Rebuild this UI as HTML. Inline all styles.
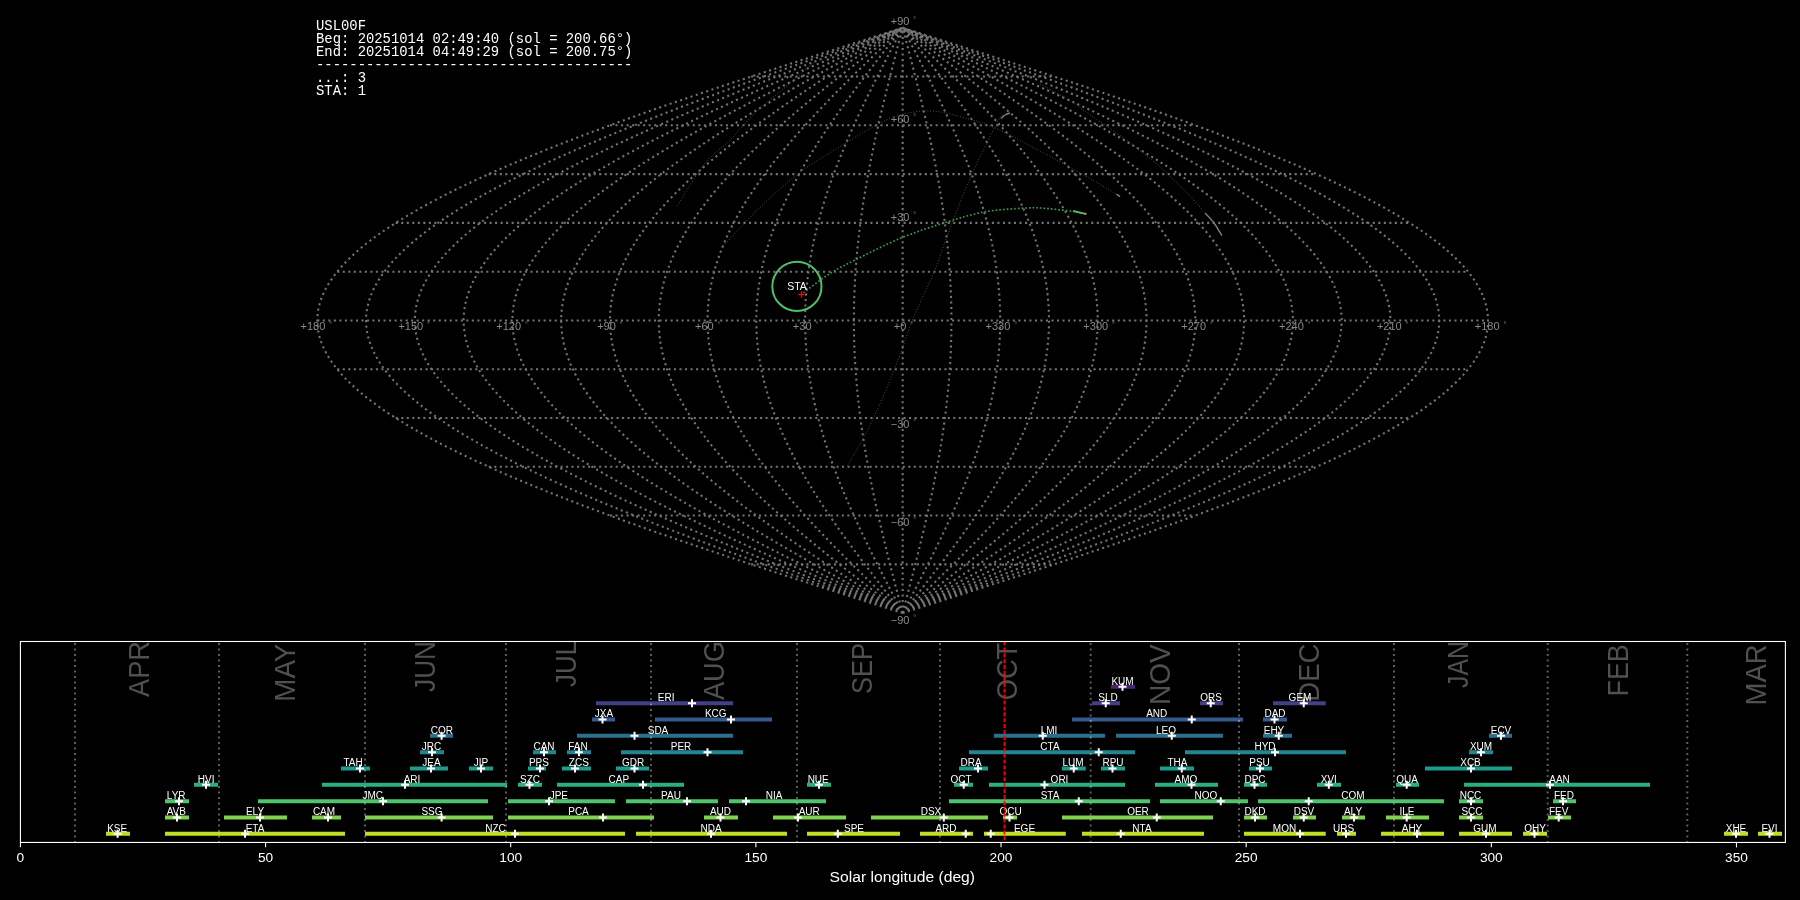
<!DOCTYPE html><html><head><meta charset="utf-8"><style>html,body{margin:0;padding:0;background:#000;width:1800px;height:900px;overflow:hidden}svg{display:block}text{font-family:"Liberation Sans",sans-serif}.mono{font-family:"Liberation Mono",monospace}</style></head><body>
<svg width="1800" height="900" viewBox="0 0 1800 900" style="will-change:transform">
<rect width="1800" height="900" fill="#000"/>
<text class="mono" x="316" y="29.80" fill="#fff" font-size="13.89" style="white-space:pre">USL00F</text>
<text class="mono" x="316" y="42.70" fill="#fff" font-size="13.89" style="white-space:pre">Beg: 20251014 02:49:40 (sol = 200.66°)</text>
<text class="mono" x="316" y="56.40" fill="#fff" font-size="13.89" style="white-space:pre">End: 20251014 04:49:29 (sol = 200.75°)</text>
<text class="mono" x="316" y="69.00" fill="#fff" font-size="13.89" style="white-space:pre">--------------------------------------</text>
<text class="mono" x="316" y="81.80" fill="#fff" font-size="13.89" style="white-space:pre">...: 3</text>
<text class="mono" x="316" y="94.70" fill="#fff" font-size="13.89" style="white-space:pre">STA: 1</text>
<path stroke="#747474" stroke-width="2.083" stroke-dasharray="2.083 3.437" fill="none" d="M902.65 613.13 L907.76 611.50 L912.87 609.88 L917.97 608.25 L923.08 606.63 L928.18 605.00 L933.29 603.37 L938.39 601.75 L943.48 600.12 L948.58 598.50 L953.67 596.87 L958.75 595.24 L963.84 593.62 L968.91 591.99 L973.99 590.37 L979.05 588.74 L984.12 587.11 L989.17 585.49 L994.22 583.86 L999.26 582.24 L1004.30 580.61 L1009.32 578.98 L1014.34 577.36 L1019.35 575.73 L1024.35 574.11 L1029.35 572.48 L1034.33 570.85 L1039.30 569.23 L1044.26 567.60 L1049.21 565.98 L1054.15 564.35 L1059.08 562.72 L1064.00 561.10 L1068.90 559.47 L1073.79 557.85 L1078.67 556.22 L1083.54 554.59 L1088.39 552.97 L1093.22 551.34 L1098.05 549.72 L1102.85 548.09 L1107.65 546.46 L1112.42 544.84 L1117.19 543.21 L1121.93 541.59 L1126.66 539.96 L1131.37 538.33 L1136.06 536.71 L1140.74 535.08 L1145.39 533.46 L1150.03 531.83 L1154.65 530.20 L1159.25 528.58 L1163.84 526.95 L1168.40 525.33 L1172.94 523.70 L1177.46 522.07 L1181.96 520.45 L1186.44 518.82 L1190.90 517.20 L1195.33 515.57 L1199.74 513.94 L1204.13 512.32 L1208.50 510.69 L1212.84 509.07 L1217.16 507.44 L1221.46 505.81 L1225.73 504.19 L1229.98 502.56 L1234.20 500.94 L1238.40 499.31 L1242.57 497.68 L1246.72 496.06 L1250.84 494.43 L1254.93 492.81 L1258.99 491.18 L1263.03 489.55 L1267.05 487.93 L1271.03 486.30 L1274.98 484.68 L1278.91 483.05 L1282.81 481.42 L1286.68 479.80 L1290.52 478.17 L1294.33 476.55 L1298.11 474.92 L1301.86 473.29 L1305.59 471.67 L1309.28 470.04 L1312.93 468.42 L1316.56 466.79 L1320.16 465.16 L1323.72 463.54 L1327.26 461.91 L1330.76 460.29 L1334.22 458.66 L1337.66 457.03 L1341.06 455.41 L1344.43 453.78 L1347.76 452.16 L1351.06 450.53 L1354.33 448.90 L1357.56 447.28 L1360.76 445.65 L1363.92 444.03 L1367.05 442.40 L1370.14 440.77 L1373.20 439.15 L1376.22 437.52 L1379.20 435.90 L1382.15 434.27 L1385.06 432.64 L1387.94 431.02 L1390.77 429.39 L1393.57 427.77 L1396.34 426.14 L1399.06 424.51 L1401.75 422.89 L1404.40 421.26 L1407.01 419.64 L1409.59 418.01 L1412.12 416.38 L1414.62 414.76 L1417.07 413.13 L1419.49 411.51 L1421.87 409.88 L1424.21 408.25 L1426.51 406.63 L1428.77 405.00 L1430.99 403.38 L1433.17 401.75 L1435.30 400.12 L1437.40 398.50 L1439.46 396.87 L1441.48 395.25 L1443.45 393.62 L1445.39 391.99 L1447.28 390.37 L1449.13 388.74 L1450.94 387.12 L1452.71 385.49 L1454.43 383.86 L1456.12 382.24 L1457.76 380.61 L1459.36 378.99 L1460.92 377.36 L1462.43 375.73 L1463.90 374.11 L1465.33 372.48 L1466.72 370.86 L1468.06 369.23 L1469.36 367.60 L1470.62 365.98 L1471.84 364.35 L1473.01 362.73 L1474.13 361.10 L1475.22 359.47 L1476.26 357.85 L1477.26 356.22 L1478.21 354.60 L1479.12 352.97 L1479.98 351.34 L1480.80 349.72 L1481.58 348.09 L1482.31 346.47 L1483.00 344.84 L1483.65 343.21 L1484.25 341.59 L1484.80 339.96 L1485.32 338.34 L1485.78 336.71 L1486.21 335.08 L1486.58 333.46 L1486.92 331.83 L1487.21 330.21 L1487.45 328.58 L1487.65 326.95 L1487.81 325.33 L1487.92 323.70 L1487.99 322.08 L1488.01 320.45 L1487.99 318.82 L1487.92 317.20 L1487.81 315.57 L1487.65 313.95 L1487.45 312.32 L1487.21 310.69 L1486.92 309.07 L1486.58 307.44 L1486.21 305.82 L1485.78 304.19 L1485.32 302.56 L1484.80 300.94 L1484.25 299.31 L1483.65 297.69 L1483.00 296.06 L1482.31 294.43 L1481.58 292.81 L1480.80 291.18 L1479.98 289.56 L1479.12 287.93 L1478.21 286.30 L1477.26 284.68 L1476.26 283.05 L1475.22 281.43 L1474.13 279.80 L1473.01 278.17 L1471.84 276.55 L1470.62 274.92 L1469.36 273.30 L1468.06 271.67 L1466.72 270.04 L1465.33 268.42 L1463.90 266.79 L1462.43 265.17 L1460.92 263.54 L1459.36 261.91 L1457.76 260.29 L1456.12 258.66 L1454.43 257.04 L1452.71 255.41 L1450.94 253.78 L1449.13 252.16 L1447.28 250.53 L1445.39 248.91 L1443.45 247.28 L1441.48 245.65 L1439.46 244.03 L1437.40 242.40 L1435.30 240.78 L1433.17 239.15 L1430.99 237.52 L1428.77 235.90 L1426.51 234.27 L1424.21 232.65 L1421.87 231.02 L1419.49 229.39 L1417.07 227.77 L1414.62 226.14 L1412.12 224.52 L1409.59 222.89 L1407.01 221.26 L1404.40 219.64 L1401.75 218.01 L1399.06 216.39 L1396.34 214.76 L1393.57 213.13 L1390.77 211.51 L1387.94 209.88 L1385.06 208.26 L1382.15 206.63 L1379.20 205.00 L1376.22 203.38 L1373.20 201.75 L1370.14 200.13 L1367.05 198.50 L1363.92 196.87 L1360.76 195.25 L1357.56 193.62 L1354.33 192.00 L1351.06 190.37 L1347.76 188.74 L1344.43 187.12 L1341.06 185.49 L1337.66 183.87 L1334.22 182.24 L1330.76 180.61 L1327.26 178.99 L1323.72 177.36 L1320.16 175.74 L1316.56 174.11 L1312.93 172.48 L1309.28 170.86 L1305.59 169.23 L1301.86 167.61 L1298.11 165.98 L1294.33 164.35 L1290.52 162.73 L1286.68 161.10 L1282.81 159.48 L1278.91 157.85 L1274.98 156.22 L1271.03 154.60 L1267.05 152.97 L1263.03 151.35 L1258.99 149.72 L1254.93 148.09 L1250.84 146.47 L1246.72 144.84 L1242.57 143.22 L1238.40 141.59 L1234.20 139.96 L1229.98 138.34 L1225.73 136.71 L1221.46 135.09 L1217.16 133.46 L1212.84 131.83 L1208.50 130.21 L1204.13 128.58 L1199.74 126.96 L1195.33 125.33 L1190.90 123.70 L1186.44 122.08 L1181.96 120.45 L1177.46 118.83 L1172.94 117.20 L1168.40 115.57 L1163.84 113.95 L1159.25 112.32 L1154.65 110.70 L1150.03 109.07 L1145.39 107.44 L1140.74 105.82 L1136.06 104.19 L1131.37 102.57 L1126.66 100.94 L1121.93 99.31 L1117.19 97.69 L1112.42 96.06 L1107.65 94.44 L1102.85 92.81 L1098.05 91.18 L1093.22 89.56 L1088.39 87.93 L1083.54 86.31 L1078.67 84.68 L1073.79 83.05 L1068.90 81.43 L1064.00 79.80 L1059.08 78.18 L1054.15 76.55 L1049.21 74.92 L1044.26 73.30 L1039.30 71.67 L1034.33 70.05 L1029.35 68.42 L1024.35 66.79 L1019.35 65.17 L1014.34 63.54 L1009.32 61.92 L1004.30 60.29 L999.26 58.66 L994.22 57.04 L989.17 55.41 L984.12 53.79 L979.05 52.16 L973.99 50.53 L968.91 48.91 L963.84 47.28 L958.75 45.66 L953.67 44.03 L948.58 42.40 L943.48 40.78 L938.39 39.15 L933.29 37.53 L928.18 35.90 L923.08 34.27 L917.97 32.65 L912.87 31.02 L907.76 29.40 L902.65 27.77 M902.65 613.13 L907.33 611.50 L912.01 609.88 L916.70 608.25 L921.38 606.63 L926.06 605.00 L930.73 603.37 L935.41 601.75 L940.08 600.12 L944.75 598.50 L949.42 596.87 L954.08 595.24 L958.74 593.62 L963.39 591.99 L968.04 590.37 L972.69 588.74 L977.33 587.11 L981.96 585.49 L986.59 583.86 L991.21 582.24 L995.83 580.61 L1000.43 578.98 L1005.03 577.36 L1009.63 575.73 L1014.21 574.11 L1018.79 572.48 L1023.35 570.85 L1027.91 569.23 L1032.46 567.60 L1037.00 565.98 L1041.53 564.35 L1046.04 562.72 L1050.55 561.10 L1055.05 559.47 L1059.53 557.85 L1064.00 556.22 L1068.46 554.59 L1072.91 552.97 L1077.34 551.34 L1081.76 549.72 L1086.17 548.09 L1090.56 546.46 L1094.94 544.84 L1099.31 543.21 L1103.66 541.59 L1107.99 539.96 L1112.31 538.33 L1116.61 536.71 L1120.90 535.08 L1125.17 533.46 L1129.42 531.83 L1133.65 530.20 L1137.87 528.58 L1142.07 526.95 L1146.25 525.33 L1150.42 523.70 L1154.56 522.07 L1158.68 520.45 L1162.79 518.82 L1166.87 517.20 L1170.94 515.57 L1174.98 513.94 L1179.01 512.32 L1183.01 510.69 L1186.99 509.07 L1190.95 507.44 L1194.89 505.81 L1198.81 504.19 L1202.70 502.56 L1206.57 500.94 L1210.42 499.31 L1214.24 497.68 L1218.04 496.06 L1221.82 494.43 L1225.57 492.81 L1229.30 491.18 L1233.00 489.55 L1236.68 487.93 L1240.33 486.30 L1243.96 484.68 L1247.56 483.05 L1251.13 481.42 L1254.68 479.80 L1258.20 478.17 L1261.69 476.55 L1265.16 474.92 L1268.60 473.29 L1272.01 471.67 L1275.39 470.04 L1278.74 468.42 L1282.07 466.79 L1285.37 465.16 L1288.63 463.54 L1291.87 461.91 L1295.08 460.29 L1298.26 458.66 L1301.41 457.03 L1304.52 455.41 L1307.61 453.78 L1310.67 452.16 L1313.69 450.53 L1316.69 448.90 L1319.65 447.28 L1322.58 445.65 L1325.48 444.03 L1328.35 442.40 L1331.18 440.77 L1333.98 439.15 L1336.75 437.52 L1339.49 435.90 L1342.19 434.27 L1344.86 432.64 L1347.49 431.02 L1350.10 429.39 L1352.66 427.77 L1355.20 426.14 L1357.70 424.51 L1360.16 422.89 L1362.59 421.26 L1364.98 419.64 L1367.34 418.01 L1369.67 416.38 L1371.95 414.76 L1374.21 413.13 L1376.42 411.51 L1378.60 409.88 L1380.75 408.25 L1382.85 406.63 L1384.92 405.00 L1386.96 403.38 L1388.96 401.75 L1390.92 400.12 L1392.84 398.50 L1394.73 396.87 L1396.57 395.25 L1398.39 393.62 L1400.16 391.99 L1401.89 390.37 L1403.59 388.74 L1405.25 387.12 L1406.87 385.49 L1408.45 383.86 L1410.00 382.24 L1411.50 380.61 L1412.97 378.99 L1414.40 377.36 L1415.78 375.73 L1417.13 374.11 L1418.44 372.48 L1419.71 370.86 L1420.95 369.23 L1422.14 367.60 L1423.29 365.98 L1424.40 364.35 L1425.48 362.73 L1426.51 361.10 L1427.50 359.47 L1428.46 357.85 L1429.37 356.22 L1430.24 354.60 L1431.08 352.97 L1431.87 351.34 L1432.62 349.72 L1433.34 348.09 L1434.01 346.47 L1434.64 344.84 L1435.23 343.21 L1435.78 341.59 L1436.29 339.96 L1436.76 338.34 L1437.19 336.71 L1437.58 335.08 L1437.92 333.46 L1438.23 331.83 L1438.49 330.21 L1438.72 328.58 L1438.90 326.95 L1439.05 325.33 L1439.15 323.70 L1439.21 322.08 L1439.23 320.45 L1439.21 318.82 L1439.15 317.20 L1439.05 315.57 L1438.90 313.95 L1438.72 312.32 L1438.49 310.69 L1438.23 309.07 L1437.92 307.44 L1437.58 305.82 L1437.19 304.19 L1436.76 302.56 L1436.29 300.94 L1435.78 299.31 L1435.23 297.69 L1434.64 296.06 L1434.01 294.43 L1433.34 292.81 L1432.62 291.18 L1431.87 289.56 L1431.08 287.93 L1430.24 286.30 L1429.37 284.68 L1428.46 283.05 L1427.50 281.43 L1426.51 279.80 L1425.48 278.17 L1424.40 276.55 L1423.29 274.92 L1422.14 273.30 L1420.95 271.67 L1419.71 270.04 L1418.44 268.42 L1417.13 266.79 L1415.78 265.17 L1414.40 263.54 L1412.97 261.91 L1411.50 260.29 L1410.00 258.66 L1408.45 257.04 L1406.87 255.41 L1405.25 253.78 L1403.59 252.16 L1401.89 250.53 L1400.16 248.91 L1398.39 247.28 L1396.57 245.65 L1394.73 244.03 L1392.84 242.40 L1390.92 240.78 L1388.96 239.15 L1386.96 237.52 L1384.92 235.90 L1382.85 234.27 L1380.75 232.65 L1378.60 231.02 L1376.42 229.39 L1374.21 227.77 L1371.95 226.14 L1369.67 224.52 L1367.34 222.89 L1364.98 221.26 L1362.59 219.64 L1360.16 218.01 L1357.70 216.39 L1355.20 214.76 L1352.66 213.13 L1350.10 211.51 L1347.49 209.88 L1344.86 208.26 L1342.19 206.63 L1339.49 205.00 L1336.75 203.38 L1333.98 201.75 L1331.18 200.13 L1328.35 198.50 L1325.48 196.87 L1322.58 195.25 L1319.65 193.62 L1316.69 192.00 L1313.69 190.37 L1310.67 188.74 L1307.61 187.12 L1304.52 185.49 L1301.41 183.87 L1298.26 182.24 L1295.08 180.61 L1291.87 178.99 L1288.63 177.36 L1285.37 175.74 L1282.07 174.11 L1278.74 172.48 L1275.39 170.86 L1272.01 169.23 L1268.60 167.61 L1265.16 165.98 L1261.69 164.35 L1258.20 162.73 L1254.68 161.10 L1251.13 159.48 L1247.56 157.85 L1243.96 156.22 L1240.33 154.60 L1236.68 152.97 L1233.00 151.35 L1229.30 149.72 L1225.57 148.09 L1221.82 146.47 L1218.04 144.84 L1214.24 143.22 L1210.42 141.59 L1206.57 139.96 L1202.70 138.34 L1198.81 136.71 L1194.89 135.09 L1190.95 133.46 L1186.99 131.83 L1183.01 130.21 L1179.01 128.58 L1174.98 126.96 L1170.94 125.33 L1166.87 123.70 L1162.79 122.08 L1158.68 120.45 L1154.56 118.83 L1150.42 117.20 L1146.25 115.57 L1142.07 113.95 L1137.87 112.32 L1133.65 110.70 L1129.42 109.07 L1125.17 107.44 L1120.90 105.82 L1116.61 104.19 L1112.31 102.57 L1107.99 100.94 L1103.66 99.31 L1099.31 97.69 L1094.94 96.06 L1090.56 94.44 L1086.17 92.81 L1081.76 91.18 L1077.34 89.56 L1072.91 87.93 L1068.46 86.31 L1064.00 84.68 L1059.53 83.05 L1055.05 81.43 L1050.55 79.80 L1046.04 78.18 L1041.53 76.55 L1037.00 74.92 L1032.46 73.30 L1027.91 71.67 L1023.35 70.05 L1018.79 68.42 L1014.21 66.79 L1009.63 65.17 L1005.03 63.54 L1000.43 61.92 L995.83 60.29 L991.21 58.66 L986.59 57.04 L981.96 55.41 L977.33 53.79 L972.69 52.16 L968.04 50.53 L963.39 48.91 L958.74 47.28 L954.08 45.66 L949.42 44.03 L944.75 42.40 L940.08 40.78 L935.41 39.15 L930.73 37.53 L926.06 35.90 L921.38 34.27 L916.70 32.65 L912.01 31.02 L907.33 29.40 L902.65 27.77 M902.65 613.13 L906.91 611.50 L911.16 609.88 L915.42 608.25 L919.67 606.63 L923.93 605.00 L928.18 603.37 L932.43 601.75 L936.68 600.12 L940.92 598.50 L945.16 596.87 L949.40 595.24 L953.64 593.62 L957.87 591.99 L962.10 590.37 L966.32 588.74 L970.54 587.11 L974.75 585.49 L978.96 583.86 L983.16 582.24 L987.36 580.61 L991.54 578.98 L995.73 577.36 L999.90 575.73 L1004.07 574.11 L1008.23 572.48 L1012.38 570.85 L1016.52 569.23 L1020.66 567.60 L1024.79 565.98 L1028.90 564.35 L1033.01 562.72 L1037.11 561.10 L1041.19 559.47 L1045.27 557.85 L1049.33 556.22 L1053.39 554.59 L1057.43 552.97 L1061.46 551.34 L1065.48 549.72 L1069.49 548.09 L1073.48 546.46 L1077.46 544.84 L1081.43 543.21 L1085.38 541.59 L1089.32 539.96 L1093.25 538.33 L1097.16 536.71 L1101.06 535.08 L1104.94 533.46 L1108.80 531.83 L1112.65 530.20 L1116.49 528.58 L1120.31 526.95 L1124.11 525.33 L1127.89 523.70 L1131.66 522.07 L1135.41 520.45 L1139.14 518.82 L1142.85 517.20 L1146.55 515.57 L1150.23 513.94 L1153.89 512.32 L1157.52 510.69 L1161.14 509.07 L1164.74 507.44 L1168.32 505.81 L1171.88 504.19 L1175.42 502.56 L1178.94 500.94 L1182.44 499.31 L1185.92 497.68 L1189.37 496.06 L1192.80 494.43 L1196.22 492.81 L1199.60 491.18 L1202.97 489.55 L1206.31 487.93 L1209.63 486.30 L1212.93 484.68 L1216.20 483.05 L1219.45 481.42 L1222.68 479.80 L1225.88 478.17 L1229.05 476.55 L1232.20 474.92 L1235.33 473.29 L1238.43 471.67 L1241.50 470.04 L1244.55 468.42 L1247.58 466.79 L1250.57 465.16 L1253.54 463.54 L1256.49 461.91 L1259.40 460.29 L1262.29 458.66 L1265.16 457.03 L1267.99 455.41 L1270.80 453.78 L1273.58 452.16 L1276.33 450.53 L1279.05 448.90 L1281.74 447.28 L1284.41 445.65 L1287.04 444.03 L1289.65 442.40 L1292.22 440.77 L1294.77 439.15 L1297.29 437.52 L1299.78 435.90 L1302.23 434.27 L1304.66 432.64 L1307.05 431.02 L1309.42 429.39 L1311.75 427.77 L1314.06 426.14 L1316.33 424.51 L1318.57 422.89 L1320.78 421.26 L1322.95 419.64 L1325.10 418.01 L1327.21 416.38 L1329.29 414.76 L1331.34 413.13 L1333.35 411.51 L1335.33 409.88 L1337.28 408.25 L1339.20 406.63 L1341.08 405.00 L1342.93 403.38 L1344.75 401.75 L1346.53 400.12 L1348.28 398.50 L1349.99 396.87 L1351.67 395.25 L1353.32 393.62 L1354.93 391.99 L1356.51 390.37 L1358.05 388.74 L1359.56 387.12 L1361.03 385.49 L1362.47 383.86 L1363.87 382.24 L1365.24 380.61 L1366.58 378.99 L1367.87 377.36 L1369.14 375.73 L1370.36 374.11 L1371.55 372.48 L1372.71 370.86 L1373.83 369.23 L1374.91 367.60 L1375.96 365.98 L1376.97 364.35 L1377.95 362.73 L1378.89 361.10 L1379.79 359.47 L1380.66 357.85 L1381.49 356.22 L1382.28 354.60 L1383.04 352.97 L1383.76 351.34 L1384.44 349.72 L1385.09 348.09 L1385.70 346.47 L1386.28 344.84 L1386.81 343.21 L1387.31 341.59 L1387.78 339.96 L1388.20 338.34 L1388.59 336.71 L1388.95 335.08 L1389.26 333.46 L1389.54 331.83 L1389.78 330.21 L1389.99 328.58 L1390.15 326.95 L1390.28 325.33 L1390.38 323.70 L1390.43 322.08 L1390.45 320.45 L1390.43 318.82 L1390.38 317.20 L1390.28 315.57 L1390.15 313.95 L1389.99 312.32 L1389.78 310.69 L1389.54 309.07 L1389.26 307.44 L1388.95 305.82 L1388.59 304.19 L1388.20 302.56 L1387.78 300.94 L1387.31 299.31 L1386.81 297.69 L1386.28 296.06 L1385.70 294.43 L1385.09 292.81 L1384.44 291.18 L1383.76 289.56 L1383.04 287.93 L1382.28 286.30 L1381.49 284.68 L1380.66 283.05 L1379.79 281.43 L1378.89 279.80 L1377.95 278.17 L1376.97 276.55 L1375.96 274.92 L1374.91 273.30 L1373.83 271.67 L1372.71 270.04 L1371.55 268.42 L1370.36 266.79 L1369.14 265.17 L1367.87 263.54 L1366.58 261.91 L1365.24 260.29 L1363.87 258.66 L1362.47 257.04 L1361.03 255.41 L1359.56 253.78 L1358.05 252.16 L1356.51 250.53 L1354.93 248.91 L1353.32 247.28 L1351.67 245.65 L1349.99 244.03 L1348.28 242.40 L1346.53 240.78 L1344.75 239.15 L1342.93 237.52 L1341.08 235.90 L1339.20 234.27 L1337.28 232.65 L1335.33 231.02 L1333.35 229.39 L1331.34 227.77 L1329.29 226.14 L1327.21 224.52 L1325.10 222.89 L1322.95 221.26 L1320.78 219.64 L1318.57 218.01 L1316.33 216.39 L1314.06 214.76 L1311.75 213.13 L1309.42 211.51 L1307.05 209.88 L1304.66 208.26 L1302.23 206.63 L1299.78 205.00 L1297.29 203.38 L1294.77 201.75 L1292.22 200.13 L1289.65 198.50 L1287.04 196.87 L1284.41 195.25 L1281.74 193.62 L1279.05 192.00 L1276.33 190.37 L1273.58 188.74 L1270.80 187.12 L1267.99 185.49 L1265.16 183.87 L1262.29 182.24 L1259.40 180.61 L1256.49 178.99 L1253.54 177.36 L1250.57 175.74 L1247.58 174.11 L1244.55 172.48 L1241.50 170.86 L1238.43 169.23 L1235.33 167.61 L1232.20 165.98 L1229.05 164.35 L1225.88 162.73 L1222.68 161.10 L1219.45 159.48 L1216.20 157.85 L1212.93 156.22 L1209.63 154.60 L1206.31 152.97 L1202.97 151.35 L1199.60 149.72 L1196.22 148.09 L1192.80 146.47 L1189.37 144.84 L1185.92 143.22 L1182.44 141.59 L1178.94 139.96 L1175.42 138.34 L1171.88 136.71 L1168.32 135.09 L1164.74 133.46 L1161.14 131.83 L1157.52 130.21 L1153.89 128.58 L1150.23 126.96 L1146.55 125.33 L1142.85 123.70 L1139.14 122.08 L1135.41 120.45 L1131.66 118.83 L1127.89 117.20 L1124.11 115.57 L1120.31 113.95 L1116.49 112.32 L1112.65 110.70 L1108.80 109.07 L1104.94 107.44 L1101.06 105.82 L1097.16 104.19 L1093.25 102.57 L1089.32 100.94 L1085.38 99.31 L1081.43 97.69 L1077.46 96.06 L1073.48 94.44 L1069.49 92.81 L1065.48 91.18 L1061.46 89.56 L1057.43 87.93 L1053.39 86.31 L1049.33 84.68 L1045.27 83.05 L1041.19 81.43 L1037.11 79.80 L1033.01 78.18 L1028.90 76.55 L1024.79 74.92 L1020.66 73.30 L1016.52 71.67 L1012.38 70.05 L1008.23 68.42 L1004.07 66.79 L999.90 65.17 L995.73 63.54 L991.54 61.92 L987.36 60.29 L983.16 58.66 L978.96 57.04 L974.75 55.41 L970.54 53.79 L966.32 52.16 L962.10 50.53 L957.87 48.91 L953.64 47.28 L949.40 45.66 L945.16 44.03 L940.92 42.40 L936.68 40.78 L932.43 39.15 L928.18 37.53 L923.93 35.90 L919.67 34.27 L915.42 32.65 L911.16 31.02 L906.91 29.40 L902.65 27.77 M902.65 613.13 L906.48 611.50 L910.31 609.88 L914.14 608.25 L917.97 606.63 L921.80 605.00 L925.63 603.37 L929.45 601.75 L933.27 600.12 L937.10 598.50 L940.91 596.87 L944.73 595.24 L948.54 593.62 L952.35 591.99 L956.15 590.37 L959.95 588.74 L963.75 587.11 L967.54 585.49 L971.33 583.86 L975.11 582.24 L978.89 580.61 L982.66 578.98 L986.42 577.36 L990.18 575.73 L993.93 574.11 L997.67 572.48 L1001.41 570.85 L1005.14 569.23 L1008.86 567.60 L1012.57 565.98 L1016.28 564.35 L1019.97 562.72 L1023.66 561.10 L1027.34 559.47 L1031.01 557.85 L1034.67 556.22 L1038.31 554.59 L1041.95 552.97 L1045.58 551.34 L1049.20 549.72 L1052.80 548.09 L1056.40 546.46 L1059.98 544.84 L1063.55 543.21 L1067.11 541.59 L1070.66 539.96 L1074.19 538.33 L1077.71 536.71 L1081.22 535.08 L1084.71 533.46 L1088.19 531.83 L1091.65 530.20 L1095.10 528.58 L1098.54 526.95 L1101.96 525.33 L1105.37 523.70 L1108.76 522.07 L1112.13 520.45 L1115.49 518.82 L1118.83 517.20 L1122.16 515.57 L1125.47 513.94 L1128.76 512.32 L1132.04 510.69 L1135.30 509.07 L1138.54 507.44 L1141.76 505.81 L1144.96 504.19 L1148.15 502.56 L1151.31 500.94 L1154.46 499.31 L1157.59 497.68 L1160.70 496.06 L1163.79 494.43 L1166.86 492.81 L1169.91 491.18 L1172.94 489.55 L1175.95 487.93 L1178.93 486.30 L1181.90 484.68 L1184.85 483.05 L1187.77 481.42 L1190.67 479.80 L1193.55 478.17 L1196.41 476.55 L1199.25 474.92 L1202.06 473.29 L1204.85 471.67 L1207.62 470.04 L1210.36 468.42 L1213.08 466.79 L1215.78 465.16 L1218.45 463.54 L1221.10 461.91 L1223.73 460.29 L1226.33 458.66 L1228.91 457.03 L1231.46 455.41 L1233.98 453.78 L1236.48 452.16 L1238.96 450.53 L1241.41 448.90 L1243.83 447.28 L1246.23 445.65 L1248.60 444.03 L1250.95 442.40 L1253.27 440.77 L1255.56 439.15 L1257.82 437.52 L1260.06 435.90 L1262.27 434.27 L1264.46 432.64 L1266.61 431.02 L1268.74 429.39 L1270.84 427.77 L1272.92 426.14 L1274.96 424.51 L1276.98 422.89 L1278.96 421.26 L1280.92 419.64 L1282.85 418.01 L1284.75 416.38 L1286.63 414.76 L1288.47 413.13 L1290.28 411.51 L1292.07 409.88 L1293.82 408.25 L1295.54 406.63 L1297.24 405.00 L1298.90 403.38 L1300.54 401.75 L1302.14 400.12 L1303.71 398.50 L1305.26 396.87 L1306.77 395.25 L1308.25 393.62 L1309.70 391.99 L1311.12 390.37 L1312.51 388.74 L1313.87 387.12 L1315.19 385.49 L1316.49 383.86 L1317.75 382.24 L1318.98 380.61 L1320.18 378.99 L1321.35 377.36 L1322.49 375.73 L1323.59 374.11 L1324.66 372.48 L1325.70 370.86 L1326.71 369.23 L1327.69 367.60 L1328.63 365.98 L1329.54 364.35 L1330.42 362.73 L1331.26 361.10 L1332.08 359.47 L1332.86 357.85 L1333.60 356.22 L1334.32 354.60 L1335.00 352.97 L1335.65 351.34 L1336.26 349.72 L1336.85 348.09 L1337.40 346.47 L1337.91 344.84 L1338.40 343.21 L1338.85 341.59 L1339.27 339.96 L1339.65 338.34 L1340.00 336.71 L1340.32 335.08 L1340.60 333.46 L1340.85 331.83 L1341.07 330.21 L1341.25 328.58 L1341.40 326.95 L1341.52 325.33 L1341.60 323.70 L1341.65 322.08 L1341.67 320.45 L1341.65 318.82 L1341.60 317.20 L1341.52 315.57 L1341.40 313.95 L1341.25 312.32 L1341.07 310.69 L1340.85 309.07 L1340.60 307.44 L1340.32 305.82 L1340.00 304.19 L1339.65 302.56 L1339.27 300.94 L1338.85 299.31 L1338.40 297.69 L1337.91 296.06 L1337.40 294.43 L1336.85 292.81 L1336.26 291.18 L1335.65 289.56 L1335.00 287.93 L1334.32 286.30 L1333.60 284.68 L1332.86 283.05 L1332.08 281.43 L1331.26 279.80 L1330.42 278.17 L1329.54 276.55 L1328.63 274.92 L1327.69 273.30 L1326.71 271.67 L1325.70 270.04 L1324.66 268.42 L1323.59 266.79 L1322.49 265.17 L1321.35 263.54 L1320.18 261.91 L1318.98 260.29 L1317.75 258.66 L1316.49 257.04 L1315.19 255.41 L1313.87 253.78 L1312.51 252.16 L1311.12 250.53 L1309.70 248.91 L1308.25 247.28 L1306.77 245.65 L1305.26 244.03 L1303.71 242.40 L1302.14 240.78 L1300.54 239.15 L1298.90 237.52 L1297.24 235.90 L1295.54 234.27 L1293.82 232.65 L1292.07 231.02 L1290.28 229.39 L1288.47 227.77 L1286.63 226.14 L1284.75 224.52 L1282.85 222.89 L1280.92 221.26 L1278.96 219.64 L1276.98 218.01 L1274.96 216.39 L1272.92 214.76 L1270.84 213.13 L1268.74 211.51 L1266.61 209.88 L1264.46 208.26 L1262.27 206.63 L1260.06 205.00 L1257.82 203.38 L1255.56 201.75 L1253.27 200.13 L1250.95 198.50 L1248.60 196.87 L1246.23 195.25 L1243.83 193.62 L1241.41 192.00 L1238.96 190.37 L1236.48 188.74 L1233.98 187.12 L1231.46 185.49 L1228.91 183.87 L1226.33 182.24 L1223.73 180.61 L1221.10 178.99 L1218.45 177.36 L1215.78 175.74 L1213.08 174.11 L1210.36 172.48 L1207.62 170.86 L1204.85 169.23 L1202.06 167.61 L1199.25 165.98 L1196.41 164.35 L1193.55 162.73 L1190.67 161.10 L1187.77 159.48 L1184.85 157.85 L1181.90 156.22 L1178.93 154.60 L1175.95 152.97 L1172.94 151.35 L1169.91 149.72 L1166.86 148.09 L1163.79 146.47 L1160.70 144.84 L1157.59 143.22 L1154.46 141.59 L1151.31 139.96 L1148.15 138.34 L1144.96 136.71 L1141.76 135.09 L1138.54 133.46 L1135.30 131.83 L1132.04 130.21 L1128.76 128.58 L1125.47 126.96 L1122.16 125.33 L1118.83 123.70 L1115.49 122.08 L1112.13 120.45 L1108.76 118.83 L1105.37 117.20 L1101.96 115.57 L1098.54 113.95 L1095.10 112.32 L1091.65 110.70 L1088.19 109.07 L1084.71 107.44 L1081.22 105.82 L1077.71 104.19 L1074.19 102.57 L1070.66 100.94 L1067.11 99.31 L1063.55 97.69 L1059.98 96.06 L1056.40 94.44 L1052.80 92.81 L1049.20 91.18 L1045.58 89.56 L1041.95 87.93 L1038.31 86.31 L1034.67 84.68 L1031.01 83.05 L1027.34 81.43 L1023.66 79.80 L1019.97 78.18 L1016.28 76.55 L1012.57 74.92 L1008.86 73.30 L1005.14 71.67 L1001.41 70.05 L997.67 68.42 L993.93 66.79 L990.18 65.17 L986.42 63.54 L982.66 61.92 L978.89 60.29 L975.11 58.66 L971.33 57.04 L967.54 55.41 L963.75 53.79 L959.95 52.16 L956.15 50.53 L952.35 48.91 L948.54 47.28 L944.73 45.66 L940.91 44.03 L937.10 42.40 L933.27 40.78 L929.45 39.15 L925.63 37.53 L921.80 35.90 L917.97 34.27 L914.14 32.65 L910.31 31.02 L906.48 29.40 L902.65 27.77 M902.65 613.13 L906.06 611.50 L909.46 609.88 L912.87 608.25 L916.27 606.63 L919.67 605.00 L923.07 603.37 L926.47 601.75 L929.87 600.12 L933.27 598.50 L936.66 596.87 L940.05 595.24 L943.44 593.62 L946.83 591.99 L950.21 590.37 L953.59 588.74 L956.96 587.11 L960.33 585.49 L963.70 583.86 L967.06 582.24 L970.41 580.61 L973.77 578.98 L977.11 577.36 L980.45 575.73 L983.79 574.11 L987.11 572.48 L990.43 570.85 L993.75 569.23 L997.06 567.60 L1000.36 565.98 L1003.65 564.35 L1006.94 562.72 L1010.21 561.10 L1013.48 559.47 L1016.75 557.85 L1020.00 556.22 L1023.24 554.59 L1026.47 552.97 L1029.70 551.34 L1032.91 549.72 L1036.12 548.09 L1039.31 546.46 L1042.50 544.84 L1045.67 543.21 L1048.84 541.59 L1051.99 539.96 L1055.13 538.33 L1058.26 536.71 L1061.37 535.08 L1064.48 533.46 L1067.57 531.83 L1070.65 530.20 L1073.72 528.58 L1076.77 526.95 L1079.82 525.33 L1082.84 523.70 L1085.86 522.07 L1088.86 520.45 L1091.84 518.82 L1094.81 517.20 L1097.77 515.57 L1100.71 513.94 L1103.64 512.32 L1106.55 510.69 L1109.45 509.07 L1112.33 507.44 L1115.19 505.81 L1118.04 504.19 L1120.87 502.56 L1123.68 500.94 L1126.48 499.31 L1129.26 497.68 L1132.03 496.06 L1134.77 494.43 L1137.50 492.81 L1140.21 491.18 L1142.91 489.55 L1145.58 487.93 L1148.24 486.30 L1150.87 484.68 L1153.49 483.05 L1156.09 481.42 L1158.67 479.80 L1161.23 478.17 L1163.77 476.55 L1166.29 474.92 L1168.79 473.29 L1171.27 471.67 L1173.73 470.04 L1176.17 468.42 L1178.59 466.79 L1180.99 465.16 L1183.37 463.54 L1185.72 461.91 L1188.05 460.29 L1190.37 458.66 L1192.65 457.03 L1194.92 455.41 L1197.17 453.78 L1199.39 452.16 L1201.59 450.53 L1203.77 448.90 L1205.92 447.28 L1208.06 445.65 L1210.16 444.03 L1212.25 442.40 L1214.31 440.77 L1216.35 439.15 L1218.36 437.52 L1220.35 435.90 L1222.32 434.27 L1224.26 432.64 L1226.17 431.02 L1228.07 429.39 L1229.93 427.77 L1231.78 426.14 L1233.59 424.51 L1235.38 422.89 L1237.15 421.26 L1238.89 419.64 L1240.61 418.01 L1242.30 416.38 L1243.96 414.76 L1245.60 413.13 L1247.21 411.51 L1248.80 409.88 L1250.36 408.25 L1251.89 406.63 L1253.40 405.00 L1254.87 403.38 L1256.33 401.75 L1257.75 400.12 L1259.15 398.50 L1260.52 396.87 L1261.87 395.25 L1263.18 393.62 L1264.47 391.99 L1265.74 390.37 L1266.97 388.74 L1268.18 387.12 L1269.36 385.49 L1270.51 383.86 L1271.63 382.24 L1272.72 380.61 L1273.79 378.99 L1274.83 377.36 L1275.84 375.73 L1276.82 374.11 L1277.77 372.48 L1278.70 370.86 L1279.59 369.23 L1280.46 367.60 L1281.30 365.98 L1282.11 364.35 L1282.89 362.73 L1283.64 361.10 L1284.36 359.47 L1285.06 357.85 L1285.72 356.22 L1286.36 354.60 L1286.96 352.97 L1287.54 351.34 L1288.09 349.72 L1288.60 348.09 L1289.09 346.47 L1289.55 344.84 L1289.98 343.21 L1290.38 341.59 L1290.75 339.96 L1291.09 338.34 L1291.41 336.71 L1291.69 335.08 L1291.94 333.46 L1292.16 331.83 L1292.36 330.21 L1292.52 328.58 L1292.65 326.95 L1292.76 325.33 L1292.83 323.70 L1292.88 322.08 L1292.89 320.45 L1292.88 318.82 L1292.83 317.20 L1292.76 315.57 L1292.65 313.95 L1292.52 312.32 L1292.36 310.69 L1292.16 309.07 L1291.94 307.44 L1291.69 305.82 L1291.41 304.19 L1291.09 302.56 L1290.75 300.94 L1290.38 299.31 L1289.98 297.69 L1289.55 296.06 L1289.09 294.43 L1288.60 292.81 L1288.09 291.18 L1287.54 289.56 L1286.96 287.93 L1286.36 286.30 L1285.72 284.68 L1285.06 283.05 L1284.36 281.43 L1283.64 279.80 L1282.89 278.17 L1282.11 276.55 L1281.30 274.92 L1280.46 273.30 L1279.59 271.67 L1278.70 270.04 L1277.77 268.42 L1276.82 266.79 L1275.84 265.17 L1274.83 263.54 L1273.79 261.91 L1272.72 260.29 L1271.63 258.66 L1270.51 257.04 L1269.36 255.41 L1268.18 253.78 L1266.97 252.16 L1265.74 250.53 L1264.47 248.91 L1263.18 247.28 L1261.87 245.65 L1260.52 244.03 L1259.15 242.40 L1257.75 240.78 L1256.33 239.15 L1254.87 237.52 L1253.40 235.90 L1251.89 234.27 L1250.36 232.65 L1248.80 231.02 L1247.21 229.39 L1245.60 227.77 L1243.96 226.14 L1242.30 224.52 L1240.61 222.89 L1238.89 221.26 L1237.15 219.64 L1235.38 218.01 L1233.59 216.39 L1231.78 214.76 L1229.93 213.13 L1228.07 211.51 L1226.17 209.88 L1224.26 208.26 L1222.32 206.63 L1220.35 205.00 L1218.36 203.38 L1216.35 201.75 L1214.31 200.13 L1212.25 198.50 L1210.16 196.87 L1208.06 195.25 L1205.92 193.62 L1203.77 192.00 L1201.59 190.37 L1199.39 188.74 L1197.17 187.12 L1194.92 185.49 L1192.65 183.87 L1190.37 182.24 L1188.05 180.61 L1185.72 178.99 L1183.37 177.36 L1180.99 175.74 L1178.59 174.11 L1176.17 172.48 L1173.73 170.86 L1171.27 169.23 L1168.79 167.61 L1166.29 165.98 L1163.77 164.35 L1161.23 162.73 L1158.67 161.10 L1156.09 159.48 L1153.49 157.85 L1150.87 156.22 L1148.24 154.60 L1145.58 152.97 L1142.91 151.35 L1140.21 149.72 L1137.50 148.09 L1134.77 146.47 L1132.03 144.84 L1129.26 143.22 L1126.48 141.59 L1123.68 139.96 L1120.87 138.34 L1118.04 136.71 L1115.19 135.09 L1112.33 133.46 L1109.45 131.83 L1106.55 130.21 L1103.64 128.58 L1100.71 126.96 L1097.77 125.33 L1094.81 123.70 L1091.84 122.08 L1088.86 120.45 L1085.86 118.83 L1082.84 117.20 L1079.82 115.57 L1076.77 113.95 L1073.72 112.32 L1070.65 110.70 L1067.57 109.07 L1064.48 107.44 L1061.37 105.82 L1058.26 104.19 L1055.13 102.57 L1051.99 100.94 L1048.84 99.31 L1045.67 97.69 L1042.50 96.06 L1039.31 94.44 L1036.12 92.81 L1032.91 91.18 L1029.70 89.56 L1026.47 87.93 L1023.24 86.31 L1020.00 84.68 L1016.75 83.05 L1013.48 81.43 L1010.21 79.80 L1006.94 78.18 L1003.65 76.55 L1000.36 74.92 L997.06 73.30 L993.75 71.67 L990.43 70.05 L987.11 68.42 L983.79 66.79 L980.45 65.17 L977.11 63.54 L973.77 61.92 L970.41 60.29 L967.06 58.66 L963.70 57.04 L960.33 55.41 L956.96 53.79 L953.59 52.16 L950.21 50.53 L946.83 48.91 L943.44 47.28 L940.05 45.66 L936.66 44.03 L933.27 42.40 L929.87 40.78 L926.47 39.15 L923.07 37.53 L919.67 35.90 L916.27 34.27 L912.87 32.65 L909.46 31.02 L906.06 29.40 L902.65 27.77 M902.65 613.13 L905.63 611.50 L908.61 609.88 L911.59 608.25 L914.57 606.63 L917.54 605.00 L920.52 603.37 L923.50 601.75 L926.47 600.12 L929.44 598.50 L932.41 596.87 L935.38 595.24 L938.34 593.62 L941.30 591.99 L944.26 590.37 L947.22 588.74 L950.17 587.11 L953.12 585.49 L956.07 583.86 L959.01 582.24 L961.94 580.61 L964.88 578.98 L967.80 577.36 L970.73 575.73 L973.64 574.11 L976.56 572.48 L979.46 570.85 L982.36 569.23 L985.26 567.60 L988.14 565.98 L991.03 564.35 L993.90 562.72 L996.77 561.10 L999.63 559.47 L1002.48 557.85 L1005.33 556.22 L1008.17 554.59 L1011.00 552.97 L1013.82 551.34 L1016.63 549.72 L1019.44 548.09 L1022.23 546.46 L1025.02 544.84 L1027.80 543.21 L1030.56 541.59 L1033.32 539.96 L1036.07 538.33 L1038.81 536.71 L1041.53 535.08 L1044.25 533.46 L1046.96 531.83 L1049.65 530.20 L1052.34 528.58 L1055.01 526.95 L1057.67 525.33 L1060.32 523.70 L1062.96 522.07 L1065.58 520.45 L1068.19 518.82 L1070.79 517.20 L1073.38 515.57 L1075.95 513.94 L1078.51 512.32 L1081.06 510.69 L1083.60 509.07 L1086.12 507.44 L1088.62 505.81 L1091.11 504.19 L1093.59 502.56 L1096.06 500.94 L1098.50 499.31 L1100.94 497.68 L1103.36 496.06 L1105.76 494.43 L1108.15 492.81 L1110.52 491.18 L1112.87 489.55 L1115.21 487.93 L1117.54 486.30 L1119.85 484.68 L1122.14 483.05 L1124.41 481.42 L1126.67 479.80 L1128.91 478.17 L1131.13 476.55 L1133.34 474.92 L1135.53 473.29 L1137.70 471.67 L1139.85 470.04 L1141.98 468.42 L1144.10 466.79 L1146.20 465.16 L1148.28 463.54 L1150.34 461.91 L1152.38 460.29 L1154.40 458.66 L1156.40 457.03 L1158.39 455.41 L1160.35 453.78 L1162.30 452.16 L1164.22 450.53 L1166.13 448.90 L1168.01 447.28 L1169.88 445.65 L1171.72 444.03 L1173.55 442.40 L1175.35 440.77 L1177.13 439.15 L1178.90 437.52 L1180.64 435.90 L1182.36 434.27 L1184.06 432.64 L1185.73 431.02 L1187.39 429.39 L1189.02 427.77 L1190.63 426.14 L1192.22 424.51 L1193.79 422.89 L1195.34 421.26 L1196.86 419.64 L1198.36 418.01 L1199.84 416.38 L1201.30 414.76 L1202.73 413.13 L1204.14 411.51 L1205.53 409.88 L1206.89 408.25 L1208.23 406.63 L1209.55 405.00 L1210.85 403.38 L1212.12 401.75 L1213.37 400.12 L1214.59 398.50 L1215.79 396.87 L1216.97 395.25 L1218.12 393.62 L1219.25 391.99 L1220.35 390.37 L1221.43 388.74 L1222.49 387.12 L1223.52 385.49 L1224.52 383.86 L1225.51 382.24 L1226.46 380.61 L1227.40 378.99 L1228.31 377.36 L1229.19 375.73 L1230.05 374.11 L1230.88 372.48 L1231.69 370.86 L1232.48 369.23 L1233.23 367.60 L1233.97 365.98 L1234.68 364.35 L1235.36 362.73 L1236.02 361.10 L1236.65 359.47 L1237.26 357.85 L1237.84 356.22 L1238.39 354.60 L1238.92 352.97 L1239.43 351.34 L1239.91 349.72 L1240.36 348.09 L1240.79 346.47 L1241.19 344.84 L1241.56 343.21 L1241.92 341.59 L1242.24 339.96 L1242.54 338.34 L1242.81 336.71 L1243.06 335.08 L1243.28 333.46 L1243.47 331.83 L1243.64 330.21 L1243.79 328.58 L1243.90 326.95 L1243.99 325.33 L1244.06 323.70 L1244.10 322.08 L1244.11 320.45 L1244.10 318.82 L1244.06 317.20 L1243.99 315.57 L1243.90 313.95 L1243.79 312.32 L1243.64 310.69 L1243.47 309.07 L1243.28 307.44 L1243.06 305.82 L1242.81 304.19 L1242.54 302.56 L1242.24 300.94 L1241.92 299.31 L1241.56 297.69 L1241.19 296.06 L1240.79 294.43 L1240.36 292.81 L1239.91 291.18 L1239.43 289.56 L1238.92 287.93 L1238.39 286.30 L1237.84 284.68 L1237.26 283.05 L1236.65 281.43 L1236.02 279.80 L1235.36 278.17 L1234.68 276.55 L1233.97 274.92 L1233.23 273.30 L1232.48 271.67 L1231.69 270.04 L1230.88 268.42 L1230.05 266.79 L1229.19 265.17 L1228.31 263.54 L1227.40 261.91 L1226.46 260.29 L1225.51 258.66 L1224.52 257.04 L1223.52 255.41 L1222.49 253.78 L1221.43 252.16 L1220.35 250.53 L1219.25 248.91 L1218.12 247.28 L1216.97 245.65 L1215.79 244.03 L1214.59 242.40 L1213.37 240.78 L1212.12 239.15 L1210.85 237.52 L1209.55 235.90 L1208.23 234.27 L1206.89 232.65 L1205.53 231.02 L1204.14 229.39 L1202.73 227.77 L1201.30 226.14 L1199.84 224.52 L1198.36 222.89 L1196.86 221.26 L1195.34 219.64 L1193.79 218.01 L1192.22 216.39 L1190.63 214.76 L1189.02 213.13 L1187.39 211.51 L1185.73 209.88 L1184.06 208.26 L1182.36 206.63 L1180.64 205.00 L1178.90 203.38 L1177.13 201.75 L1175.35 200.13 L1173.55 198.50 L1171.72 196.87 L1169.88 195.25 L1168.01 193.62 L1166.13 192.00 L1164.22 190.37 L1162.30 188.74 L1160.35 187.12 L1158.39 185.49 L1156.40 183.87 L1154.40 182.24 L1152.38 180.61 L1150.34 178.99 L1148.28 177.36 L1146.20 175.74 L1144.10 174.11 L1141.98 172.48 L1139.85 170.86 L1137.70 169.23 L1135.53 167.61 L1133.34 165.98 L1131.13 164.35 L1128.91 162.73 L1126.67 161.10 L1124.41 159.48 L1122.14 157.85 L1119.85 156.22 L1117.54 154.60 L1115.21 152.97 L1112.87 151.35 L1110.52 149.72 L1108.15 148.09 L1105.76 146.47 L1103.36 144.84 L1100.94 143.22 L1098.50 141.59 L1096.06 139.96 L1093.59 138.34 L1091.11 136.71 L1088.62 135.09 L1086.12 133.46 L1083.60 131.83 L1081.06 130.21 L1078.51 128.58 L1075.95 126.96 L1073.38 125.33 L1070.79 123.70 L1068.19 122.08 L1065.58 120.45 L1062.96 118.83 L1060.32 117.20 L1057.67 115.57 L1055.01 113.95 L1052.34 112.32 L1049.65 110.70 L1046.96 109.07 L1044.25 107.44 L1041.53 105.82 L1038.81 104.19 L1036.07 102.57 L1033.32 100.94 L1030.56 99.31 L1027.80 97.69 L1025.02 96.06 L1022.23 94.44 L1019.44 92.81 L1016.63 91.18 L1013.82 89.56 L1011.00 87.93 L1008.17 86.31 L1005.33 84.68 L1002.48 83.05 L999.63 81.43 L996.77 79.80 L993.90 78.18 L991.03 76.55 L988.14 74.92 L985.26 73.30 L982.36 71.67 L979.46 70.05 L976.56 68.42 L973.64 66.79 L970.73 65.17 L967.80 63.54 L964.88 61.92 L961.94 60.29 L959.01 58.66 L956.07 57.04 L953.12 55.41 L950.17 53.79 L947.22 52.16 L944.26 50.53 L941.30 48.91 L938.34 47.28 L935.38 45.66 L932.41 44.03 L929.44 42.40 L926.47 40.78 L923.50 39.15 L920.52 37.53 L917.54 35.90 L914.57 34.27 L911.59 32.65 L908.61 31.02 L905.63 29.40 L902.65 27.77 M902.65 613.13 L905.20 611.50 L907.76 609.88 L910.31 608.25 L912.86 606.63 L915.42 605.00 L917.97 603.37 L920.52 601.75 L923.07 600.12 L925.61 598.50 L928.16 596.87 L930.70 595.24 L933.24 593.62 L935.78 591.99 L938.32 590.37 L940.85 588.74 L943.38 587.11 L945.91 585.49 L948.44 583.86 L950.96 582.24 L953.47 580.61 L955.99 578.98 L958.50 577.36 L961.00 575.73 L963.50 574.11 L966.00 572.48 L968.49 570.85 L970.97 569.23 L973.46 567.60 L975.93 565.98 L978.40 564.35 L980.87 562.72 L983.32 561.10 L985.78 559.47 L988.22 557.85 L990.66 556.22 L993.09 554.59 L995.52 552.97 L997.94 551.34 L1000.35 549.72 L1002.75 548.09 L1005.15 546.46 L1007.54 544.84 L1009.92 543.21 L1012.29 541.59 L1014.65 539.96 L1017.01 538.33 L1019.36 536.71 L1021.69 535.08 L1024.02 533.46 L1026.34 531.83 L1028.65 530.20 L1030.95 528.58 L1033.24 526.95 L1035.52 525.33 L1037.79 523.70 L1040.05 522.07 L1042.30 520.45 L1044.54 518.82 L1046.77 517.20 L1048.99 515.57 L1051.20 513.94 L1053.39 512.32 L1055.57 510.69 L1057.75 509.07 L1059.91 507.44 L1062.05 505.81 L1064.19 504.19 L1066.31 502.56 L1068.43 500.94 L1070.52 499.31 L1072.61 497.68 L1074.68 496.06 L1076.74 494.43 L1078.79 492.81 L1080.82 491.18 L1082.84 489.55 L1084.85 487.93 L1086.84 486.30 L1088.82 484.68 L1090.78 483.05 L1092.73 481.42 L1094.67 479.80 L1096.59 478.17 L1098.49 476.55 L1100.38 474.92 L1102.26 473.29 L1104.12 471.67 L1105.96 470.04 L1107.79 468.42 L1109.61 466.79 L1111.40 465.16 L1113.19 463.54 L1114.95 461.91 L1116.70 460.29 L1118.44 458.66 L1120.15 457.03 L1121.85 455.41 L1123.54 453.78 L1125.21 452.16 L1126.86 450.53 L1128.49 448.90 L1130.11 447.28 L1131.70 445.65 L1133.28 444.03 L1134.85 442.40 L1136.39 440.77 L1137.92 439.15 L1139.43 437.52 L1140.93 435.90 L1142.40 434.27 L1143.86 432.64 L1145.29 431.02 L1146.71 429.39 L1148.11 427.77 L1149.49 426.14 L1150.86 424.51 L1152.20 422.89 L1153.53 421.26 L1154.83 419.64 L1156.12 418.01 L1157.39 416.38 L1158.63 414.76 L1159.86 413.13 L1161.07 411.51 L1162.26 409.88 L1163.43 408.25 L1164.58 406.63 L1165.71 405.00 L1166.82 403.38 L1167.91 401.75 L1168.98 400.12 L1170.03 398.50 L1171.06 396.87 L1172.06 395.25 L1173.05 393.62 L1174.02 391.99 L1174.96 390.37 L1175.89 388.74 L1176.80 387.12 L1177.68 385.49 L1178.54 383.86 L1179.38 382.24 L1180.21 380.61 L1181.01 378.99 L1181.78 377.36 L1182.54 375.73 L1183.28 374.11 L1183.99 372.48 L1184.69 370.86 L1185.36 369.23 L1186.01 367.60 L1186.64 365.98 L1187.24 364.35 L1187.83 362.73 L1188.39 361.10 L1188.93 359.47 L1189.45 357.85 L1189.95 356.22 L1190.43 354.60 L1190.88 352.97 L1191.32 351.34 L1191.73 349.72 L1192.12 348.09 L1192.48 346.47 L1192.83 344.84 L1193.15 343.21 L1193.45 341.59 L1193.73 339.96 L1193.98 338.34 L1194.22 336.71 L1194.43 335.08 L1194.62 333.46 L1194.78 331.83 L1194.93 330.21 L1195.05 328.58 L1195.15 326.95 L1195.23 325.33 L1195.29 323.70 L1195.32 322.08 L1195.33 320.45 L1195.32 318.82 L1195.29 317.20 L1195.23 315.57 L1195.15 313.95 L1195.05 312.32 L1194.93 310.69 L1194.78 309.07 L1194.62 307.44 L1194.43 305.82 L1194.22 304.19 L1193.98 302.56 L1193.73 300.94 L1193.45 299.31 L1193.15 297.69 L1192.83 296.06 L1192.48 294.43 L1192.12 292.81 L1191.73 291.18 L1191.32 289.56 L1190.88 287.93 L1190.43 286.30 L1189.95 284.68 L1189.45 283.05 L1188.93 281.43 L1188.39 279.80 L1187.83 278.17 L1187.24 276.55 L1186.64 274.92 L1186.01 273.30 L1185.36 271.67 L1184.69 270.04 L1183.99 268.42 L1183.28 266.79 L1182.54 265.17 L1181.78 263.54 L1181.01 261.91 L1180.21 260.29 L1179.38 258.66 L1178.54 257.04 L1177.68 255.41 L1176.80 253.78 L1175.89 252.16 L1174.96 250.53 L1174.02 248.91 L1173.05 247.28 L1172.06 245.65 L1171.06 244.03 L1170.03 242.40 L1168.98 240.78 L1167.91 239.15 L1166.82 237.52 L1165.71 235.90 L1164.58 234.27 L1163.43 232.65 L1162.26 231.02 L1161.07 229.39 L1159.86 227.77 L1158.63 226.14 L1157.39 224.52 L1156.12 222.89 L1154.83 221.26 L1153.53 219.64 L1152.20 218.01 L1150.86 216.39 L1149.49 214.76 L1148.11 213.13 L1146.71 211.51 L1145.29 209.88 L1143.86 208.26 L1142.40 206.63 L1140.93 205.00 L1139.43 203.38 L1137.92 201.75 L1136.39 200.13 L1134.85 198.50 L1133.28 196.87 L1131.70 195.25 L1130.11 193.62 L1128.49 192.00 L1126.86 190.37 L1125.21 188.74 L1123.54 187.12 L1121.85 185.49 L1120.15 183.87 L1118.44 182.24 L1116.70 180.61 L1114.95 178.99 L1113.19 177.36 L1111.40 175.74 L1109.61 174.11 L1107.79 172.48 L1105.96 170.86 L1104.12 169.23 L1102.26 167.61 L1100.38 165.98 L1098.49 164.35 L1096.59 162.73 L1094.67 161.10 L1092.73 159.48 L1090.78 157.85 L1088.82 156.22 L1086.84 154.60 L1084.85 152.97 L1082.84 151.35 L1080.82 149.72 L1078.79 148.09 L1076.74 146.47 L1074.68 144.84 L1072.61 143.22 L1070.52 141.59 L1068.43 139.96 L1066.31 138.34 L1064.19 136.71 L1062.05 135.09 L1059.91 133.46 L1057.75 131.83 L1055.57 130.21 L1053.39 128.58 L1051.20 126.96 L1048.99 125.33 L1046.77 123.70 L1044.54 122.08 L1042.30 120.45 L1040.05 118.83 L1037.79 117.20 L1035.52 115.57 L1033.24 113.95 L1030.95 112.32 L1028.65 110.70 L1026.34 109.07 L1024.02 107.44 L1021.69 105.82 L1019.36 104.19 L1017.01 102.57 L1014.65 100.94 L1012.29 99.31 L1009.92 97.69 L1007.54 96.06 L1005.15 94.44 L1002.75 92.81 L1000.35 91.18 L997.94 89.56 L995.52 87.93 L993.09 86.31 L990.66 84.68 L988.22 83.05 L985.78 81.43 L983.32 79.80 L980.87 78.18 L978.40 76.55 L975.93 74.92 L973.46 73.30 L970.97 71.67 L968.49 70.05 L966.00 68.42 L963.50 66.79 L961.00 65.17 L958.50 63.54 L955.99 61.92 L953.47 60.29 L950.96 58.66 L948.44 57.04 L945.91 55.41 L943.38 53.79 L940.85 52.16 L938.32 50.53 L935.78 48.91 L933.24 47.28 L930.70 45.66 L928.16 44.03 L925.61 42.40 L923.07 40.78 L920.52 39.15 L917.97 37.53 L915.42 35.90 L912.86 34.27 L910.31 32.65 L907.76 31.02 L905.20 29.40 L902.65 27.77 M902.65 613.13 L904.78 611.50 L906.91 609.88 L909.03 608.25 L911.16 606.63 L913.29 605.00 L915.41 603.37 L917.54 601.75 L919.66 600.12 L921.79 598.50 L923.91 596.87 L926.03 595.24 L928.14 593.62 L930.26 591.99 L932.37 590.37 L934.49 588.74 L936.59 587.11 L938.70 585.49 L940.80 583.86 L942.91 582.24 L945.00 580.61 L947.10 578.98 L949.19 577.36 L951.28 575.73 L953.36 574.11 L955.44 572.48 L957.52 570.85 L959.59 569.23 L961.65 567.60 L963.72 565.98 L965.78 564.35 L967.83 562.72 L969.88 561.10 L971.92 559.47 L973.96 557.85 L975.99 556.22 L978.02 554.59 L980.04 552.97 L982.06 551.34 L984.07 549.72 L986.07 548.09 L988.07 546.46 L990.06 544.84 L992.04 543.21 L994.02 541.59 L995.99 539.96 L997.95 538.33 L999.90 536.71 L1001.85 535.08 L1003.79 533.46 L1005.73 531.83 L1007.65 530.20 L1009.57 528.58 L1011.48 526.95 L1013.38 525.33 L1015.27 523.70 L1017.15 522.07 L1019.03 520.45 L1020.90 518.82 L1022.75 517.20 L1024.60 515.57 L1026.44 513.94 L1028.27 512.32 L1030.09 510.69 L1031.90 509.07 L1033.70 507.44 L1035.49 505.81 L1037.27 504.19 L1039.04 502.56 L1040.80 500.94 L1042.55 499.31 L1044.28 497.68 L1046.01 496.06 L1047.73 494.43 L1049.43 492.81 L1051.13 491.18 L1052.81 489.55 L1054.48 487.93 L1056.14 486.30 L1057.79 484.68 L1059.43 483.05 L1061.05 481.42 L1062.66 479.80 L1064.26 478.17 L1065.85 476.55 L1067.43 474.92 L1068.99 473.29 L1070.54 471.67 L1072.08 470.04 L1073.60 468.42 L1075.11 466.79 L1076.61 465.16 L1078.10 463.54 L1079.57 461.91 L1081.03 460.29 L1082.47 458.66 L1083.90 457.03 L1085.32 455.41 L1086.72 453.78 L1088.11 452.16 L1089.49 450.53 L1090.85 448.90 L1092.20 447.28 L1093.53 445.65 L1094.85 444.03 L1096.15 442.40 L1097.44 440.77 L1098.71 439.15 L1099.97 437.52 L1101.21 435.90 L1102.44 434.27 L1103.65 432.64 L1104.85 431.02 L1106.03 429.39 L1107.20 427.77 L1108.35 426.14 L1109.49 424.51 L1110.61 422.89 L1111.71 421.26 L1112.80 419.64 L1113.87 418.01 L1114.93 416.38 L1115.97 414.76 L1116.99 413.13 L1118.00 411.51 L1118.99 409.88 L1119.97 408.25 L1120.92 406.63 L1121.87 405.00 L1122.79 403.38 L1123.70 401.75 L1124.59 400.12 L1125.46 398.50 L1126.32 396.87 L1127.16 395.25 L1127.98 393.62 L1128.79 391.99 L1129.58 390.37 L1130.35 388.74 L1131.10 387.12 L1131.84 385.49 L1132.56 383.86 L1133.26 382.24 L1133.95 380.61 L1134.61 378.99 L1135.26 377.36 L1135.89 375.73 L1136.51 374.11 L1137.10 372.48 L1137.68 370.86 L1138.24 369.23 L1138.78 367.60 L1139.31 365.98 L1139.81 364.35 L1140.30 362.73 L1140.77 361.10 L1141.22 359.47 L1141.65 357.85 L1142.07 356.22 L1142.47 354.60 L1142.84 352.97 L1143.21 351.34 L1143.55 349.72 L1143.87 348.09 L1144.18 346.47 L1144.46 344.84 L1144.73 343.21 L1144.98 341.59 L1145.21 339.96 L1145.43 338.34 L1145.62 336.71 L1145.80 335.08 L1145.96 333.46 L1146.10 331.83 L1146.22 330.21 L1146.32 328.58 L1146.40 326.95 L1146.47 325.33 L1146.51 323.70 L1146.54 322.08 L1146.55 320.45 L1146.54 318.82 L1146.51 317.20 L1146.47 315.57 L1146.40 313.95 L1146.32 312.32 L1146.22 310.69 L1146.10 309.07 L1145.96 307.44 L1145.80 305.82 L1145.62 304.19 L1145.43 302.56 L1145.21 300.94 L1144.98 299.31 L1144.73 297.69 L1144.46 296.06 L1144.18 294.43 L1143.87 292.81 L1143.55 291.18 L1143.21 289.56 L1142.84 287.93 L1142.47 286.30 L1142.07 284.68 L1141.65 283.05 L1141.22 281.43 L1140.77 279.80 L1140.30 278.17 L1139.81 276.55 L1139.31 274.92 L1138.78 273.30 L1138.24 271.67 L1137.68 270.04 L1137.10 268.42 L1136.51 266.79 L1135.89 265.17 L1135.26 263.54 L1134.61 261.91 L1133.95 260.29 L1133.26 258.66 L1132.56 257.04 L1131.84 255.41 L1131.10 253.78 L1130.35 252.16 L1129.58 250.53 L1128.79 248.91 L1127.98 247.28 L1127.16 245.65 L1126.32 244.03 L1125.46 242.40 L1124.59 240.78 L1123.70 239.15 L1122.79 237.52 L1121.87 235.90 L1120.92 234.27 L1119.97 232.65 L1118.99 231.02 L1118.00 229.39 L1116.99 227.77 L1115.97 226.14 L1114.93 224.52 L1113.87 222.89 L1112.80 221.26 L1111.71 219.64 L1110.61 218.01 L1109.49 216.39 L1108.35 214.76 L1107.20 213.13 L1106.03 211.51 L1104.85 209.88 L1103.65 208.26 L1102.44 206.63 L1101.21 205.00 L1099.97 203.38 L1098.71 201.75 L1097.44 200.13 L1096.15 198.50 L1094.85 196.87 L1093.53 195.25 L1092.20 193.62 L1090.85 192.00 L1089.49 190.37 L1088.11 188.74 L1086.72 187.12 L1085.32 185.49 L1083.90 183.87 L1082.47 182.24 L1081.03 180.61 L1079.57 178.99 L1078.10 177.36 L1076.61 175.74 L1075.11 174.11 L1073.60 172.48 L1072.08 170.86 L1070.54 169.23 L1068.99 167.61 L1067.43 165.98 L1065.85 164.35 L1064.26 162.73 L1062.66 161.10 L1061.05 159.48 L1059.43 157.85 L1057.79 156.22 L1056.14 154.60 L1054.48 152.97 L1052.81 151.35 L1051.13 149.72 L1049.43 148.09 L1047.73 146.47 L1046.01 144.84 L1044.28 143.22 L1042.55 141.59 L1040.80 139.96 L1039.04 138.34 L1037.27 136.71 L1035.49 135.09 L1033.70 133.46 L1031.90 131.83 L1030.09 130.21 L1028.27 128.58 L1026.44 126.96 L1024.60 125.33 L1022.75 123.70 L1020.90 122.08 L1019.03 120.45 L1017.15 118.83 L1015.27 117.20 L1013.38 115.57 L1011.48 113.95 L1009.57 112.32 L1007.65 110.70 L1005.73 109.07 L1003.79 107.44 L1001.85 105.82 L999.90 104.19 L997.95 102.57 L995.99 100.94 L994.02 99.31 L992.04 97.69 L990.06 96.06 L988.07 94.44 L986.07 92.81 L984.07 91.18 L982.06 89.56 L980.04 87.93 L978.02 86.31 L975.99 84.68 L973.96 83.05 L971.92 81.43 L969.88 79.80 L967.83 78.18 L965.78 76.55 L963.72 74.92 L961.65 73.30 L959.59 71.67 L957.52 70.05 L955.44 68.42 L953.36 66.79 L951.28 65.17 L949.19 63.54 L947.10 61.92 L945.00 60.29 L942.91 58.66 L940.80 57.04 L938.70 55.41 L936.59 53.79 L934.49 52.16 L932.37 50.53 L930.26 48.91 L928.14 47.28 L926.03 45.66 L923.91 44.03 L921.79 42.40 L919.66 40.78 L917.54 39.15 L915.41 37.53 L913.29 35.90 L911.16 34.27 L909.03 32.65 L906.91 31.02 L904.78 29.40 L902.65 27.77 M902.65 613.13 L904.35 611.50 L906.06 609.88 L907.76 608.25 L909.46 606.63 L911.16 605.00 L912.86 603.37 L914.56 601.75 L916.26 600.12 L917.96 598.50 L919.66 596.87 L921.35 595.24 L923.05 593.62 L924.74 591.99 L926.43 590.37 L928.12 588.74 L929.81 587.11 L931.49 585.49 L933.17 583.86 L934.85 582.24 L936.53 580.61 L938.21 578.98 L939.88 577.36 L941.55 575.73 L943.22 574.11 L944.88 572.48 L946.54 570.85 L948.20 569.23 L949.85 567.60 L951.50 565.98 L953.15 564.35 L954.79 562.72 L956.43 561.10 L958.07 559.47 L959.70 557.85 L961.32 556.22 L962.95 554.59 L964.56 552.97 L966.17 551.34 L967.78 549.72 L969.38 548.09 L970.98 546.46 L972.57 544.84 L974.16 543.21 L975.74 541.59 L977.32 539.96 L978.89 538.33 L980.45 536.71 L982.01 535.08 L983.56 533.46 L985.11 531.83 L986.65 530.20 L988.18 528.58 L989.71 526.95 L991.23 525.33 L992.75 523.70 L994.25 522.07 L995.75 520.45 L997.25 518.82 L998.73 517.20 L1000.21 515.57 L1001.68 513.94 L1003.14 512.32 L1004.60 510.69 L1006.05 509.07 L1007.49 507.44 L1008.92 505.81 L1010.34 504.19 L1011.76 502.56 L1013.17 500.94 L1014.57 499.31 L1015.96 497.68 L1017.34 496.06 L1018.71 494.43 L1020.08 492.81 L1021.43 491.18 L1022.78 489.55 L1024.12 487.93 L1025.44 486.30 L1026.76 484.68 L1028.07 483.05 L1029.37 481.42 L1030.66 479.80 L1031.94 478.17 L1033.21 476.55 L1034.47 474.92 L1035.72 473.29 L1036.96 471.67 L1038.19 470.04 L1039.41 468.42 L1040.62 466.79 L1041.82 465.16 L1043.01 463.54 L1044.19 461.91 L1045.35 460.29 L1046.51 458.66 L1047.65 457.03 L1048.79 455.41 L1049.91 453.78 L1051.02 452.16 L1052.12 450.53 L1053.21 448.90 L1054.29 447.28 L1055.35 445.65 L1056.41 444.03 L1057.45 442.40 L1058.48 440.77 L1059.50 439.15 L1060.51 437.52 L1061.50 435.90 L1062.48 434.27 L1063.45 432.64 L1064.41 431.02 L1065.36 429.39 L1066.29 427.77 L1067.21 426.14 L1068.12 424.51 L1069.02 422.89 L1069.90 421.26 L1070.77 419.64 L1071.63 418.01 L1072.47 416.38 L1073.31 414.76 L1074.12 413.13 L1074.93 411.51 L1075.72 409.88 L1076.50 408.25 L1077.27 406.63 L1078.02 405.00 L1078.76 403.38 L1079.49 401.75 L1080.20 400.12 L1080.90 398.50 L1081.59 396.87 L1082.26 395.25 L1082.92 393.62 L1083.56 391.99 L1084.19 390.37 L1084.81 388.74 L1085.41 387.12 L1086.00 385.49 L1086.58 383.86 L1087.14 382.24 L1087.69 380.61 L1088.22 378.99 L1088.74 377.36 L1089.24 375.73 L1089.73 374.11 L1090.21 372.48 L1090.67 370.86 L1091.12 369.23 L1091.55 367.60 L1091.97 365.98 L1092.38 364.35 L1092.77 362.73 L1093.14 361.10 L1093.51 359.47 L1093.85 357.85 L1094.19 356.22 L1094.50 354.60 L1094.81 352.97 L1095.09 351.34 L1095.37 349.72 L1095.63 348.09 L1095.87 346.47 L1096.10 344.84 L1096.32 343.21 L1096.52 341.59 L1096.70 339.96 L1096.87 338.34 L1097.03 336.71 L1097.17 335.08 L1097.29 333.46 L1097.41 331.83 L1097.50 330.21 L1097.58 328.58 L1097.65 326.95 L1097.70 325.33 L1097.74 323.70 L1097.76 322.08 L1097.77 320.45 L1097.76 318.82 L1097.74 317.20 L1097.70 315.57 L1097.65 313.95 L1097.58 312.32 L1097.50 310.69 L1097.41 309.07 L1097.29 307.44 L1097.17 305.82 L1097.03 304.19 L1096.87 302.56 L1096.70 300.94 L1096.52 299.31 L1096.32 297.69 L1096.10 296.06 L1095.87 294.43 L1095.63 292.81 L1095.37 291.18 L1095.09 289.56 L1094.81 287.93 L1094.50 286.30 L1094.19 284.68 L1093.85 283.05 L1093.51 281.43 L1093.14 279.80 L1092.77 278.17 L1092.38 276.55 L1091.97 274.92 L1091.55 273.30 L1091.12 271.67 L1090.67 270.04 L1090.21 268.42 L1089.73 266.79 L1089.24 265.17 L1088.74 263.54 L1088.22 261.91 L1087.69 260.29 L1087.14 258.66 L1086.58 257.04 L1086.00 255.41 L1085.41 253.78 L1084.81 252.16 L1084.19 250.53 L1083.56 248.91 L1082.92 247.28 L1082.26 245.65 L1081.59 244.03 L1080.90 242.40 L1080.20 240.78 L1079.49 239.15 L1078.76 237.52 L1078.02 235.90 L1077.27 234.27 L1076.50 232.65 L1075.72 231.02 L1074.93 229.39 L1074.12 227.77 L1073.31 226.14 L1072.47 224.52 L1071.63 222.89 L1070.77 221.26 L1069.90 219.64 L1069.02 218.01 L1068.12 216.39 L1067.21 214.76 L1066.29 213.13 L1065.36 211.51 L1064.41 209.88 L1063.45 208.26 L1062.48 206.63 L1061.50 205.00 L1060.51 203.38 L1059.50 201.75 L1058.48 200.13 L1057.45 198.50 L1056.41 196.87 L1055.35 195.25 L1054.29 193.62 L1053.21 192.00 L1052.12 190.37 L1051.02 188.74 L1049.91 187.12 L1048.79 185.49 L1047.65 183.87 L1046.51 182.24 L1045.35 180.61 L1044.19 178.99 L1043.01 177.36 L1041.82 175.74 L1040.62 174.11 L1039.41 172.48 L1038.19 170.86 L1036.96 169.23 L1035.72 167.61 L1034.47 165.98 L1033.21 164.35 L1031.94 162.73 L1030.66 161.10 L1029.37 159.48 L1028.07 157.85 L1026.76 156.22 L1025.44 154.60 L1024.12 152.97 L1022.78 151.35 L1021.43 149.72 L1020.08 148.09 L1018.71 146.47 L1017.34 144.84 L1015.96 143.22 L1014.57 141.59 L1013.17 139.96 L1011.76 138.34 L1010.34 136.71 L1008.92 135.09 L1007.49 133.46 L1006.05 131.83 L1004.60 130.21 L1003.14 128.58 L1001.68 126.96 L1000.21 125.33 L998.73 123.70 L997.25 122.08 L995.75 120.45 L994.25 118.83 L992.75 117.20 L991.23 115.57 L989.71 113.95 L988.18 112.32 L986.65 110.70 L985.11 109.07 L983.56 107.44 L982.01 105.82 L980.45 104.19 L978.89 102.57 L977.32 100.94 L975.74 99.31 L974.16 97.69 L972.57 96.06 L970.98 94.44 L969.38 92.81 L967.78 91.18 L966.17 89.56 L964.56 87.93 L962.95 86.31 L961.32 84.68 L959.70 83.05 L958.07 81.43 L956.43 79.80 L954.79 78.18 L953.15 76.55 L951.50 74.92 L949.85 73.30 L948.20 71.67 L946.54 70.05 L944.88 68.42 L943.22 66.79 L941.55 65.17 L939.88 63.54 L938.21 61.92 L936.53 60.29 L934.85 58.66 L933.17 57.04 L931.49 55.41 L929.81 53.79 L928.12 52.16 L926.43 50.53 L924.74 48.91 L923.05 47.28 L921.35 45.66 L919.66 44.03 L917.96 42.40 L916.26 40.78 L914.56 39.15 L912.86 37.53 L911.16 35.90 L909.46 34.27 L907.76 32.65 L906.06 31.02 L904.35 29.40 L902.65 27.77 M902.65 613.13 L903.93 611.50 L905.20 609.88 L906.48 608.25 L907.76 606.63 L909.03 605.00 L910.31 603.37 L911.58 601.75 L912.86 600.12 L914.13 598.50 L915.40 596.87 L916.68 595.24 L917.95 593.62 L919.22 591.99 L920.48 590.37 L921.75 588.74 L923.02 587.11 L924.28 585.49 L925.54 583.86 L926.80 582.24 L928.06 580.61 L929.32 578.98 L930.57 577.36 L931.83 575.73 L933.08 574.11 L934.32 572.48 L935.57 570.85 L936.81 569.23 L938.05 567.60 L939.29 565.98 L940.53 564.35 L941.76 562.72 L942.99 561.10 L944.21 559.47 L945.44 557.85 L946.66 556.22 L947.87 554.59 L949.08 552.97 L950.29 551.34 L951.50 549.72 L952.70 548.09 L953.90 546.46 L955.09 544.84 L956.28 543.21 L957.47 541.59 L958.65 539.96 L959.83 538.33 L961.00 536.71 L962.17 535.08 L963.34 533.46 L964.50 531.83 L965.65 530.20 L966.80 528.58 L967.95 526.95 L969.09 525.33 L970.22 523.70 L971.35 522.07 L972.48 520.45 L973.60 518.82 L974.71 517.20 L975.82 515.57 L976.92 513.94 L978.02 512.32 L979.11 510.69 L980.20 509.07 L981.28 507.44 L982.35 505.81 L983.42 504.19 L984.48 502.56 L985.54 500.94 L986.59 499.31 L987.63 497.68 L988.67 496.06 L989.70 494.43 L990.72 492.81 L991.74 491.18 L992.75 489.55 L993.75 487.93 L994.74 486.30 L995.73 484.68 L996.72 483.05 L997.69 481.42 L998.66 479.80 L999.62 478.17 L1000.57 476.55 L1001.52 474.92 L1002.45 473.29 L1003.38 471.67 L1004.31 470.04 L1005.22 468.42 L1006.13 466.79 L1007.03 465.16 L1007.92 463.54 L1008.80 461.91 L1009.68 460.29 L1010.54 458.66 L1011.40 457.03 L1012.25 455.41 L1013.09 453.78 L1013.93 452.16 L1014.75 450.53 L1015.57 448.90 L1016.38 447.28 L1017.18 445.65 L1017.97 444.03 L1018.75 442.40 L1019.52 440.77 L1020.29 439.15 L1021.04 437.52 L1021.79 435.90 L1022.52 434.27 L1023.25 432.64 L1023.97 431.02 L1024.68 429.39 L1025.38 427.77 L1026.07 426.14 L1026.75 424.51 L1027.43 422.89 L1028.09 421.26 L1028.74 419.64 L1029.38 418.01 L1030.02 416.38 L1030.64 414.76 L1031.26 413.13 L1031.86 411.51 L1032.46 409.88 L1033.04 408.25 L1033.61 406.63 L1034.18 405.00 L1034.73 403.38 L1035.28 401.75 L1035.81 400.12 L1036.34 398.50 L1036.85 396.87 L1037.36 395.25 L1037.85 393.62 L1038.33 391.99 L1038.81 390.37 L1039.27 388.74 L1039.72 387.12 L1040.16 385.49 L1040.60 383.86 L1041.02 382.24 L1041.43 380.61 L1041.83 378.99 L1042.22 377.36 L1042.60 375.73 L1042.96 374.11 L1043.32 372.48 L1043.67 370.86 L1044.00 369.23 L1044.33 367.60 L1044.64 365.98 L1044.95 364.35 L1045.24 362.73 L1045.52 361.10 L1045.79 359.47 L1046.05 357.85 L1046.30 356.22 L1046.54 354.60 L1046.77 352.97 L1046.98 351.34 L1047.19 349.72 L1047.38 348.09 L1047.57 346.47 L1047.74 344.84 L1047.90 343.21 L1048.05 341.59 L1048.19 339.96 L1048.32 338.34 L1048.43 336.71 L1048.54 335.08 L1048.63 333.46 L1048.72 331.83 L1048.79 330.21 L1048.85 328.58 L1048.90 326.95 L1048.94 325.33 L1048.97 323.70 L1048.98 322.08 L1048.99 320.45 L1048.98 318.82 L1048.97 317.20 L1048.94 315.57 L1048.90 313.95 L1048.85 312.32 L1048.79 310.69 L1048.72 309.07 L1048.63 307.44 L1048.54 305.82 L1048.43 304.19 L1048.32 302.56 L1048.19 300.94 L1048.05 299.31 L1047.90 297.69 L1047.74 296.06 L1047.57 294.43 L1047.38 292.81 L1047.19 291.18 L1046.98 289.56 L1046.77 287.93 L1046.54 286.30 L1046.30 284.68 L1046.05 283.05 L1045.79 281.43 L1045.52 279.80 L1045.24 278.17 L1044.95 276.55 L1044.64 274.92 L1044.33 273.30 L1044.00 271.67 L1043.67 270.04 L1043.32 268.42 L1042.96 266.79 L1042.60 265.17 L1042.22 263.54 L1041.83 261.91 L1041.43 260.29 L1041.02 258.66 L1040.60 257.04 L1040.16 255.41 L1039.72 253.78 L1039.27 252.16 L1038.81 250.53 L1038.33 248.91 L1037.85 247.28 L1037.36 245.65 L1036.85 244.03 L1036.34 242.40 L1035.81 240.78 L1035.28 239.15 L1034.73 237.52 L1034.18 235.90 L1033.61 234.27 L1033.04 232.65 L1032.46 231.02 L1031.86 229.39 L1031.26 227.77 L1030.64 226.14 L1030.02 224.52 L1029.38 222.89 L1028.74 221.26 L1028.09 219.64 L1027.43 218.01 L1026.75 216.39 L1026.07 214.76 L1025.38 213.13 L1024.68 211.51 L1023.97 209.88 L1023.25 208.26 L1022.52 206.63 L1021.79 205.00 L1021.04 203.38 L1020.29 201.75 L1019.52 200.13 L1018.75 198.50 L1017.97 196.87 L1017.18 195.25 L1016.38 193.62 L1015.57 192.00 L1014.75 190.37 L1013.93 188.74 L1013.09 187.12 L1012.25 185.49 L1011.40 183.87 L1010.54 182.24 L1009.68 180.61 L1008.80 178.99 L1007.92 177.36 L1007.03 175.74 L1006.13 174.11 L1005.22 172.48 L1004.31 170.86 L1003.38 169.23 L1002.45 167.61 L1001.52 165.98 L1000.57 164.35 L999.62 162.73 L998.66 161.10 L997.69 159.48 L996.72 157.85 L995.73 156.22 L994.74 154.60 L993.75 152.97 L992.75 151.35 L991.74 149.72 L990.72 148.09 L989.70 146.47 L988.67 144.84 L987.63 143.22 L986.59 141.59 L985.54 139.96 L984.48 138.34 L983.42 136.71 L982.35 135.09 L981.28 133.46 L980.20 131.83 L979.11 130.21 L978.02 128.58 L976.92 126.96 L975.82 125.33 L974.71 123.70 L973.60 122.08 L972.48 120.45 L971.35 118.83 L970.22 117.20 L969.09 115.57 L967.95 113.95 L966.80 112.32 L965.65 110.70 L964.50 109.07 L963.34 107.44 L962.17 105.82 L961.00 104.19 L959.83 102.57 L958.65 100.94 L957.47 99.31 L956.28 97.69 L955.09 96.06 L953.90 94.44 L952.70 92.81 L951.50 91.18 L950.29 89.56 L949.08 87.93 L947.87 86.31 L946.66 84.68 L945.44 83.05 L944.21 81.43 L942.99 79.80 L941.76 78.18 L940.53 76.55 L939.29 74.92 L938.05 73.30 L936.81 71.67 L935.57 70.05 L934.32 68.42 L933.08 66.79 L931.83 65.17 L930.57 63.54 L929.32 61.92 L928.06 60.29 L926.80 58.66 L925.54 57.04 L924.28 55.41 L923.02 53.79 L921.75 52.16 L920.48 50.53 L919.22 48.91 L917.95 47.28 L916.68 45.66 L915.40 44.03 L914.13 42.40 L912.86 40.78 L911.58 39.15 L910.31 37.53 L909.03 35.90 L907.76 34.27 L906.48 32.65 L905.20 31.02 L903.93 29.40 L902.65 27.77 M902.65 613.13 L903.50 611.50 L904.35 609.88 L905.20 608.25 L906.05 606.63 L906.91 605.00 L907.76 603.37 L908.61 601.75 L909.46 600.12 L910.30 598.50 L911.15 596.87 L912.00 595.24 L912.85 593.62 L913.69 591.99 L914.54 590.37 L915.38 588.74 L916.23 587.11 L917.07 585.49 L917.91 583.86 L918.75 582.24 L919.59 580.61 L920.43 578.98 L921.27 577.36 L922.10 575.73 L922.93 574.11 L923.77 572.48 L924.60 570.85 L925.42 569.23 L926.25 567.60 L927.08 565.98 L927.90 564.35 L928.72 562.72 L929.54 561.10 L930.36 559.47 L931.17 557.85 L931.99 556.22 L932.80 554.59 L933.61 552.97 L934.41 551.34 L935.22 549.72 L936.02 548.09 L936.82 546.46 L937.61 544.84 L938.41 543.21 L939.20 541.59 L939.98 539.96 L940.77 538.33 L941.55 536.71 L942.33 535.08 L943.11 533.46 L943.88 531.83 L944.65 530.20 L945.42 528.58 L946.18 526.95 L946.94 525.33 L947.70 523.70 L948.45 522.07 L949.20 520.45 L949.95 518.82 L950.69 517.20 L951.43 515.57 L952.17 513.94 L952.90 512.32 L953.62 510.69 L954.35 509.07 L955.07 507.44 L955.78 505.81 L956.50 504.19 L957.20 502.56 L957.91 500.94 L958.61 499.31 L959.30 497.68 L959.99 496.06 L960.68 494.43 L961.36 492.81 L962.04 491.18 L962.71 489.55 L963.38 487.93 L964.05 486.30 L964.71 484.68 L965.36 483.05 L966.01 481.42 L966.66 479.80 L967.30 478.17 L967.93 476.55 L968.56 474.92 L969.19 473.29 L969.81 471.67 L970.42 470.04 L971.03 468.42 L971.64 466.79 L972.23 465.16 L972.83 463.54 L973.42 461.91 L974.00 460.29 L974.58 458.66 L975.15 457.03 L975.72 455.41 L976.28 453.78 L976.84 452.16 L977.39 450.53 L977.93 448.90 L978.47 447.28 L979.00 445.65 L979.53 444.03 L980.05 442.40 L980.56 440.77 L981.07 439.15 L981.58 437.52 L982.08 435.90 L982.57 434.27 L983.05 432.64 L983.53 431.02 L984.00 429.39 L984.47 427.77 L984.93 426.14 L985.39 424.51 L985.83 422.89 L986.28 421.26 L986.71 419.64 L987.14 418.01 L987.56 416.38 L987.98 414.76 L988.39 413.13 L988.79 411.51 L989.19 409.88 L989.58 408.25 L989.96 406.63 L990.34 405.00 L990.71 403.38 L991.07 401.75 L991.43 400.12 L991.78 398.50 L992.12 396.87 L992.45 395.25 L992.78 393.62 L993.11 391.99 L993.42 390.37 L993.73 388.74 L994.03 387.12 L994.33 385.49 L994.61 383.86 L994.89 382.24 L995.17 380.61 L995.44 378.99 L995.69 377.36 L995.95 375.73 L996.19 374.11 L996.43 372.48 L996.66 370.86 L996.89 369.23 L997.10 367.60 L997.31 365.98 L997.51 364.35 L997.71 362.73 L997.90 361.10 L998.08 359.47 L998.25 357.85 L998.42 356.22 L998.58 354.60 L998.73 352.97 L998.87 351.34 L999.01 349.72 L999.14 348.09 L999.26 346.47 L999.38 344.84 L999.48 343.21 L999.58 341.59 L999.68 339.96 L999.76 338.34 L999.84 336.71 L999.91 335.08 L999.97 333.46 L1000.03 331.83 L1000.08 330.21 L1000.12 328.58 L1000.15 326.95 L1000.18 325.33 L1000.20 323.70 L1000.21 322.08 L1000.21 320.45 L1000.21 318.82 L1000.20 317.20 L1000.18 315.57 L1000.15 313.95 L1000.12 312.32 L1000.08 310.69 L1000.03 309.07 L999.97 307.44 L999.91 305.82 L999.84 304.19 L999.76 302.56 L999.68 300.94 L999.58 299.31 L999.48 297.69 L999.38 296.06 L999.26 294.43 L999.14 292.81 L999.01 291.18 L998.87 289.56 L998.73 287.93 L998.58 286.30 L998.42 284.68 L998.25 283.05 L998.08 281.43 L997.90 279.80 L997.71 278.17 L997.51 276.55 L997.31 274.92 L997.10 273.30 L996.89 271.67 L996.66 270.04 L996.43 268.42 L996.19 266.79 L995.95 265.17 L995.69 263.54 L995.44 261.91 L995.17 260.29 L994.89 258.66 L994.61 257.04 L994.33 255.41 L994.03 253.78 L993.73 252.16 L993.42 250.53 L993.11 248.91 L992.78 247.28 L992.45 245.65 L992.12 244.03 L991.78 242.40 L991.43 240.78 L991.07 239.15 L990.71 237.52 L990.34 235.90 L989.96 234.27 L989.58 232.65 L989.19 231.02 L988.79 229.39 L988.39 227.77 L987.98 226.14 L987.56 224.52 L987.14 222.89 L986.71 221.26 L986.28 219.64 L985.83 218.01 L985.39 216.39 L984.93 214.76 L984.47 213.13 L984.00 211.51 L983.53 209.88 L983.05 208.26 L982.57 206.63 L982.08 205.00 L981.58 203.38 L981.07 201.75 L980.56 200.13 L980.05 198.50 L979.53 196.87 L979.00 195.25 L978.47 193.62 L977.93 192.00 L977.39 190.37 L976.84 188.74 L976.28 187.12 L975.72 185.49 L975.15 183.87 L974.58 182.24 L974.00 180.61 L973.42 178.99 L972.83 177.36 L972.23 175.74 L971.64 174.11 L971.03 172.48 L970.42 170.86 L969.81 169.23 L969.19 167.61 L968.56 165.98 L967.93 164.35 L967.30 162.73 L966.66 161.10 L966.01 159.48 L965.36 157.85 L964.71 156.22 L964.05 154.60 L963.38 152.97 L962.71 151.35 L962.04 149.72 L961.36 148.09 L960.68 146.47 L959.99 144.84 L959.30 143.22 L958.61 141.59 L957.91 139.96 L957.20 138.34 L956.50 136.71 L955.78 135.09 L955.07 133.46 L954.35 131.83 L953.62 130.21 L952.90 128.58 L952.17 126.96 L951.43 125.33 L950.69 123.70 L949.95 122.08 L949.20 120.45 L948.45 118.83 L947.70 117.20 L946.94 115.57 L946.18 113.95 L945.42 112.32 L944.65 110.70 L943.88 109.07 L943.11 107.44 L942.33 105.82 L941.55 104.19 L940.77 102.57 L939.98 100.94 L939.20 99.31 L938.41 97.69 L937.61 96.06 L936.82 94.44 L936.02 92.81 L935.22 91.18 L934.41 89.56 L933.61 87.93 L932.80 86.31 L931.99 84.68 L931.17 83.05 L930.36 81.43 L929.54 79.80 L928.72 78.18 L927.90 76.55 L927.08 74.92 L926.25 73.30 L925.42 71.67 L924.60 70.05 L923.77 68.42 L922.93 66.79 L922.10 65.17 L921.27 63.54 L920.43 61.92 L919.59 60.29 L918.75 58.66 L917.91 57.04 L917.07 55.41 L916.23 53.79 L915.38 52.16 L914.54 50.53 L913.69 48.91 L912.85 47.28 L912.00 45.66 L911.15 44.03 L910.30 42.40 L909.46 40.78 L908.61 39.15 L907.76 37.53 L906.91 35.90 L906.05 34.27 L905.20 32.65 L904.35 31.02 L903.50 29.40 L902.65 27.77 M902.65 613.13 L903.08 611.50 L903.50 609.88 L903.93 608.25 L904.35 606.63 L904.78 605.00 L905.20 603.37 L905.63 601.75 L906.05 600.12 L906.48 598.50 L906.90 596.87 L907.33 595.24 L907.75 593.62 L908.17 591.99 L908.59 590.37 L909.02 588.74 L909.44 587.11 L909.86 585.49 L910.28 583.86 L910.70 582.24 L911.12 580.61 L911.54 578.98 L911.96 577.36 L912.38 575.73 L912.79 574.11 L913.21 572.48 L913.62 570.85 L914.04 569.23 L914.45 567.60 L914.86 565.98 L915.28 564.35 L915.69 562.72 L916.10 561.10 L916.50 559.47 L916.91 557.85 L917.32 556.22 L917.72 554.59 L918.13 552.97 L918.53 551.34 L918.93 549.72 L919.33 548.09 L919.73 546.46 L920.13 544.84 L920.53 543.21 L920.92 541.59 L921.32 539.96 L921.71 538.33 L922.10 536.71 L922.49 535.08 L922.88 533.46 L923.27 531.83 L923.65 530.20 L924.03 528.58 L924.42 526.95 L924.80 525.33 L925.17 523.70 L925.55 522.07 L925.93 520.45 L926.30 518.82 L926.67 517.20 L927.04 515.57 L927.41 513.94 L927.77 512.32 L928.14 510.69 L928.50 509.07 L928.86 507.44 L929.22 505.81 L929.57 504.19 L929.93 502.56 L930.28 500.94 L930.63 499.31 L930.98 497.68 L931.32 496.06 L931.67 494.43 L932.01 492.81 L932.35 491.18 L932.68 489.55 L933.02 487.93 L933.35 486.30 L933.68 484.68 L934.01 483.05 L934.33 481.42 L934.65 479.80 L934.97 478.17 L935.29 476.55 L935.61 474.92 L935.92 473.29 L936.23 471.67 L936.54 470.04 L936.84 468.42 L937.14 466.79 L937.44 465.16 L937.74 463.54 L938.03 461.91 L938.33 460.29 L938.61 458.66 L938.90 457.03 L939.18 455.41 L939.46 453.78 L939.74 452.16 L940.02 450.53 L940.29 448.90 L940.56 447.28 L940.83 445.65 L941.09 444.03 L941.35 442.40 L941.61 440.77 L941.86 439.15 L942.11 437.52 L942.36 435.90 L942.61 434.27 L942.85 432.64 L943.09 431.02 L943.33 429.39 L943.56 427.77 L943.79 426.14 L944.02 424.51 L944.24 422.89 L944.46 421.26 L944.68 419.64 L944.89 418.01 L945.11 416.38 L945.31 414.76 L945.52 413.13 L945.72 411.51 L945.92 409.88 L946.11 408.25 L946.30 406.63 L946.49 405.00 L946.68 403.38 L946.86 401.75 L947.04 400.12 L947.21 398.50 L947.38 396.87 L947.55 395.25 L947.72 393.62 L947.88 391.99 L948.04 390.37 L948.19 388.74 L948.34 387.12 L948.49 385.49 L948.63 383.86 L948.77 382.24 L948.91 380.61 L949.04 378.99 L949.17 377.36 L949.30 375.73 L949.42 374.11 L949.54 372.48 L949.66 370.86 L949.77 369.23 L949.88 367.60 L949.98 365.98 L950.08 364.35 L950.18 362.73 L950.27 361.10 L950.36 359.47 L950.45 357.85 L950.53 356.22 L950.61 354.60 L950.69 352.97 L950.76 351.34 L950.83 349.72 L950.89 348.09 L950.96 346.47 L951.01 344.84 L951.07 343.21 L951.12 341.59 L951.16 339.96 L951.21 338.34 L951.24 336.71 L951.28 335.08 L951.31 333.46 L951.34 331.83 L951.36 330.21 L951.38 328.58 L951.40 326.95 L951.41 325.33 L951.42 323.70 L951.43 322.08 L951.43 320.45 L951.43 318.82 L951.42 317.20 L951.41 315.57 L951.40 313.95 L951.38 312.32 L951.36 310.69 L951.34 309.07 L951.31 307.44 L951.28 305.82 L951.24 304.19 L951.21 302.56 L951.16 300.94 L951.12 299.31 L951.07 297.69 L951.01 296.06 L950.96 294.43 L950.89 292.81 L950.83 291.18 L950.76 289.56 L950.69 287.93 L950.61 286.30 L950.53 284.68 L950.45 283.05 L950.36 281.43 L950.27 279.80 L950.18 278.17 L950.08 276.55 L949.98 274.92 L949.88 273.30 L949.77 271.67 L949.66 270.04 L949.54 268.42 L949.42 266.79 L949.30 265.17 L949.17 263.54 L949.04 261.91 L948.91 260.29 L948.77 258.66 L948.63 257.04 L948.49 255.41 L948.34 253.78 L948.19 252.16 L948.04 250.53 L947.88 248.91 L947.72 247.28 L947.55 245.65 L947.38 244.03 L947.21 242.40 L947.04 240.78 L946.86 239.15 L946.68 237.52 L946.49 235.90 L946.30 234.27 L946.11 232.65 L945.92 231.02 L945.72 229.39 L945.52 227.77 L945.31 226.14 L945.11 224.52 L944.89 222.89 L944.68 221.26 L944.46 219.64 L944.24 218.01 L944.02 216.39 L943.79 214.76 L943.56 213.13 L943.33 211.51 L943.09 209.88 L942.85 208.26 L942.61 206.63 L942.36 205.00 L942.11 203.38 L941.86 201.75 L941.61 200.13 L941.35 198.50 L941.09 196.87 L940.83 195.25 L940.56 193.62 L940.29 192.00 L940.02 190.37 L939.74 188.74 L939.46 187.12 L939.18 185.49 L938.90 183.87 L938.61 182.24 L938.33 180.61 L938.03 178.99 L937.74 177.36 L937.44 175.74 L937.14 174.11 L936.84 172.48 L936.54 170.86 L936.23 169.23 L935.92 167.61 L935.61 165.98 L935.29 164.35 L934.97 162.73 L934.65 161.10 L934.33 159.48 L934.01 157.85 L933.68 156.22 L933.35 154.60 L933.02 152.97 L932.68 151.35 L932.35 149.72 L932.01 148.09 L931.67 146.47 L931.32 144.84 L930.98 143.22 L930.63 141.59 L930.28 139.96 L929.93 138.34 L929.57 136.71 L929.22 135.09 L928.86 133.46 L928.50 131.83 L928.14 130.21 L927.77 128.58 L927.41 126.96 L927.04 125.33 L926.67 123.70 L926.30 122.08 L925.93 120.45 L925.55 118.83 L925.17 117.20 L924.80 115.57 L924.42 113.95 L924.03 112.32 L923.65 110.70 L923.27 109.07 L922.88 107.44 L922.49 105.82 L922.10 104.19 L921.71 102.57 L921.32 100.94 L920.92 99.31 L920.53 97.69 L920.13 96.06 L919.73 94.44 L919.33 92.81 L918.93 91.18 L918.53 89.56 L918.13 87.93 L917.72 86.31 L917.32 84.68 L916.91 83.05 L916.50 81.43 L916.10 79.80 L915.69 78.18 L915.28 76.55 L914.86 74.92 L914.45 73.30 L914.04 71.67 L913.62 70.05 L913.21 68.42 L912.79 66.79 L912.38 65.17 L911.96 63.54 L911.54 61.92 L911.12 60.29 L910.70 58.66 L910.28 57.04 L909.86 55.41 L909.44 53.79 L909.02 52.16 L908.59 50.53 L908.17 48.91 L907.75 47.28 L907.33 45.66 L906.90 44.03 L906.48 42.40 L906.05 40.78 L905.63 39.15 L905.20 37.53 L904.78 35.90 L904.35 34.27 L903.93 32.65 L903.50 31.02 L903.08 29.40 L902.65 27.77 M902.65 613.13 L902.65 611.50 L902.65 609.88 L902.65 608.25 L902.65 606.63 L902.65 605.00 L902.65 603.37 L902.65 601.75 L902.65 600.12 L902.65 598.50 L902.65 596.87 L902.65 595.24 L902.65 593.62 L902.65 591.99 L902.65 590.37 L902.65 588.74 L902.65 587.11 L902.65 585.49 L902.65 583.86 L902.65 582.24 L902.65 580.61 L902.65 578.98 L902.65 577.36 L902.65 575.73 L902.65 574.11 L902.65 572.48 L902.65 570.85 L902.65 569.23 L902.65 567.60 L902.65 565.98 L902.65 564.35 L902.65 562.72 L902.65 561.10 L902.65 559.47 L902.65 557.85 L902.65 556.22 L902.65 554.59 L902.65 552.97 L902.65 551.34 L902.65 549.72 L902.65 548.09 L902.65 546.46 L902.65 544.84 L902.65 543.21 L902.65 541.59 L902.65 539.96 L902.65 538.33 L902.65 536.71 L902.65 535.08 L902.65 533.46 L902.65 531.83 L902.65 530.20 L902.65 528.58 L902.65 526.95 L902.65 525.33 L902.65 523.70 L902.65 522.07 L902.65 520.45 L902.65 518.82 L902.65 517.20 L902.65 515.57 L902.65 513.94 L902.65 512.32 L902.65 510.69 L902.65 509.07 L902.65 507.44 L902.65 505.81 L902.65 504.19 L902.65 502.56 L902.65 500.94 L902.65 499.31 L902.65 497.68 L902.65 496.06 L902.65 494.43 L902.65 492.81 L902.65 491.18 L902.65 489.55 L902.65 487.93 L902.65 486.30 L902.65 484.68 L902.65 483.05 L902.65 481.42 L902.65 479.80 L902.65 478.17 L902.65 476.55 L902.65 474.92 L902.65 473.29 L902.65 471.67 L902.65 470.04 L902.65 468.42 L902.65 466.79 L902.65 465.16 L902.65 463.54 L902.65 461.91 L902.65 460.29 L902.65 458.66 L902.65 457.03 L902.65 455.41 L902.65 453.78 L902.65 452.16 L902.65 450.53 L902.65 448.90 L902.65 447.28 L902.65 445.65 L902.65 444.03 L902.65 442.40 L902.65 440.77 L902.65 439.15 L902.65 437.52 L902.65 435.90 L902.65 434.27 L902.65 432.64 L902.65 431.02 L902.65 429.39 L902.65 427.77 L902.65 426.14 L902.65 424.51 L902.65 422.89 L902.65 421.26 L902.65 419.64 L902.65 418.01 L902.65 416.38 L902.65 414.76 L902.65 413.13 L902.65 411.51 L902.65 409.88 L902.65 408.25 L902.65 406.63 L902.65 405.00 L902.65 403.38 L902.65 401.75 L902.65 400.12 L902.65 398.50 L902.65 396.87 L902.65 395.25 L902.65 393.62 L902.65 391.99 L902.65 390.37 L902.65 388.74 L902.65 387.12 L902.65 385.49 L902.65 383.86 L902.65 382.24 L902.65 380.61 L902.65 378.99 L902.65 377.36 L902.65 375.73 L902.65 374.11 L902.65 372.48 L902.65 370.86 L902.65 369.23 L902.65 367.60 L902.65 365.98 L902.65 364.35 L902.65 362.73 L902.65 361.10 L902.65 359.47 L902.65 357.85 L902.65 356.22 L902.65 354.60 L902.65 352.97 L902.65 351.34 L902.65 349.72 L902.65 348.09 L902.65 346.47 L902.65 344.84 L902.65 343.21 L902.65 341.59 L902.65 339.96 L902.65 338.34 L902.65 336.71 L902.65 335.08 L902.65 333.46 L902.65 331.83 L902.65 330.21 L902.65 328.58 L902.65 326.95 L902.65 325.33 L902.65 323.70 L902.65 322.08 L902.65 320.45 L902.65 318.82 L902.65 317.20 L902.65 315.57 L902.65 313.95 L902.65 312.32 L902.65 310.69 L902.65 309.07 L902.65 307.44 L902.65 305.82 L902.65 304.19 L902.65 302.56 L902.65 300.94 L902.65 299.31 L902.65 297.69 L902.65 296.06 L902.65 294.43 L902.65 292.81 L902.65 291.18 L902.65 289.56 L902.65 287.93 L902.65 286.30 L902.65 284.68 L902.65 283.05 L902.65 281.43 L902.65 279.80 L902.65 278.17 L902.65 276.55 L902.65 274.92 L902.65 273.30 L902.65 271.67 L902.65 270.04 L902.65 268.42 L902.65 266.79 L902.65 265.17 L902.65 263.54 L902.65 261.91 L902.65 260.29 L902.65 258.66 L902.65 257.04 L902.65 255.41 L902.65 253.78 L902.65 252.16 L902.65 250.53 L902.65 248.91 L902.65 247.28 L902.65 245.65 L902.65 244.03 L902.65 242.40 L902.65 240.78 L902.65 239.15 L902.65 237.52 L902.65 235.90 L902.65 234.27 L902.65 232.65 L902.65 231.02 L902.65 229.39 L902.65 227.77 L902.65 226.14 L902.65 224.52 L902.65 222.89 L902.65 221.26 L902.65 219.64 L902.65 218.01 L902.65 216.39 L902.65 214.76 L902.65 213.13 L902.65 211.51 L902.65 209.88 L902.65 208.26 L902.65 206.63 L902.65 205.00 L902.65 203.38 L902.65 201.75 L902.65 200.13 L902.65 198.50 L902.65 196.87 L902.65 195.25 L902.65 193.62 L902.65 192.00 L902.65 190.37 L902.65 188.74 L902.65 187.12 L902.65 185.49 L902.65 183.87 L902.65 182.24 L902.65 180.61 L902.65 178.99 L902.65 177.36 L902.65 175.74 L902.65 174.11 L902.65 172.48 L902.65 170.86 L902.65 169.23 L902.65 167.61 L902.65 165.98 L902.65 164.35 L902.65 162.73 L902.65 161.10 L902.65 159.48 L902.65 157.85 L902.65 156.22 L902.65 154.60 L902.65 152.97 L902.65 151.35 L902.65 149.72 L902.65 148.09 L902.65 146.47 L902.65 144.84 L902.65 143.22 L902.65 141.59 L902.65 139.96 L902.65 138.34 L902.65 136.71 L902.65 135.09 L902.65 133.46 L902.65 131.83 L902.65 130.21 L902.65 128.58 L902.65 126.96 L902.65 125.33 L902.65 123.70 L902.65 122.08 L902.65 120.45 L902.65 118.83 L902.65 117.20 L902.65 115.57 L902.65 113.95 L902.65 112.32 L902.65 110.70 L902.65 109.07 L902.65 107.44 L902.65 105.82 L902.65 104.19 L902.65 102.57 L902.65 100.94 L902.65 99.31 L902.65 97.69 L902.65 96.06 L902.65 94.44 L902.65 92.81 L902.65 91.18 L902.65 89.56 L902.65 87.93 L902.65 86.31 L902.65 84.68 L902.65 83.05 L902.65 81.43 L902.65 79.80 L902.65 78.18 L902.65 76.55 L902.65 74.92 L902.65 73.30 L902.65 71.67 L902.65 70.05 L902.65 68.42 L902.65 66.79 L902.65 65.17 L902.65 63.54 L902.65 61.92 L902.65 60.29 L902.65 58.66 L902.65 57.04 L902.65 55.41 L902.65 53.79 L902.65 52.16 L902.65 50.53 L902.65 48.91 L902.65 47.28 L902.65 45.66 L902.65 44.03 L902.65 42.40 L902.65 40.78 L902.65 39.15 L902.65 37.53 L902.65 35.90 L902.65 34.27 L902.65 32.65 L902.65 31.02 L902.65 29.40 L902.65 27.77 M902.65 613.13 L902.22 611.50 L901.80 609.88 L901.37 608.25 L900.95 606.63 L900.52 605.00 L900.10 603.37 L899.67 601.75 L899.25 600.12 L898.82 598.50 L898.40 596.87 L897.97 595.24 L897.55 593.62 L897.13 591.99 L896.71 590.37 L896.28 588.74 L895.86 587.11 L895.44 585.49 L895.02 583.86 L894.60 582.24 L894.18 580.61 L893.76 578.98 L893.34 577.36 L892.92 575.73 L892.51 574.11 L892.09 572.48 L891.68 570.85 L891.26 569.23 L890.85 567.60 L890.44 565.98 L890.02 564.35 L889.61 562.72 L889.20 561.10 L888.80 559.47 L888.39 557.85 L887.98 556.22 L887.58 554.59 L887.17 552.97 L886.77 551.34 L886.37 549.72 L885.97 548.09 L885.57 546.46 L885.17 544.84 L884.77 543.21 L884.38 541.59 L883.98 539.96 L883.59 538.33 L883.20 536.71 L882.81 535.08 L882.42 533.46 L882.03 531.83 L881.65 530.20 L881.27 528.58 L880.88 526.95 L880.50 525.33 L880.13 523.70 L879.75 522.07 L879.37 520.45 L879.00 518.82 L878.63 517.20 L878.26 515.57 L877.89 513.94 L877.53 512.32 L877.16 510.69 L876.80 509.07 L876.44 507.44 L876.08 505.81 L875.73 504.19 L875.37 502.56 L875.02 500.94 L874.67 499.31 L874.32 497.68 L873.98 496.06 L873.63 494.43 L873.29 492.81 L872.95 491.18 L872.62 489.55 L872.28 487.93 L871.95 486.30 L871.62 484.68 L871.29 483.05 L870.97 481.42 L870.65 479.80 L870.33 478.17 L870.01 476.55 L869.69 474.92 L869.38 473.29 L869.07 471.67 L868.76 470.04 L868.46 468.42 L868.16 466.79 L867.86 465.16 L867.56 463.54 L867.27 461.91 L866.97 460.29 L866.69 458.66 L866.40 457.03 L866.12 455.41 L865.84 453.78 L865.56 452.16 L865.28 450.53 L865.01 448.90 L864.74 447.28 L864.47 445.65 L864.21 444.03 L863.95 442.40 L863.69 440.77 L863.44 439.15 L863.19 437.52 L862.94 435.90 L862.69 434.27 L862.45 432.64 L862.21 431.02 L861.97 429.39 L861.74 427.77 L861.51 426.14 L861.28 424.51 L861.06 422.89 L860.84 421.26 L860.62 419.64 L860.41 418.01 L860.19 416.38 L859.99 414.76 L859.78 413.13 L859.58 411.51 L859.38 409.88 L859.19 408.25 L859.00 406.63 L858.81 405.00 L858.62 403.38 L858.44 401.75 L858.26 400.12 L858.09 398.50 L857.92 396.87 L857.75 395.25 L857.58 393.62 L857.42 391.99 L857.26 390.37 L857.11 388.74 L856.96 387.12 L856.81 385.49 L856.67 383.86 L856.53 382.24 L856.39 380.61 L856.26 378.99 L856.13 377.36 L856.00 375.73 L855.88 374.11 L855.76 372.48 L855.64 370.86 L855.53 369.23 L855.42 367.60 L855.32 365.98 L855.22 364.35 L855.12 362.73 L855.03 361.10 L854.94 359.47 L854.85 357.85 L854.77 356.22 L854.69 354.60 L854.61 352.97 L854.54 351.34 L854.47 349.72 L854.41 348.09 L854.34 346.47 L854.29 344.84 L854.23 343.21 L854.18 341.59 L854.14 339.96 L854.09 338.34 L854.06 336.71 L854.02 335.08 L853.99 333.46 L853.96 331.83 L853.94 330.21 L853.92 328.58 L853.90 326.95 L853.89 325.33 L853.88 323.70 L853.87 322.08 L853.87 320.45 L853.87 318.82 L853.88 317.20 L853.89 315.57 L853.90 313.95 L853.92 312.32 L853.94 310.69 L853.96 309.07 L853.99 307.44 L854.02 305.82 L854.06 304.19 L854.09 302.56 L854.14 300.94 L854.18 299.31 L854.23 297.69 L854.29 296.06 L854.34 294.43 L854.41 292.81 L854.47 291.18 L854.54 289.56 L854.61 287.93 L854.69 286.30 L854.77 284.68 L854.85 283.05 L854.94 281.43 L855.03 279.80 L855.12 278.17 L855.22 276.55 L855.32 274.92 L855.42 273.30 L855.53 271.67 L855.64 270.04 L855.76 268.42 L855.88 266.79 L856.00 265.17 L856.13 263.54 L856.26 261.91 L856.39 260.29 L856.53 258.66 L856.67 257.04 L856.81 255.41 L856.96 253.78 L857.11 252.16 L857.26 250.53 L857.42 248.91 L857.58 247.28 L857.75 245.65 L857.92 244.03 L858.09 242.40 L858.26 240.78 L858.44 239.15 L858.62 237.52 L858.81 235.90 L859.00 234.27 L859.19 232.65 L859.38 231.02 L859.58 229.39 L859.78 227.77 L859.99 226.14 L860.19 224.52 L860.41 222.89 L860.62 221.26 L860.84 219.64 L861.06 218.01 L861.28 216.39 L861.51 214.76 L861.74 213.13 L861.97 211.51 L862.21 209.88 L862.45 208.26 L862.69 206.63 L862.94 205.00 L863.19 203.38 L863.44 201.75 L863.69 200.13 L863.95 198.50 L864.21 196.87 L864.47 195.25 L864.74 193.62 L865.01 192.00 L865.28 190.37 L865.56 188.74 L865.84 187.12 L866.12 185.49 L866.40 183.87 L866.69 182.24 L866.97 180.61 L867.27 178.99 L867.56 177.36 L867.86 175.74 L868.16 174.11 L868.46 172.48 L868.76 170.86 L869.07 169.23 L869.38 167.61 L869.69 165.98 L870.01 164.35 L870.33 162.73 L870.65 161.10 L870.97 159.48 L871.29 157.85 L871.62 156.22 L871.95 154.60 L872.28 152.97 L872.62 151.35 L872.95 149.72 L873.29 148.09 L873.63 146.47 L873.98 144.84 L874.32 143.22 L874.67 141.59 L875.02 139.96 L875.37 138.34 L875.73 136.71 L876.08 135.09 L876.44 133.46 L876.80 131.83 L877.16 130.21 L877.53 128.58 L877.89 126.96 L878.26 125.33 L878.63 123.70 L879.00 122.08 L879.37 120.45 L879.75 118.83 L880.13 117.20 L880.50 115.57 L880.88 113.95 L881.27 112.32 L881.65 110.70 L882.03 109.07 L882.42 107.44 L882.81 105.82 L883.20 104.19 L883.59 102.57 L883.98 100.94 L884.38 99.31 L884.77 97.69 L885.17 96.06 L885.57 94.44 L885.97 92.81 L886.37 91.18 L886.77 89.56 L887.17 87.93 L887.58 86.31 L887.98 84.68 L888.39 83.05 L888.80 81.43 L889.20 79.80 L889.61 78.18 L890.02 76.55 L890.44 74.92 L890.85 73.30 L891.26 71.67 L891.68 70.05 L892.09 68.42 L892.51 66.79 L892.92 65.17 L893.34 63.54 L893.76 61.92 L894.18 60.29 L894.60 58.66 L895.02 57.04 L895.44 55.41 L895.86 53.79 L896.28 52.16 L896.71 50.53 L897.13 48.91 L897.55 47.28 L897.97 45.66 L898.40 44.03 L898.82 42.40 L899.25 40.78 L899.67 39.15 L900.10 37.53 L900.52 35.90 L900.95 34.27 L901.37 32.65 L901.80 31.02 L902.22 29.40 L902.65 27.77 M902.65 613.13 L901.80 611.50 L900.95 609.88 L900.10 608.25 L899.25 606.63 L898.39 605.00 L897.54 603.37 L896.69 601.75 L895.84 600.12 L895.00 598.50 L894.15 596.87 L893.30 595.24 L892.45 593.62 L891.61 591.99 L890.76 590.37 L889.92 588.74 L889.07 587.11 L888.23 585.49 L887.39 583.86 L886.55 582.24 L885.71 580.61 L884.87 578.98 L884.03 577.36 L883.20 575.73 L882.37 574.11 L881.53 572.48 L880.70 570.85 L879.88 569.23 L879.05 567.60 L878.22 565.98 L877.40 564.35 L876.58 562.72 L875.76 561.10 L874.94 559.47 L874.13 557.85 L873.31 556.22 L872.50 554.59 L871.69 552.97 L870.89 551.34 L870.08 549.72 L869.28 548.09 L868.48 546.46 L867.69 544.84 L866.89 543.21 L866.10 541.59 L865.32 539.96 L864.53 538.33 L863.75 536.71 L862.97 535.08 L862.19 533.46 L861.42 531.83 L860.65 530.20 L859.88 528.58 L859.12 526.95 L858.36 525.33 L857.60 523.70 L856.85 522.07 L856.10 520.45 L855.35 518.82 L854.61 517.20 L853.87 515.57 L853.13 513.94 L852.40 512.32 L851.68 510.69 L850.95 509.07 L850.23 507.44 L849.52 505.81 L848.80 504.19 L848.10 502.56 L847.39 500.94 L846.69 499.31 L846.00 497.68 L845.31 496.06 L844.62 494.43 L843.94 492.81 L843.26 491.18 L842.59 489.55 L841.92 487.93 L841.25 486.30 L840.59 484.68 L839.94 483.05 L839.29 481.42 L838.64 479.80 L838.00 478.17 L837.37 476.55 L836.74 474.92 L836.11 473.29 L835.49 471.67 L834.88 470.04 L834.27 468.42 L833.66 466.79 L833.07 465.16 L832.47 463.54 L831.88 461.91 L831.30 460.29 L830.72 458.66 L830.15 457.03 L829.58 455.41 L829.02 453.78 L828.46 452.16 L827.91 450.53 L827.37 448.90 L826.83 447.28 L826.30 445.65 L825.77 444.03 L825.25 442.40 L824.74 440.77 L824.23 439.15 L823.72 437.52 L823.22 435.90 L822.73 434.27 L822.25 432.64 L821.77 431.02 L821.30 429.39 L820.83 427.77 L820.37 426.14 L819.91 424.51 L819.47 422.89 L819.02 421.26 L818.59 419.64 L818.16 418.01 L817.74 416.38 L817.32 414.76 L816.91 413.13 L816.51 411.51 L816.11 409.88 L815.72 408.25 L815.34 406.63 L814.96 405.00 L814.59 403.38 L814.23 401.75 L813.87 400.12 L813.52 398.50 L813.18 396.87 L812.85 395.25 L812.52 393.62 L812.19 391.99 L811.88 390.37 L811.57 388.74 L811.27 387.12 L810.97 385.49 L810.69 383.86 L810.41 382.24 L810.13 380.61 L809.86 378.99 L809.61 377.36 L809.35 375.73 L809.11 374.11 L808.87 372.48 L808.64 370.86 L808.41 369.23 L808.20 367.60 L807.99 365.98 L807.79 364.35 L807.59 362.73 L807.40 361.10 L807.22 359.47 L807.05 357.85 L806.88 356.22 L806.72 354.60 L806.57 352.97 L806.43 351.34 L806.29 349.72 L806.16 348.09 L806.04 346.47 L805.92 344.84 L805.82 343.21 L805.72 341.59 L805.62 339.96 L805.54 338.34 L805.46 336.71 L805.39 335.08 L805.33 333.46 L805.27 331.83 L805.22 330.21 L805.18 328.58 L805.15 326.95 L805.12 325.33 L805.10 323.70 L805.09 322.08 L805.09 320.45 L805.09 318.82 L805.10 317.20 L805.12 315.57 L805.15 313.95 L805.18 312.32 L805.22 310.69 L805.27 309.07 L805.33 307.44 L805.39 305.82 L805.46 304.19 L805.54 302.56 L805.62 300.94 L805.72 299.31 L805.82 297.69 L805.92 296.06 L806.04 294.43 L806.16 292.81 L806.29 291.18 L806.43 289.56 L806.57 287.93 L806.72 286.30 L806.88 284.68 L807.05 283.05 L807.22 281.43 L807.40 279.80 L807.59 278.17 L807.79 276.55 L807.99 274.92 L808.20 273.30 L808.41 271.67 L808.64 270.04 L808.87 268.42 L809.11 266.79 L809.35 265.17 L809.61 263.54 L809.86 261.91 L810.13 260.29 L810.41 258.66 L810.69 257.04 L810.97 255.41 L811.27 253.78 L811.57 252.16 L811.88 250.53 L812.19 248.91 L812.52 247.28 L812.85 245.65 L813.18 244.03 L813.52 242.40 L813.87 240.78 L814.23 239.15 L814.59 237.52 L814.96 235.90 L815.34 234.27 L815.72 232.65 L816.11 231.02 L816.51 229.39 L816.91 227.77 L817.32 226.14 L817.74 224.52 L818.16 222.89 L818.59 221.26 L819.02 219.64 L819.47 218.01 L819.91 216.39 L820.37 214.76 L820.83 213.13 L821.30 211.51 L821.77 209.88 L822.25 208.26 L822.73 206.63 L823.22 205.00 L823.72 203.38 L824.23 201.75 L824.74 200.13 L825.25 198.50 L825.77 196.87 L826.30 195.25 L826.83 193.62 L827.37 192.00 L827.91 190.37 L828.46 188.74 L829.02 187.12 L829.58 185.49 L830.15 183.87 L830.72 182.24 L831.30 180.61 L831.88 178.99 L832.47 177.36 L833.07 175.74 L833.66 174.11 L834.27 172.48 L834.88 170.86 L835.49 169.23 L836.11 167.61 L836.74 165.98 L837.37 164.35 L838.00 162.73 L838.64 161.10 L839.29 159.48 L839.94 157.85 L840.59 156.22 L841.25 154.60 L841.92 152.97 L842.59 151.35 L843.26 149.72 L843.94 148.09 L844.62 146.47 L845.31 144.84 L846.00 143.22 L846.69 141.59 L847.39 139.96 L848.10 138.34 L848.80 136.71 L849.52 135.09 L850.23 133.46 L850.95 131.83 L851.68 130.21 L852.40 128.58 L853.13 126.96 L853.87 125.33 L854.61 123.70 L855.35 122.08 L856.10 120.45 L856.85 118.83 L857.60 117.20 L858.36 115.57 L859.12 113.95 L859.88 112.32 L860.65 110.70 L861.42 109.07 L862.19 107.44 L862.97 105.82 L863.75 104.19 L864.53 102.57 L865.32 100.94 L866.10 99.31 L866.89 97.69 L867.69 96.06 L868.48 94.44 L869.28 92.81 L870.08 91.18 L870.89 89.56 L871.69 87.93 L872.50 86.31 L873.31 84.68 L874.13 83.05 L874.94 81.43 L875.76 79.80 L876.58 78.18 L877.40 76.55 L878.22 74.92 L879.05 73.30 L879.88 71.67 L880.70 70.05 L881.53 68.42 L882.37 66.79 L883.20 65.17 L884.03 63.54 L884.87 61.92 L885.71 60.29 L886.55 58.66 L887.39 57.04 L888.23 55.41 L889.07 53.79 L889.92 52.16 L890.76 50.53 L891.61 48.91 L892.45 47.28 L893.30 45.66 L894.15 44.03 L895.00 42.40 L895.84 40.78 L896.69 39.15 L897.54 37.53 L898.39 35.90 L899.25 34.27 L900.10 32.65 L900.95 31.02 L901.80 29.40 L902.65 27.77 M902.65 613.13 L901.37 611.50 L900.10 609.88 L898.82 608.25 L897.54 606.63 L896.27 605.00 L894.99 603.37 L893.72 601.75 L892.44 600.12 L891.17 598.50 L889.90 596.87 L888.62 595.24 L887.35 593.62 L886.08 591.99 L884.82 590.37 L883.55 588.74 L882.28 587.11 L881.02 585.49 L879.76 583.86 L878.50 582.24 L877.24 580.61 L875.98 578.98 L874.73 577.36 L873.47 575.73 L872.22 574.11 L870.98 572.48 L869.73 570.85 L868.49 569.23 L867.25 567.60 L866.01 565.98 L864.77 564.35 L863.54 562.72 L862.31 561.10 L861.09 559.47 L859.86 557.85 L858.64 556.22 L857.43 554.59 L856.22 552.97 L855.01 551.34 L853.80 549.72 L852.60 548.09 L851.40 546.46 L850.21 544.84 L849.02 543.21 L847.83 541.59 L846.65 539.96 L845.47 538.33 L844.30 536.71 L843.13 535.08 L841.96 533.46 L840.80 531.83 L839.65 530.20 L838.50 528.58 L837.35 526.95 L836.21 525.33 L835.08 523.70 L833.95 522.07 L832.82 520.45 L831.70 518.82 L830.59 517.20 L829.48 515.57 L828.38 513.94 L827.28 512.32 L826.19 510.69 L825.10 509.07 L824.02 507.44 L822.95 505.81 L821.88 504.19 L820.82 502.56 L819.76 500.94 L818.71 499.31 L817.67 497.68 L816.63 496.06 L815.60 494.43 L814.58 492.81 L813.56 491.18 L812.55 489.55 L811.55 487.93 L810.56 486.30 L809.57 484.68 L808.58 483.05 L807.61 481.42 L806.64 479.80 L805.68 478.17 L804.73 476.55 L803.78 474.92 L802.85 473.29 L801.92 471.67 L800.99 470.04 L800.08 468.42 L799.17 466.79 L798.27 465.16 L797.38 463.54 L796.50 461.91 L795.62 460.29 L794.76 458.66 L793.90 457.03 L793.05 455.41 L792.21 453.78 L791.37 452.16 L790.55 450.53 L789.73 448.90 L788.92 447.28 L788.12 445.65 L787.33 444.03 L786.55 442.40 L785.78 440.77 L785.01 439.15 L784.26 437.52 L783.51 435.90 L782.78 434.27 L782.05 432.64 L781.33 431.02 L780.62 429.39 L779.92 427.77 L779.23 426.14 L778.55 424.51 L777.87 422.89 L777.21 421.26 L776.56 419.64 L775.92 418.01 L775.28 416.38 L774.66 414.76 L774.04 413.13 L773.44 411.51 L772.84 409.88 L772.26 408.25 L771.69 406.63 L771.12 405.00 L770.57 403.38 L770.02 401.75 L769.49 400.12 L768.96 398.50 L768.45 396.87 L767.94 395.25 L767.45 393.62 L766.97 391.99 L766.49 390.37 L766.03 388.74 L765.58 387.12 L765.14 385.49 L764.70 383.86 L764.28 382.24 L763.87 380.61 L763.47 378.99 L763.08 377.36 L762.70 375.73 L762.34 374.11 L761.98 372.48 L761.63 370.86 L761.30 369.23 L760.97 367.60 L760.66 365.98 L760.35 364.35 L760.06 362.73 L759.78 361.10 L759.51 359.47 L759.25 357.85 L759.00 356.22 L758.76 354.60 L758.53 352.97 L758.32 351.34 L758.11 349.72 L757.92 348.09 L757.73 346.47 L757.56 344.84 L757.40 343.21 L757.25 341.59 L757.11 339.96 L756.98 338.34 L756.87 336.71 L756.76 335.08 L756.67 333.46 L756.58 331.83 L756.51 330.21 L756.45 328.58 L756.40 326.95 L756.36 325.33 L756.33 323.70 L756.32 322.08 L756.31 320.45 L756.32 318.82 L756.33 317.20 L756.36 315.57 L756.40 313.95 L756.45 312.32 L756.51 310.69 L756.58 309.07 L756.67 307.44 L756.76 305.82 L756.87 304.19 L756.98 302.56 L757.11 300.94 L757.25 299.31 L757.40 297.69 L757.56 296.06 L757.73 294.43 L757.92 292.81 L758.11 291.18 L758.32 289.56 L758.53 287.93 L758.76 286.30 L759.00 284.68 L759.25 283.05 L759.51 281.43 L759.78 279.80 L760.06 278.17 L760.35 276.55 L760.66 274.92 L760.97 273.30 L761.30 271.67 L761.63 270.04 L761.98 268.42 L762.34 266.79 L762.70 265.17 L763.08 263.54 L763.47 261.91 L763.87 260.29 L764.28 258.66 L764.70 257.04 L765.14 255.41 L765.58 253.78 L766.03 252.16 L766.49 250.53 L766.97 248.91 L767.45 247.28 L767.94 245.65 L768.45 244.03 L768.96 242.40 L769.49 240.78 L770.02 239.15 L770.57 237.52 L771.12 235.90 L771.69 234.27 L772.26 232.65 L772.84 231.02 L773.44 229.39 L774.04 227.77 L774.66 226.14 L775.28 224.52 L775.92 222.89 L776.56 221.26 L777.21 219.64 L777.87 218.01 L778.55 216.39 L779.23 214.76 L779.92 213.13 L780.62 211.51 L781.33 209.88 L782.05 208.26 L782.78 206.63 L783.51 205.00 L784.26 203.38 L785.01 201.75 L785.78 200.13 L786.55 198.50 L787.33 196.87 L788.12 195.25 L788.92 193.62 L789.73 192.00 L790.55 190.37 L791.37 188.74 L792.21 187.12 L793.05 185.49 L793.90 183.87 L794.76 182.24 L795.62 180.61 L796.50 178.99 L797.38 177.36 L798.27 175.74 L799.17 174.11 L800.08 172.48 L800.99 170.86 L801.92 169.23 L802.85 167.61 L803.78 165.98 L804.73 164.35 L805.68 162.73 L806.64 161.10 L807.61 159.48 L808.58 157.85 L809.57 156.22 L810.56 154.60 L811.55 152.97 L812.55 151.35 L813.56 149.72 L814.58 148.09 L815.60 146.47 L816.63 144.84 L817.67 143.22 L818.71 141.59 L819.76 139.96 L820.82 138.34 L821.88 136.71 L822.95 135.09 L824.02 133.46 L825.10 131.83 L826.19 130.21 L827.28 128.58 L828.38 126.96 L829.48 125.33 L830.59 123.70 L831.70 122.08 L832.82 120.45 L833.95 118.83 L835.08 117.20 L836.21 115.57 L837.35 113.95 L838.50 112.32 L839.65 110.70 L840.80 109.07 L841.96 107.44 L843.13 105.82 L844.30 104.19 L845.47 102.57 L846.65 100.94 L847.83 99.31 L849.02 97.69 L850.21 96.06 L851.40 94.44 L852.60 92.81 L853.80 91.18 L855.01 89.56 L856.22 87.93 L857.43 86.31 L858.64 84.68 L859.86 83.05 L861.09 81.43 L862.31 79.80 L863.54 78.18 L864.77 76.55 L866.01 74.92 L867.25 73.30 L868.49 71.67 L869.73 70.05 L870.98 68.42 L872.22 66.79 L873.47 65.17 L874.73 63.54 L875.98 61.92 L877.24 60.29 L878.50 58.66 L879.76 57.04 L881.02 55.41 L882.28 53.79 L883.55 52.16 L884.82 50.53 L886.08 48.91 L887.35 47.28 L888.62 45.66 L889.90 44.03 L891.17 42.40 L892.44 40.78 L893.72 39.15 L894.99 37.53 L896.27 35.90 L897.54 34.27 L898.82 32.65 L900.10 31.02 L901.37 29.40 L902.65 27.77 M902.65 613.13 L900.95 611.50 L899.24 609.88 L897.54 608.25 L895.84 606.63 L894.14 605.00 L892.44 603.37 L890.74 601.75 L889.04 600.12 L887.34 598.50 L885.64 596.87 L883.95 595.24 L882.25 593.62 L880.56 591.99 L878.87 590.37 L877.18 588.74 L875.49 587.11 L873.81 585.49 L872.13 583.86 L870.45 582.24 L868.77 580.61 L867.09 578.98 L865.42 577.36 L863.75 575.73 L862.08 574.11 L860.42 572.48 L858.76 570.85 L857.10 569.23 L855.45 567.60 L853.80 565.98 L852.15 564.35 L850.51 562.72 L848.87 561.10 L847.23 559.47 L845.60 557.85 L843.98 556.22 L842.35 554.59 L840.74 552.97 L839.13 551.34 L837.52 549.72 L835.92 548.09 L834.32 546.46 L832.73 544.84 L831.14 543.21 L829.56 541.59 L827.98 539.96 L826.41 538.33 L824.85 536.71 L823.29 535.08 L821.74 533.46 L820.19 531.83 L818.65 530.20 L817.12 528.58 L815.59 526.95 L814.07 525.33 L812.55 523.70 L811.05 522.07 L809.55 520.45 L808.05 518.82 L806.57 517.20 L805.09 515.57 L803.62 513.94 L802.16 512.32 L800.70 510.69 L799.25 509.07 L797.81 507.44 L796.38 505.81 L794.96 504.19 L793.54 502.56 L792.13 500.94 L790.73 499.31 L789.34 497.68 L787.96 496.06 L786.59 494.43 L785.22 492.81 L783.87 491.18 L782.52 489.55 L781.18 487.93 L779.86 486.30 L778.54 484.68 L777.23 483.05 L775.93 481.42 L774.64 479.80 L773.36 478.17 L772.09 476.55 L770.83 474.92 L769.58 473.29 L768.34 471.67 L767.11 470.04 L765.89 468.42 L764.68 466.79 L763.48 465.16 L762.29 463.54 L761.11 461.91 L759.95 460.29 L758.79 458.66 L757.65 457.03 L756.51 455.41 L755.39 453.78 L754.28 452.16 L753.18 450.53 L752.09 448.90 L751.01 447.28 L749.95 445.65 L748.89 444.03 L747.85 442.40 L746.82 440.77 L745.80 439.15 L744.79 437.52 L743.80 435.90 L742.82 434.27 L741.85 432.64 L740.89 431.02 L739.94 429.39 L739.01 427.77 L738.09 426.14 L737.18 424.51 L736.28 422.89 L735.40 421.26 L734.53 419.64 L733.67 418.01 L732.83 416.38 L731.99 414.76 L731.18 413.13 L730.37 411.51 L729.58 409.88 L728.80 408.25 L728.03 406.63 L727.28 405.00 L726.54 403.38 L725.81 401.75 L725.10 400.12 L724.40 398.50 L723.71 396.87 L723.04 395.25 L722.38 393.62 L721.74 391.99 L721.11 390.37 L720.49 388.74 L719.89 387.12 L719.30 385.49 L718.72 383.86 L718.16 382.24 L717.61 380.61 L717.08 378.99 L716.56 377.36 L716.06 375.73 L715.57 374.11 L715.09 372.48 L714.63 370.86 L714.18 369.23 L713.75 367.60 L713.33 365.98 L712.92 364.35 L712.53 362.73 L712.16 361.10 L711.79 359.47 L711.45 357.85 L711.11 356.22 L710.80 354.60 L710.49 352.97 L710.21 351.34 L709.93 349.72 L709.67 348.09 L709.43 346.47 L709.20 344.84 L708.98 343.21 L708.78 341.59 L708.60 339.96 L708.43 338.34 L708.27 336.71 L708.13 335.08 L708.01 333.46 L707.89 331.83 L707.80 330.21 L707.72 328.58 L707.65 326.95 L707.60 325.33 L707.56 323.70 L707.54 322.08 L707.53 320.45 L707.54 318.82 L707.56 317.20 L707.60 315.57 L707.65 313.95 L707.72 312.32 L707.80 310.69 L707.89 309.07 L708.01 307.44 L708.13 305.82 L708.27 304.19 L708.43 302.56 L708.60 300.94 L708.78 299.31 L708.98 297.69 L709.20 296.06 L709.43 294.43 L709.67 292.81 L709.93 291.18 L710.21 289.56 L710.49 287.93 L710.80 286.30 L711.11 284.68 L711.45 283.05 L711.79 281.43 L712.16 279.80 L712.53 278.17 L712.92 276.55 L713.33 274.92 L713.75 273.30 L714.18 271.67 L714.63 270.04 L715.09 268.42 L715.57 266.79 L716.06 265.17 L716.56 263.54 L717.08 261.91 L717.61 260.29 L718.16 258.66 L718.72 257.04 L719.30 255.41 L719.89 253.78 L720.49 252.16 L721.11 250.53 L721.74 248.91 L722.38 247.28 L723.04 245.65 L723.71 244.03 L724.40 242.40 L725.10 240.78 L725.81 239.15 L726.54 237.52 L727.28 235.90 L728.03 234.27 L728.80 232.65 L729.58 231.02 L730.37 229.39 L731.18 227.77 L731.99 226.14 L732.83 224.52 L733.67 222.89 L734.53 221.26 L735.40 219.64 L736.28 218.01 L737.18 216.39 L738.09 214.76 L739.01 213.13 L739.94 211.51 L740.89 209.88 L741.85 208.26 L742.82 206.63 L743.80 205.00 L744.79 203.38 L745.80 201.75 L746.82 200.13 L747.85 198.50 L748.89 196.87 L749.95 195.25 L751.01 193.62 L752.09 192.00 L753.18 190.37 L754.28 188.74 L755.39 187.12 L756.51 185.49 L757.65 183.87 L758.79 182.24 L759.95 180.61 L761.11 178.99 L762.29 177.36 L763.48 175.74 L764.68 174.11 L765.89 172.48 L767.11 170.86 L768.34 169.23 L769.58 167.61 L770.83 165.98 L772.09 164.35 L773.36 162.73 L774.64 161.10 L775.93 159.48 L777.23 157.85 L778.54 156.22 L779.86 154.60 L781.18 152.97 L782.52 151.35 L783.87 149.72 L785.22 148.09 L786.59 146.47 L787.96 144.84 L789.34 143.22 L790.73 141.59 L792.13 139.96 L793.54 138.34 L794.96 136.71 L796.38 135.09 L797.81 133.46 L799.25 131.83 L800.70 130.21 L802.16 128.58 L803.62 126.96 L805.09 125.33 L806.57 123.70 L808.05 122.08 L809.55 120.45 L811.05 118.83 L812.55 117.20 L814.07 115.57 L815.59 113.95 L817.12 112.32 L818.65 110.70 L820.19 109.07 L821.74 107.44 L823.29 105.82 L824.85 104.19 L826.41 102.57 L827.98 100.94 L829.56 99.31 L831.14 97.69 L832.73 96.06 L834.32 94.44 L835.92 92.81 L837.52 91.18 L839.13 89.56 L840.74 87.93 L842.35 86.31 L843.98 84.68 L845.60 83.05 L847.23 81.43 L848.87 79.80 L850.51 78.18 L852.15 76.55 L853.80 74.92 L855.45 73.30 L857.10 71.67 L858.76 70.05 L860.42 68.42 L862.08 66.79 L863.75 65.17 L865.42 63.54 L867.09 61.92 L868.77 60.29 L870.45 58.66 L872.13 57.04 L873.81 55.41 L875.49 53.79 L877.18 52.16 L878.87 50.53 L880.56 48.91 L882.25 47.28 L883.95 45.66 L885.64 44.03 L887.34 42.40 L889.04 40.78 L890.74 39.15 L892.44 37.53 L894.14 35.90 L895.84 34.27 L897.54 32.65 L899.24 31.02 L900.95 29.40 L902.65 27.77 M902.65 613.13 L900.52 611.50 L898.39 609.88 L896.27 608.25 L894.14 606.63 L892.01 605.00 L889.89 603.37 L887.76 601.75 L885.64 600.12 L883.51 598.50 L881.39 596.87 L879.27 595.24 L877.16 593.62 L875.04 591.99 L872.93 590.37 L870.81 588.74 L868.71 587.11 L866.60 585.49 L864.50 583.86 L862.39 582.24 L860.30 580.61 L858.20 578.98 L856.11 577.36 L854.02 575.73 L851.94 574.11 L849.86 572.48 L847.78 570.85 L845.71 569.23 L843.65 567.60 L841.58 565.98 L839.52 564.35 L837.47 562.72 L835.42 561.10 L833.38 559.47 L831.34 557.85 L829.31 556.22 L827.28 554.59 L825.26 552.97 L823.24 551.34 L821.23 549.72 L819.23 548.09 L817.23 546.46 L815.24 544.84 L813.26 543.21 L811.28 541.59 L809.31 539.96 L807.35 538.33 L805.40 536.71 L803.45 535.08 L801.51 533.46 L799.57 531.83 L797.65 530.20 L795.73 528.58 L793.82 526.95 L791.92 525.33 L790.03 523.70 L788.15 522.07 L786.27 520.45 L784.40 518.82 L782.55 517.20 L780.70 515.57 L778.86 513.94 L777.03 512.32 L775.21 510.69 L773.40 509.07 L771.60 507.44 L769.81 505.81 L768.03 504.19 L766.26 502.56 L764.50 500.94 L762.75 499.31 L761.02 497.68 L759.29 496.06 L757.57 494.43 L755.87 492.81 L754.17 491.18 L752.49 489.55 L750.82 487.93 L749.16 486.30 L747.51 484.68 L745.87 483.05 L744.25 481.42 L742.64 479.80 L741.04 478.17 L739.45 476.55 L737.87 474.92 L736.31 473.29 L734.76 471.67 L733.22 470.04 L731.70 468.42 L730.19 466.79 L728.69 465.16 L727.20 463.54 L725.73 461.91 L724.27 460.29 L722.83 458.66 L721.40 457.03 L719.98 455.41 L718.58 453.78 L717.19 452.16 L715.81 450.53 L714.45 448.90 L713.10 447.28 L711.77 445.65 L710.45 444.03 L709.15 442.40 L707.86 440.77 L706.59 439.15 L705.33 437.52 L704.09 435.90 L702.86 434.27 L701.65 432.64 L700.45 431.02 L699.27 429.39 L698.10 427.77 L696.95 426.14 L695.81 424.51 L694.69 422.89 L693.59 421.26 L692.50 419.64 L691.43 418.01 L690.37 416.38 L689.33 414.76 L688.31 413.13 L687.30 411.51 L686.31 409.88 L685.33 408.25 L684.38 406.63 L683.43 405.00 L682.51 403.38 L681.60 401.75 L680.71 400.12 L679.84 398.50 L678.98 396.87 L678.14 395.25 L677.32 393.62 L676.51 391.99 L675.72 390.37 L674.95 388.74 L674.20 387.12 L673.46 385.49 L672.74 383.86 L672.04 382.24 L671.35 380.61 L670.69 378.99 L670.04 377.36 L669.41 375.73 L668.79 374.11 L668.20 372.48 L667.62 370.86 L667.06 369.23 L666.52 367.60 L665.99 365.98 L665.49 364.35 L665.00 362.73 L664.53 361.10 L664.08 359.47 L663.65 357.85 L663.23 356.22 L662.83 354.60 L662.46 352.97 L662.09 351.34 L661.75 349.72 L661.43 348.09 L661.12 346.47 L660.84 344.84 L660.57 343.21 L660.32 341.59 L660.09 339.96 L659.87 338.34 L659.68 336.71 L659.50 335.08 L659.34 333.46 L659.20 331.83 L659.08 330.21 L658.98 328.58 L658.90 326.95 L658.83 325.33 L658.79 323.70 L658.76 322.08 L658.75 320.45 L658.76 318.82 L658.79 317.20 L658.83 315.57 L658.90 313.95 L658.98 312.32 L659.08 310.69 L659.20 309.07 L659.34 307.44 L659.50 305.82 L659.68 304.19 L659.87 302.56 L660.09 300.94 L660.32 299.31 L660.57 297.69 L660.84 296.06 L661.12 294.43 L661.43 292.81 L661.75 291.18 L662.09 289.56 L662.46 287.93 L662.83 286.30 L663.23 284.68 L663.65 283.05 L664.08 281.43 L664.53 279.80 L665.00 278.17 L665.49 276.55 L665.99 274.92 L666.52 273.30 L667.06 271.67 L667.62 270.04 L668.20 268.42 L668.79 266.79 L669.41 265.17 L670.04 263.54 L670.69 261.91 L671.35 260.29 L672.04 258.66 L672.74 257.04 L673.46 255.41 L674.20 253.78 L674.95 252.16 L675.72 250.53 L676.51 248.91 L677.32 247.28 L678.14 245.65 L678.98 244.03 L679.84 242.40 L680.71 240.78 L681.60 239.15 L682.51 237.52 L683.43 235.90 L684.38 234.27 L685.33 232.65 L686.31 231.02 L687.30 229.39 L688.31 227.77 L689.33 226.14 L690.37 224.52 L691.43 222.89 L692.50 221.26 L693.59 219.64 L694.69 218.01 L695.81 216.39 L696.95 214.76 L698.10 213.13 L699.27 211.51 L700.45 209.88 L701.65 208.26 L702.86 206.63 L704.09 205.00 L705.33 203.38 L706.59 201.75 L707.86 200.13 L709.15 198.50 L710.45 196.87 L711.77 195.25 L713.10 193.62 L714.45 192.00 L715.81 190.37 L717.19 188.74 L718.58 187.12 L719.98 185.49 L721.40 183.87 L722.83 182.24 L724.27 180.61 L725.73 178.99 L727.20 177.36 L728.69 175.74 L730.19 174.11 L731.70 172.48 L733.22 170.86 L734.76 169.23 L736.31 167.61 L737.87 165.98 L739.45 164.35 L741.04 162.73 L742.64 161.10 L744.25 159.48 L745.87 157.85 L747.51 156.22 L749.16 154.60 L750.82 152.97 L752.49 151.35 L754.17 149.72 L755.87 148.09 L757.57 146.47 L759.29 144.84 L761.02 143.22 L762.75 141.59 L764.50 139.96 L766.26 138.34 L768.03 136.71 L769.81 135.09 L771.60 133.46 L773.40 131.83 L775.21 130.21 L777.03 128.58 L778.86 126.96 L780.70 125.33 L782.55 123.70 L784.40 122.08 L786.27 120.45 L788.15 118.83 L790.03 117.20 L791.92 115.57 L793.82 113.95 L795.73 112.32 L797.65 110.70 L799.57 109.07 L801.51 107.44 L803.45 105.82 L805.40 104.19 L807.35 102.57 L809.31 100.94 L811.28 99.31 L813.26 97.69 L815.24 96.06 L817.23 94.44 L819.23 92.81 L821.23 91.18 L823.24 89.56 L825.26 87.93 L827.28 86.31 L829.31 84.68 L831.34 83.05 L833.38 81.43 L835.42 79.80 L837.47 78.18 L839.52 76.55 L841.58 74.92 L843.65 73.30 L845.71 71.67 L847.78 70.05 L849.86 68.42 L851.94 66.79 L854.02 65.17 L856.11 63.54 L858.20 61.92 L860.30 60.29 L862.39 58.66 L864.50 57.04 L866.60 55.41 L868.71 53.79 L870.81 52.16 L872.93 50.53 L875.04 48.91 L877.16 47.28 L879.27 45.66 L881.39 44.03 L883.51 42.40 L885.64 40.78 L887.76 39.15 L889.89 37.53 L892.01 35.90 L894.14 34.27 L896.27 32.65 L898.39 31.02 L900.52 29.40 L902.65 27.77 M902.65 613.13 L900.10 611.50 L897.54 609.88 L894.99 608.25 L892.44 606.63 L889.88 605.00 L887.33 603.37 L884.78 601.75 L882.23 600.12 L879.69 598.50 L877.14 596.87 L874.60 595.24 L872.06 593.62 L869.52 591.99 L866.98 590.37 L864.45 588.74 L861.92 587.11 L859.39 585.49 L856.86 583.86 L854.34 582.24 L851.83 580.61 L849.31 578.98 L846.80 577.36 L844.30 575.73 L841.80 574.11 L839.30 572.48 L836.81 570.85 L834.33 569.23 L831.84 567.60 L829.37 565.98 L826.90 564.35 L824.43 562.72 L821.98 561.10 L819.52 559.47 L817.08 557.85 L814.64 556.22 L812.21 554.59 L809.78 552.97 L807.36 551.34 L804.95 549.72 L802.55 548.09 L800.15 546.46 L797.76 544.84 L795.38 543.21 L793.01 541.59 L790.65 539.96 L788.29 538.33 L785.94 536.71 L783.61 535.08 L781.28 533.46 L778.96 531.83 L776.65 530.20 L774.35 528.58 L772.06 526.95 L769.78 525.33 L767.51 523.70 L765.25 522.07 L763.00 520.45 L760.76 518.82 L758.53 517.20 L756.31 515.57 L754.10 513.94 L751.91 512.32 L749.73 510.69 L747.55 509.07 L745.39 507.44 L743.25 505.81 L741.11 504.19 L738.99 502.56 L736.87 500.94 L734.78 499.31 L732.69 497.68 L730.62 496.06 L728.56 494.43 L726.51 492.81 L724.48 491.18 L722.46 489.55 L720.45 487.93 L718.46 486.30 L716.48 484.68 L714.52 483.05 L712.57 481.42 L710.63 479.80 L708.71 478.17 L706.81 476.55 L704.92 474.92 L703.04 473.29 L701.18 471.67 L699.34 470.04 L697.51 468.42 L695.69 466.79 L693.90 465.16 L692.11 463.54 L690.35 461.91 L688.60 460.29 L686.86 458.66 L685.15 457.03 L683.45 455.41 L681.76 453.78 L680.09 452.16 L678.44 450.53 L676.81 448.90 L675.19 447.28 L673.60 445.65 L672.02 444.03 L670.45 442.40 L668.91 440.77 L667.38 439.15 L665.87 437.52 L664.37 435.90 L662.90 434.27 L661.44 432.64 L660.01 431.02 L658.59 429.39 L657.19 427.77 L655.81 426.14 L654.44 424.51 L653.10 422.89 L651.77 421.26 L650.47 419.64 L649.18 418.01 L647.91 416.38 L646.67 414.76 L645.44 413.13 L644.23 411.51 L643.04 409.88 L641.87 408.25 L640.72 406.63 L639.59 405.00 L638.48 403.38 L637.39 401.75 L636.32 400.12 L635.27 398.50 L634.24 396.87 L633.24 395.25 L632.25 393.62 L631.28 391.99 L630.34 390.37 L629.41 388.74 L628.50 387.12 L627.62 385.49 L626.76 383.86 L625.92 382.24 L625.09 380.61 L624.29 378.99 L623.52 377.36 L622.76 375.73 L622.02 374.11 L621.31 372.48 L620.61 370.86 L619.94 369.23 L619.29 367.60 L618.66 365.98 L618.06 364.35 L617.47 362.73 L616.91 361.10 L616.37 359.47 L615.85 357.85 L615.35 356.22 L614.87 354.60 L614.42 352.97 L613.98 351.34 L613.57 349.72 L613.18 348.09 L612.82 346.47 L612.47 344.84 L612.15 343.21 L611.85 341.59 L611.57 339.96 L611.32 338.34 L611.08 336.71 L610.87 335.08 L610.68 333.46 L610.52 331.83 L610.37 330.21 L610.25 328.58 L610.15 326.95 L610.07 325.33 L610.01 323.70 L609.98 322.08 L609.97 320.45 L609.98 318.82 L610.01 317.20 L610.07 315.57 L610.15 313.95 L610.25 312.32 L610.37 310.69 L610.52 309.07 L610.68 307.44 L610.87 305.82 L611.08 304.19 L611.32 302.56 L611.57 300.94 L611.85 299.31 L612.15 297.69 L612.47 296.06 L612.82 294.43 L613.18 292.81 L613.57 291.18 L613.98 289.56 L614.42 287.93 L614.87 286.30 L615.35 284.68 L615.85 283.05 L616.37 281.43 L616.91 279.80 L617.47 278.17 L618.06 276.55 L618.66 274.92 L619.29 273.30 L619.94 271.67 L620.61 270.04 L621.31 268.42 L622.02 266.79 L622.76 265.17 L623.52 263.54 L624.29 261.91 L625.09 260.29 L625.92 258.66 L626.76 257.04 L627.62 255.41 L628.50 253.78 L629.41 252.16 L630.34 250.53 L631.28 248.91 L632.25 247.28 L633.24 245.65 L634.24 244.03 L635.27 242.40 L636.32 240.78 L637.39 239.15 L638.48 237.52 L639.59 235.90 L640.72 234.27 L641.87 232.65 L643.04 231.02 L644.23 229.39 L645.44 227.77 L646.67 226.14 L647.91 224.52 L649.18 222.89 L650.47 221.26 L651.77 219.64 L653.10 218.01 L654.44 216.39 L655.81 214.76 L657.19 213.13 L658.59 211.51 L660.01 209.88 L661.44 208.26 L662.90 206.63 L664.37 205.00 L665.87 203.38 L667.38 201.75 L668.91 200.13 L670.45 198.50 L672.02 196.87 L673.60 195.25 L675.19 193.62 L676.81 192.00 L678.44 190.37 L680.09 188.74 L681.76 187.12 L683.45 185.49 L685.15 183.87 L686.86 182.24 L688.60 180.61 L690.35 178.99 L692.11 177.36 L693.90 175.74 L695.69 174.11 L697.51 172.48 L699.34 170.86 L701.18 169.23 L703.04 167.61 L704.92 165.98 L706.81 164.35 L708.71 162.73 L710.63 161.10 L712.57 159.48 L714.52 157.85 L716.48 156.22 L718.46 154.60 L720.45 152.97 L722.46 151.35 L724.48 149.72 L726.51 148.09 L728.56 146.47 L730.62 144.84 L732.69 143.22 L734.78 141.59 L736.87 139.96 L738.99 138.34 L741.11 136.71 L743.25 135.09 L745.39 133.46 L747.55 131.83 L749.73 130.21 L751.91 128.58 L754.10 126.96 L756.31 125.33 L758.53 123.70 L760.76 122.08 L763.00 120.45 L765.25 118.83 L767.51 117.20 L769.78 115.57 L772.06 113.95 L774.35 112.32 L776.65 110.70 L778.96 109.07 L781.28 107.44 L783.61 105.82 L785.94 104.19 L788.29 102.57 L790.65 100.94 L793.01 99.31 L795.38 97.69 L797.76 96.06 L800.15 94.44 L802.55 92.81 L804.95 91.18 L807.36 89.56 L809.78 87.93 L812.21 86.31 L814.64 84.68 L817.08 83.05 L819.52 81.43 L821.98 79.80 L824.43 78.18 L826.90 76.55 L829.37 74.92 L831.84 73.30 L834.33 71.67 L836.81 70.05 L839.30 68.42 L841.80 66.79 L844.30 65.17 L846.80 63.54 L849.31 61.92 L851.83 60.29 L854.34 58.66 L856.86 57.04 L859.39 55.41 L861.92 53.79 L864.45 52.16 L866.98 50.53 L869.52 48.91 L872.06 47.28 L874.60 45.66 L877.14 44.03 L879.69 42.40 L882.23 40.78 L884.78 39.15 L887.33 37.53 L889.88 35.90 L892.44 34.27 L894.99 32.65 L897.54 31.02 L900.10 29.40 L902.65 27.77 M902.65 613.13 L899.67 611.50 L896.69 609.88 L893.71 608.25 L890.73 606.63 L887.76 605.00 L884.78 603.37 L881.80 601.75 L878.83 600.12 L875.86 598.50 L872.89 596.87 L869.92 595.24 L866.96 593.62 L864.00 591.99 L861.04 590.37 L858.08 588.74 L855.13 587.11 L852.18 585.49 L849.23 583.86 L846.29 582.24 L843.36 580.61 L840.42 578.98 L837.50 577.36 L834.57 575.73 L831.66 574.11 L828.74 572.48 L825.84 570.85 L822.94 569.23 L820.04 567.60 L817.16 565.98 L814.27 564.35 L811.40 562.72 L808.53 561.10 L805.67 559.47 L802.82 557.85 L799.97 556.22 L797.13 554.59 L794.30 552.97 L791.48 551.34 L788.67 549.72 L785.86 548.09 L783.07 546.46 L780.28 544.84 L777.50 543.21 L774.74 541.59 L771.98 539.96 L769.23 538.33 L766.49 536.71 L763.77 535.08 L761.05 533.46 L758.34 531.83 L755.65 530.20 L752.96 528.58 L750.29 526.95 L747.63 525.33 L744.98 523.70 L742.34 522.07 L739.72 520.45 L737.11 518.82 L734.51 517.20 L731.92 515.57 L729.35 513.94 L726.79 512.32 L724.24 510.69 L721.70 509.07 L719.18 507.44 L716.68 505.81 L714.19 504.19 L711.71 502.56 L709.24 500.94 L706.80 499.31 L704.36 497.68 L701.94 496.06 L699.54 494.43 L697.15 492.81 L694.78 491.18 L692.43 489.55 L690.09 487.93 L687.76 486.30 L685.45 484.68 L683.16 483.05 L680.89 481.42 L678.63 479.80 L676.39 478.17 L674.17 476.55 L671.96 474.92 L669.77 473.29 L667.60 471.67 L665.45 470.04 L663.32 468.42 L661.20 466.79 L659.10 465.16 L657.02 463.54 L654.96 461.91 L652.92 460.29 L650.90 458.66 L648.90 457.03 L646.91 455.41 L644.95 453.78 L643.00 452.16 L641.08 450.53 L639.17 448.90 L637.29 447.28 L635.42 445.65 L633.58 444.03 L631.75 442.40 L629.95 440.77 L628.17 439.15 L626.40 437.52 L624.66 435.90 L622.94 434.27 L621.24 432.64 L619.57 431.02 L617.91 429.39 L616.28 427.77 L614.67 426.14 L613.08 424.51 L611.51 422.89 L609.96 421.26 L608.44 419.64 L606.94 418.01 L605.46 416.38 L604.00 414.76 L602.57 413.13 L601.16 411.51 L599.77 409.88 L598.41 408.25 L597.07 406.63 L595.75 405.00 L594.45 403.38 L593.18 401.75 L591.93 400.12 L590.71 398.50 L589.51 396.87 L588.33 395.25 L587.18 393.62 L586.05 391.99 L584.95 390.37 L583.87 388.74 L582.81 387.12 L581.78 385.49 L580.78 383.86 L579.79 382.24 L578.84 380.61 L577.90 378.99 L576.99 377.36 L576.11 375.73 L575.25 374.11 L574.42 372.48 L573.61 370.86 L572.82 369.23 L572.07 367.60 L571.33 365.98 L570.62 364.35 L569.94 362.73 L569.28 361.10 L568.65 359.47 L568.04 357.85 L567.46 356.22 L566.91 354.60 L566.38 352.97 L565.87 351.34 L565.39 349.72 L564.94 348.09 L564.51 346.47 L564.11 344.84 L563.74 343.21 L563.38 341.59 L563.06 339.96 L562.76 338.34 L562.49 336.71 L562.24 335.08 L562.02 333.46 L561.83 331.83 L561.66 330.21 L561.51 328.58 L561.40 326.95 L561.31 325.33 L561.24 323.70 L561.20 322.08 L561.19 320.45 L561.20 318.82 L561.24 317.20 L561.31 315.57 L561.40 313.95 L561.51 312.32 L561.66 310.69 L561.83 309.07 L562.02 307.44 L562.24 305.82 L562.49 304.19 L562.76 302.56 L563.06 300.94 L563.38 299.31 L563.74 297.69 L564.11 296.06 L564.51 294.43 L564.94 292.81 L565.39 291.18 L565.87 289.56 L566.38 287.93 L566.91 286.30 L567.46 284.68 L568.04 283.05 L568.65 281.43 L569.28 279.80 L569.94 278.17 L570.62 276.55 L571.33 274.92 L572.07 273.30 L572.82 271.67 L573.61 270.04 L574.42 268.42 L575.25 266.79 L576.11 265.17 L576.99 263.54 L577.90 261.91 L578.84 260.29 L579.79 258.66 L580.78 257.04 L581.78 255.41 L582.81 253.78 L583.87 252.16 L584.95 250.53 L586.05 248.91 L587.18 247.28 L588.33 245.65 L589.51 244.03 L590.71 242.40 L591.93 240.78 L593.18 239.15 L594.45 237.52 L595.75 235.90 L597.07 234.27 L598.41 232.65 L599.77 231.02 L601.16 229.39 L602.57 227.77 L604.00 226.14 L605.46 224.52 L606.94 222.89 L608.44 221.26 L609.96 219.64 L611.51 218.01 L613.08 216.39 L614.67 214.76 L616.28 213.13 L617.91 211.51 L619.57 209.88 L621.24 208.26 L622.94 206.63 L624.66 205.00 L626.40 203.38 L628.17 201.75 L629.95 200.13 L631.75 198.50 L633.58 196.87 L635.42 195.25 L637.29 193.62 L639.17 192.00 L641.08 190.37 L643.00 188.74 L644.95 187.12 L646.91 185.49 L648.90 183.87 L650.90 182.24 L652.92 180.61 L654.96 178.99 L657.02 177.36 L659.10 175.74 L661.20 174.11 L663.32 172.48 L665.45 170.86 L667.60 169.23 L669.77 167.61 L671.96 165.98 L674.17 164.35 L676.39 162.73 L678.63 161.10 L680.89 159.48 L683.16 157.85 L685.45 156.22 L687.76 154.60 L690.09 152.97 L692.43 151.35 L694.78 149.72 L697.15 148.09 L699.54 146.47 L701.94 144.84 L704.36 143.22 L706.80 141.59 L709.24 139.96 L711.71 138.34 L714.19 136.71 L716.68 135.09 L719.18 133.46 L721.70 131.83 L724.24 130.21 L726.79 128.58 L729.35 126.96 L731.92 125.33 L734.51 123.70 L737.11 122.08 L739.72 120.45 L742.34 118.83 L744.98 117.20 L747.63 115.57 L750.29 113.95 L752.96 112.32 L755.65 110.70 L758.34 109.07 L761.05 107.44 L763.77 105.82 L766.49 104.19 L769.23 102.57 L771.98 100.94 L774.74 99.31 L777.50 97.69 L780.28 96.06 L783.07 94.44 L785.86 92.81 L788.67 91.18 L791.48 89.56 L794.30 87.93 L797.13 86.31 L799.97 84.68 L802.82 83.05 L805.67 81.43 L808.53 79.80 L811.40 78.18 L814.27 76.55 L817.16 74.92 L820.04 73.30 L822.94 71.67 L825.84 70.05 L828.74 68.42 L831.66 66.79 L834.57 65.17 L837.50 63.54 L840.42 61.92 L843.36 60.29 L846.29 58.66 L849.23 57.04 L852.18 55.41 L855.13 53.79 L858.08 52.16 L861.04 50.53 L864.00 48.91 L866.96 47.28 L869.92 45.66 L872.89 44.03 L875.86 42.40 L878.83 40.78 L881.80 39.15 L884.78 37.53 L887.76 35.90 L890.73 34.27 L893.71 32.65 L896.69 31.02 L899.67 29.40 L902.65 27.77 M902.65 613.13 L899.24 611.50 L895.84 609.88 L892.43 608.25 L889.03 606.63 L885.63 605.00 L882.23 603.37 L878.83 601.75 L875.43 600.12 L872.03 598.50 L868.64 596.87 L865.25 595.24 L861.86 593.62 L858.47 591.99 L855.09 590.37 L851.71 588.74 L848.34 587.11 L844.97 585.49 L841.60 583.86 L838.24 582.24 L834.89 580.61 L831.53 578.98 L828.19 577.36 L824.85 575.73 L821.51 574.11 L818.19 572.48 L814.87 570.85 L811.55 569.23 L808.24 567.60 L804.94 565.98 L801.65 564.35 L798.36 562.72 L795.09 561.10 L791.82 559.47 L788.55 557.85 L785.30 556.22 L782.06 554.59 L778.83 552.97 L775.60 551.34 L772.39 549.72 L769.18 548.09 L765.99 546.46 L762.80 544.84 L759.63 543.21 L756.46 541.59 L753.31 539.96 L750.17 538.33 L747.04 536.71 L743.93 535.08 L740.82 533.46 L737.73 531.83 L734.65 530.20 L731.58 528.58 L728.53 526.95 L725.48 525.33 L722.46 523.70 L719.44 522.07 L716.44 520.45 L713.46 518.82 L710.49 517.20 L707.53 515.57 L704.59 513.94 L701.66 512.32 L698.75 510.69 L695.85 509.07 L692.97 507.44 L690.11 505.81 L687.26 504.19 L684.43 502.56 L681.62 500.94 L678.82 499.31 L676.04 497.68 L673.27 496.06 L670.53 494.43 L667.80 492.81 L665.09 491.18 L662.39 489.55 L659.72 487.93 L657.06 486.30 L654.43 484.68 L651.81 483.05 L649.21 481.42 L646.63 479.80 L644.07 478.17 L641.53 476.55 L639.01 474.92 L636.51 473.29 L634.03 471.67 L631.57 470.04 L629.13 468.42 L626.71 466.79 L624.31 465.16 L621.93 463.54 L619.58 461.91 L617.25 460.29 L614.93 458.66 L612.65 457.03 L610.38 455.41 L608.13 453.78 L605.91 452.16 L603.71 450.53 L601.53 448.90 L599.38 447.28 L597.24 445.65 L595.14 444.03 L593.05 442.40 L590.99 440.77 L588.95 439.15 L586.94 437.52 L584.95 435.90 L582.98 434.27 L581.04 432.64 L579.13 431.02 L577.23 429.39 L575.37 427.77 L573.52 426.14 L571.71 424.51 L569.92 422.89 L568.15 421.26 L566.41 419.64 L564.69 418.01 L563.00 416.38 L561.34 414.76 L559.70 413.13 L558.09 411.51 L556.50 409.88 L554.94 408.25 L553.41 406.63 L551.90 405.00 L550.43 403.38 L548.97 401.75 L547.55 400.12 L546.15 398.50 L544.78 396.87 L543.43 395.25 L542.12 393.62 L540.83 391.99 L539.56 390.37 L538.33 388.74 L537.12 387.12 L535.94 385.49 L534.79 383.86 L533.67 382.24 L532.58 380.61 L531.51 378.99 L530.47 377.36 L529.46 375.73 L528.48 374.11 L527.53 372.48 L526.60 370.86 L525.71 369.23 L524.84 367.60 L524.00 365.98 L523.19 364.35 L522.41 362.73 L521.66 361.10 L520.94 359.47 L520.24 357.85 L519.58 356.22 L518.94 354.60 L518.34 352.97 L517.76 351.34 L517.21 349.72 L516.70 348.09 L516.21 346.47 L515.75 344.84 L515.32 343.21 L514.92 341.59 L514.55 339.96 L514.21 338.34 L513.89 336.71 L513.61 335.08 L513.36 333.46 L513.14 331.83 L512.94 330.21 L512.78 328.58 L512.65 326.95 L512.54 325.33 L512.47 323.70 L512.42 322.08 L512.41 320.45 L512.42 318.82 L512.47 317.20 L512.54 315.57 L512.65 313.95 L512.78 312.32 L512.94 310.69 L513.14 309.07 L513.36 307.44 L513.61 305.82 L513.89 304.19 L514.21 302.56 L514.55 300.94 L514.92 299.31 L515.32 297.69 L515.75 296.06 L516.21 294.43 L516.70 292.81 L517.21 291.18 L517.76 289.56 L518.34 287.93 L518.94 286.30 L519.58 284.68 L520.24 283.05 L520.94 281.43 L521.66 279.80 L522.41 278.17 L523.19 276.55 L524.00 274.92 L524.84 273.30 L525.71 271.67 L526.60 270.04 L527.53 268.42 L528.48 266.79 L529.46 265.17 L530.47 263.54 L531.51 261.91 L532.58 260.29 L533.67 258.66 L534.79 257.04 L535.94 255.41 L537.12 253.78 L538.33 252.16 L539.56 250.53 L540.83 248.91 L542.12 247.28 L543.43 245.65 L544.78 244.03 L546.15 242.40 L547.55 240.78 L548.97 239.15 L550.43 237.52 L551.90 235.90 L553.41 234.27 L554.94 232.65 L556.50 231.02 L558.09 229.39 L559.70 227.77 L561.34 226.14 L563.00 224.52 L564.69 222.89 L566.41 221.26 L568.15 219.64 L569.92 218.01 L571.71 216.39 L573.52 214.76 L575.37 213.13 L577.23 211.51 L579.13 209.88 L581.04 208.26 L582.98 206.63 L584.95 205.00 L586.94 203.38 L588.95 201.75 L590.99 200.13 L593.05 198.50 L595.14 196.87 L597.24 195.25 L599.38 193.62 L601.53 192.00 L603.71 190.37 L605.91 188.74 L608.13 187.12 L610.38 185.49 L612.65 183.87 L614.93 182.24 L617.25 180.61 L619.58 178.99 L621.93 177.36 L624.31 175.74 L626.71 174.11 L629.13 172.48 L631.57 170.86 L634.03 169.23 L636.51 167.61 L639.01 165.98 L641.53 164.35 L644.07 162.73 L646.63 161.10 L649.21 159.48 L651.81 157.85 L654.43 156.22 L657.06 154.60 L659.72 152.97 L662.39 151.35 L665.09 149.72 L667.80 148.09 L670.53 146.47 L673.27 144.84 L676.04 143.22 L678.82 141.59 L681.62 139.96 L684.43 138.34 L687.26 136.71 L690.11 135.09 L692.97 133.46 L695.85 131.83 L698.75 130.21 L701.66 128.58 L704.59 126.96 L707.53 125.33 L710.49 123.70 L713.46 122.08 L716.44 120.45 L719.44 118.83 L722.46 117.20 L725.48 115.57 L728.53 113.95 L731.58 112.32 L734.65 110.70 L737.73 109.07 L740.82 107.44 L743.93 105.82 L747.04 104.19 L750.17 102.57 L753.31 100.94 L756.46 99.31 L759.63 97.69 L762.80 96.06 L765.99 94.44 L769.18 92.81 L772.39 91.18 L775.60 89.56 L778.83 87.93 L782.06 86.31 L785.30 84.68 L788.55 83.05 L791.82 81.43 L795.09 79.80 L798.36 78.18 L801.65 76.55 L804.94 74.92 L808.24 73.30 L811.55 71.67 L814.87 70.05 L818.19 68.42 L821.51 66.79 L824.85 65.17 L828.19 63.54 L831.53 61.92 L834.89 60.29 L838.24 58.66 L841.60 57.04 L844.97 55.41 L848.34 53.79 L851.71 52.16 L855.09 50.53 L858.47 48.91 L861.86 47.28 L865.25 45.66 L868.64 44.03 L872.03 42.40 L875.43 40.78 L878.83 39.15 L882.23 37.53 L885.63 35.90 L889.03 34.27 L892.43 32.65 L895.84 31.02 L899.24 29.40 L902.65 27.77 M902.65 613.13 L898.82 611.50 L894.99 609.88 L891.16 608.25 L887.33 606.63 L883.50 605.00 L879.67 603.37 L875.85 601.75 L872.03 600.12 L868.20 598.50 L864.39 596.87 L860.57 595.24 L856.76 593.62 L852.95 591.99 L849.15 590.37 L845.35 588.74 L841.55 587.11 L837.76 585.49 L833.97 583.86 L830.19 582.24 L826.41 580.61 L822.64 578.98 L818.88 577.36 L815.12 575.73 L811.37 574.11 L807.63 572.48 L803.89 570.85 L800.16 569.23 L796.44 567.60 L792.73 565.98 L789.02 564.35 L785.33 562.72 L781.64 561.10 L777.96 559.47 L774.29 557.85 L770.63 556.22 L766.99 554.59 L763.35 552.97 L759.72 551.34 L756.10 549.72 L752.50 548.09 L748.90 546.46 L745.32 544.84 L741.75 543.21 L738.19 541.59 L734.64 539.96 L731.11 538.33 L727.59 536.71 L724.08 535.08 L720.59 533.46 L717.11 531.83 L713.65 530.20 L710.20 528.58 L706.76 526.95 L703.34 525.33 L699.93 523.70 L696.54 522.07 L693.17 520.45 L689.81 518.82 L686.47 517.20 L683.14 515.57 L679.83 513.94 L676.54 512.32 L673.26 510.69 L670.00 509.07 L666.76 507.44 L663.54 505.81 L660.34 504.19 L657.15 502.56 L653.99 500.94 L650.84 499.31 L647.71 497.68 L644.60 496.06 L641.51 494.43 L638.44 492.81 L635.39 491.18 L632.36 489.55 L629.35 487.93 L626.37 486.30 L623.40 484.68 L620.45 483.05 L617.53 481.42 L614.63 479.80 L611.75 478.17 L608.89 476.55 L606.05 474.92 L603.24 473.29 L600.45 471.67 L597.68 470.04 L594.94 468.42 L592.22 466.79 L589.52 465.16 L586.85 463.54 L584.20 461.91 L581.57 460.29 L578.97 458.66 L576.39 457.03 L573.84 455.41 L571.32 453.78 L568.82 452.16 L566.34 450.53 L563.89 448.90 L561.47 447.28 L559.07 445.65 L556.70 444.03 L554.35 442.40 L552.03 440.77 L549.74 439.15 L547.48 437.52 L545.24 435.90 L543.03 434.27 L540.84 432.64 L538.69 431.02 L536.56 429.39 L534.46 427.77 L532.38 426.14 L530.34 424.51 L528.32 422.89 L526.34 421.26 L524.38 419.64 L522.45 418.01 L520.55 416.38 L518.67 414.76 L516.83 413.13 L515.02 411.51 L513.23 409.88 L511.48 408.25 L509.76 406.63 L508.06 405.00 L506.40 403.38 L504.76 401.75 L503.16 400.12 L501.59 398.50 L500.04 396.87 L498.53 395.25 L497.05 393.62 L495.60 391.99 L494.18 390.37 L492.79 388.74 L491.43 387.12 L490.11 385.49 L488.81 383.86 L487.55 382.24 L486.32 380.61 L485.12 378.99 L483.95 377.36 L482.81 375.73 L481.71 374.11 L480.64 372.48 L479.60 370.86 L478.59 369.23 L477.61 367.60 L476.67 365.98 L475.76 364.35 L474.88 362.73 L474.04 361.10 L473.22 359.47 L472.44 357.85 L471.70 356.22 L470.98 354.60 L470.30 352.97 L469.65 351.34 L469.04 349.72 L468.45 348.09 L467.90 346.47 L467.39 344.84 L466.90 343.21 L466.45 341.59 L466.03 339.96 L465.65 338.34 L465.30 336.71 L464.98 335.08 L464.70 333.46 L464.45 331.83 L464.23 330.21 L464.05 328.58 L463.90 326.95 L463.78 325.33 L463.70 323.70 L463.65 322.08 L463.63 320.45 L463.65 318.82 L463.70 317.20 L463.78 315.57 L463.90 313.95 L464.05 312.32 L464.23 310.69 L464.45 309.07 L464.70 307.44 L464.98 305.82 L465.30 304.19 L465.65 302.56 L466.03 300.94 L466.45 299.31 L466.90 297.69 L467.39 296.06 L467.90 294.43 L468.45 292.81 L469.04 291.18 L469.65 289.56 L470.30 287.93 L470.98 286.30 L471.70 284.68 L472.44 283.05 L473.22 281.43 L474.04 279.80 L474.88 278.17 L475.76 276.55 L476.67 274.92 L477.61 273.30 L478.59 271.67 L479.60 270.04 L480.64 268.42 L481.71 266.79 L482.81 265.17 L483.95 263.54 L485.12 261.91 L486.32 260.29 L487.55 258.66 L488.81 257.04 L490.11 255.41 L491.43 253.78 L492.79 252.16 L494.18 250.53 L495.60 248.91 L497.05 247.28 L498.53 245.65 L500.04 244.03 L501.59 242.40 L503.16 240.78 L504.76 239.15 L506.40 237.52 L508.06 235.90 L509.76 234.27 L511.48 232.65 L513.23 231.02 L515.02 229.39 L516.83 227.77 L518.67 226.14 L520.55 224.52 L522.45 222.89 L524.38 221.26 L526.34 219.64 L528.32 218.01 L530.34 216.39 L532.38 214.76 L534.46 213.13 L536.56 211.51 L538.69 209.88 L540.84 208.26 L543.03 206.63 L545.24 205.00 L547.48 203.38 L549.74 201.75 L552.03 200.13 L554.35 198.50 L556.70 196.87 L559.07 195.25 L561.47 193.62 L563.89 192.00 L566.34 190.37 L568.82 188.74 L571.32 187.12 L573.84 185.49 L576.39 183.87 L578.97 182.24 L581.57 180.61 L584.20 178.99 L586.85 177.36 L589.52 175.74 L592.22 174.11 L594.94 172.48 L597.68 170.86 L600.45 169.23 L603.24 167.61 L606.05 165.98 L608.89 164.35 L611.75 162.73 L614.63 161.10 L617.53 159.48 L620.45 157.85 L623.40 156.22 L626.37 154.60 L629.35 152.97 L632.36 151.35 L635.39 149.72 L638.44 148.09 L641.51 146.47 L644.60 144.84 L647.71 143.22 L650.84 141.59 L653.99 139.96 L657.15 138.34 L660.34 136.71 L663.54 135.09 L666.76 133.46 L670.00 131.83 L673.26 130.21 L676.54 128.58 L679.83 126.96 L683.14 125.33 L686.47 123.70 L689.81 122.08 L693.17 120.45 L696.54 118.83 L699.93 117.20 L703.34 115.57 L706.76 113.95 L710.20 112.32 L713.65 110.70 L717.11 109.07 L720.59 107.44 L724.08 105.82 L727.59 104.19 L731.11 102.57 L734.64 100.94 L738.19 99.31 L741.75 97.69 L745.32 96.06 L748.90 94.44 L752.50 92.81 L756.10 91.18 L759.72 89.56 L763.35 87.93 L766.99 86.31 L770.63 84.68 L774.29 83.05 L777.96 81.43 L781.64 79.80 L785.33 78.18 L789.02 76.55 L792.73 74.92 L796.44 73.30 L800.16 71.67 L803.89 70.05 L807.63 68.42 L811.37 66.79 L815.12 65.17 L818.88 63.54 L822.64 61.92 L826.41 60.29 L830.19 58.66 L833.97 57.04 L837.76 55.41 L841.55 53.79 L845.35 52.16 L849.15 50.53 L852.95 48.91 L856.76 47.28 L860.57 45.66 L864.39 44.03 L868.20 42.40 L872.03 40.78 L875.85 39.15 L879.67 37.53 L883.50 35.90 L887.33 34.27 L891.16 32.65 L894.99 31.02 L898.82 29.40 L902.65 27.77 M902.65 613.13 L898.39 611.50 L894.14 609.88 L889.88 608.25 L885.63 606.63 L881.37 605.00 L877.12 603.37 L872.87 601.75 L868.62 600.12 L864.38 598.50 L860.14 596.87 L855.90 595.24 L851.66 593.62 L847.43 591.99 L843.20 590.37 L838.98 588.74 L834.76 587.11 L830.55 585.49 L826.34 583.86 L822.14 582.24 L817.94 580.61 L813.76 578.98 L809.57 577.36 L805.40 575.73 L801.23 574.11 L797.07 572.48 L792.92 570.85 L788.78 569.23 L784.64 567.60 L780.51 565.98 L776.40 564.35 L772.29 562.72 L768.19 561.10 L764.11 559.47 L760.03 557.85 L755.97 556.22 L751.91 554.59 L747.87 552.97 L743.84 551.34 L739.82 549.72 L735.81 548.09 L731.82 546.46 L727.84 544.84 L723.87 543.21 L719.92 541.59 L715.98 539.96 L712.05 538.33 L708.14 536.71 L704.24 535.08 L700.36 533.46 L696.50 531.83 L692.65 530.20 L688.81 528.58 L684.99 526.95 L681.19 525.33 L677.41 523.70 L673.64 522.07 L669.89 520.45 L666.16 518.82 L662.45 517.20 L658.75 515.57 L655.07 513.94 L651.41 512.32 L647.78 510.69 L644.16 509.07 L640.56 507.44 L636.98 505.81 L633.42 504.19 L629.88 502.56 L626.36 500.94 L622.86 499.31 L619.38 497.68 L615.93 496.06 L612.50 494.43 L609.08 492.81 L605.70 491.18 L602.33 489.55 L598.99 487.93 L595.67 486.30 L592.37 484.68 L589.10 483.05 L585.85 481.42 L582.62 479.80 L579.42 478.17 L576.25 476.55 L573.10 474.92 L569.97 473.29 L566.87 471.67 L563.80 470.04 L560.75 468.42 L557.72 466.79 L554.73 465.16 L551.76 463.54 L548.81 461.91 L545.90 460.29 L543.01 458.66 L540.14 457.03 L537.31 455.41 L534.50 453.78 L531.72 452.16 L528.97 450.53 L526.25 448.90 L523.56 447.28 L520.89 445.65 L518.26 444.03 L515.65 442.40 L513.08 440.77 L510.53 439.15 L508.01 437.52 L505.52 435.90 L503.07 434.27 L500.64 432.64 L498.25 431.02 L495.88 429.39 L493.55 427.77 L491.24 426.14 L488.97 424.51 L486.73 422.89 L484.52 421.26 L482.35 419.64 L480.20 418.01 L478.09 416.38 L476.01 414.76 L473.96 413.13 L471.95 411.51 L469.97 409.88 L468.02 408.25 L466.10 406.63 L464.22 405.00 L462.37 403.38 L460.55 401.75 L458.77 400.12 L457.02 398.50 L455.31 396.87 L453.63 395.25 L451.98 393.62 L450.37 391.99 L448.79 390.37 L447.25 388.74 L445.74 387.12 L444.27 385.49 L442.83 383.86 L441.43 382.24 L440.06 380.61 L438.72 378.99 L437.43 377.36 L436.16 375.73 L434.94 374.11 L433.75 372.48 L432.59 370.86 L431.47 369.23 L430.39 367.60 L429.34 365.98 L428.33 364.35 L427.35 362.73 L426.41 361.10 L425.51 359.47 L424.64 357.85 L423.81 356.22 L423.02 354.60 L422.26 352.97 L421.54 351.34 L420.86 349.72 L420.21 348.09 L419.60 346.47 L419.02 344.84 L418.49 343.21 L417.99 341.59 L417.52 339.96 L417.10 338.34 L416.71 336.71 L416.35 335.08 L416.04 333.46 L415.76 331.83 L415.52 330.21 L415.31 328.58 L415.15 326.95 L415.02 325.33 L414.92 323.70 L414.87 322.08 L414.85 320.45 L414.87 318.82 L414.92 317.20 L415.02 315.57 L415.15 313.95 L415.31 312.32 L415.52 310.69 L415.76 309.07 L416.04 307.44 L416.35 305.82 L416.71 304.19 L417.10 302.56 L417.52 300.94 L417.99 299.31 L418.49 297.69 L419.02 296.06 L419.60 294.43 L420.21 292.81 L420.86 291.18 L421.54 289.56 L422.26 287.93 L423.02 286.30 L423.81 284.68 L424.64 283.05 L425.51 281.43 L426.41 279.80 L427.35 278.17 L428.33 276.55 L429.34 274.92 L430.39 273.30 L431.47 271.67 L432.59 270.04 L433.75 268.42 L434.94 266.79 L436.16 265.17 L437.43 263.54 L438.72 261.91 L440.06 260.29 L441.43 258.66 L442.83 257.04 L444.27 255.41 L445.74 253.78 L447.25 252.16 L448.79 250.53 L450.37 248.91 L451.98 247.28 L453.63 245.65 L455.31 244.03 L457.02 242.40 L458.77 240.78 L460.55 239.15 L462.37 237.52 L464.22 235.90 L466.10 234.27 L468.02 232.65 L469.97 231.02 L471.95 229.39 L473.96 227.77 L476.01 226.14 L478.09 224.52 L480.20 222.89 L482.35 221.26 L484.52 219.64 L486.73 218.01 L488.97 216.39 L491.24 214.76 L493.55 213.13 L495.88 211.51 L498.25 209.88 L500.64 208.26 L503.07 206.63 L505.52 205.00 L508.01 203.38 L510.53 201.75 L513.08 200.13 L515.65 198.50 L518.26 196.87 L520.89 195.25 L523.56 193.62 L526.25 192.00 L528.97 190.37 L531.72 188.74 L534.50 187.12 L537.31 185.49 L540.14 183.87 L543.01 182.24 L545.90 180.61 L548.81 178.99 L551.76 177.36 L554.73 175.74 L557.72 174.11 L560.75 172.48 L563.80 170.86 L566.87 169.23 L569.97 167.61 L573.10 165.98 L576.25 164.35 L579.42 162.73 L582.62 161.10 L585.85 159.48 L589.10 157.85 L592.37 156.22 L595.67 154.60 L598.99 152.97 L602.33 151.35 L605.70 149.72 L609.08 148.09 L612.50 146.47 L615.93 144.84 L619.38 143.22 L622.86 141.59 L626.36 139.96 L629.88 138.34 L633.42 136.71 L636.98 135.09 L640.56 133.46 L644.16 131.83 L647.78 130.21 L651.41 128.58 L655.07 126.96 L658.75 125.33 L662.45 123.70 L666.16 122.08 L669.89 120.45 L673.64 118.83 L677.41 117.20 L681.19 115.57 L684.99 113.95 L688.81 112.32 L692.65 110.70 L696.50 109.07 L700.36 107.44 L704.24 105.82 L708.14 104.19 L712.05 102.57 L715.98 100.94 L719.92 99.31 L723.87 97.69 L727.84 96.06 L731.82 94.44 L735.81 92.81 L739.82 91.18 L743.84 89.56 L747.87 87.93 L751.91 86.31 L755.97 84.68 L760.03 83.05 L764.11 81.43 L768.19 79.80 L772.29 78.18 L776.40 76.55 L780.51 74.92 L784.64 73.30 L788.78 71.67 L792.92 70.05 L797.07 68.42 L801.23 66.79 L805.40 65.17 L809.57 63.54 L813.76 61.92 L817.94 60.29 L822.14 58.66 L826.34 57.04 L830.55 55.41 L834.76 53.79 L838.98 52.16 L843.20 50.53 L847.43 48.91 L851.66 47.28 L855.90 45.66 L860.14 44.03 L864.38 42.40 L868.62 40.78 L872.87 39.15 L877.12 37.53 L881.37 35.90 L885.63 34.27 L889.88 32.65 L894.14 31.02 L898.39 29.40 L902.65 27.77 M902.65 613.13 L897.97 611.50 L893.29 609.88 L888.60 608.25 L883.92 606.63 L879.24 605.00 L874.57 603.37 L869.89 601.75 L865.22 600.12 L860.55 598.50 L855.88 596.87 L851.22 595.24 L846.56 593.62 L841.91 591.99 L837.26 590.37 L832.61 588.74 L827.97 587.11 L823.34 585.49 L818.71 583.86 L814.09 582.24 L809.47 580.61 L804.87 578.98 L800.27 577.36 L795.67 575.73 L791.09 574.11 L786.51 572.48 L781.95 570.85 L777.39 569.23 L772.84 567.60 L768.30 565.98 L763.77 564.35 L759.26 562.72 L754.75 561.10 L750.25 559.47 L745.77 557.85 L741.30 556.22 L736.84 554.59 L732.39 552.97 L727.96 551.34 L723.54 549.72 L719.13 548.09 L714.74 546.46 L710.36 544.84 L705.99 543.21 L701.64 541.59 L697.31 539.96 L692.99 538.33 L688.69 536.71 L684.40 535.08 L680.13 533.46 L675.88 531.83 L671.65 530.20 L667.43 528.58 L663.23 526.95 L659.05 525.33 L654.88 523.70 L650.74 522.07 L646.62 520.45 L642.51 518.82 L638.43 517.20 L634.36 515.57 L630.32 513.94 L626.29 512.32 L622.29 510.69 L618.31 509.07 L614.35 507.44 L610.41 505.81 L606.49 504.19 L602.60 502.56 L598.73 500.94 L594.88 499.31 L591.06 497.68 L587.26 496.06 L583.48 494.43 L579.73 492.81 L576.00 491.18 L572.30 489.55 L568.62 487.93 L564.97 486.30 L561.34 484.68 L557.74 483.05 L554.17 481.42 L550.62 479.80 L547.10 478.17 L543.61 476.55 L540.14 474.92 L536.70 473.29 L533.29 471.67 L529.91 470.04 L526.56 468.42 L523.23 466.79 L519.93 465.16 L516.67 463.54 L513.43 461.91 L510.22 460.29 L507.04 458.66 L503.89 457.03 L500.78 455.41 L497.69 453.78 L494.63 452.16 L491.61 450.53 L488.61 448.90 L485.65 447.28 L482.72 445.65 L479.82 444.03 L476.95 442.40 L474.12 440.77 L471.32 439.15 L468.55 437.52 L465.81 435.90 L463.11 434.27 L460.44 432.64 L457.81 431.02 L455.20 429.39 L452.64 427.77 L450.10 426.14 L447.60 424.51 L445.14 422.89 L442.71 421.26 L440.32 419.64 L437.96 418.01 L435.63 416.38 L433.35 414.76 L431.09 413.13 L428.88 411.51 L426.70 409.88 L424.55 408.25 L422.45 406.63 L420.38 405.00 L418.34 403.38 L416.34 401.75 L414.38 400.12 L412.46 398.50 L410.57 396.87 L408.73 395.25 L406.91 393.62 L405.14 391.99 L403.41 390.37 L401.71 388.74 L400.05 387.12 L398.43 385.49 L396.85 383.86 L395.30 382.24 L393.80 380.61 L392.33 378.99 L390.90 377.36 L389.52 375.73 L388.17 374.11 L386.86 372.48 L385.59 370.86 L384.35 369.23 L383.16 367.60 L382.01 365.98 L380.90 364.35 L379.82 362.73 L378.79 361.10 L377.80 359.47 L376.84 357.85 L375.93 356.22 L375.06 354.60 L374.22 352.97 L373.43 351.34 L372.68 349.72 L371.96 348.09 L371.29 346.47 L370.66 344.84 L370.07 343.21 L369.52 341.59 L369.01 339.96 L368.54 338.34 L368.11 336.71 L367.72 335.08 L367.38 333.46 L367.07 331.83 L366.81 330.21 L366.58 328.58 L366.40 326.95 L366.25 325.33 L366.15 323.70 L366.09 322.08 L366.07 320.45 L366.09 318.82 L366.15 317.20 L366.25 315.57 L366.40 313.95 L366.58 312.32 L366.81 310.69 L367.07 309.07 L367.38 307.44 L367.72 305.82 L368.11 304.19 L368.54 302.56 L369.01 300.94 L369.52 299.31 L370.07 297.69 L370.66 296.06 L371.29 294.43 L371.96 292.81 L372.68 291.18 L373.43 289.56 L374.22 287.93 L375.06 286.30 L375.93 284.68 L376.84 283.05 L377.80 281.43 L378.79 279.80 L379.82 278.17 L380.90 276.55 L382.01 274.92 L383.16 273.30 L384.35 271.67 L385.59 270.04 L386.86 268.42 L388.17 266.79 L389.52 265.17 L390.90 263.54 L392.33 261.91 L393.80 260.29 L395.30 258.66 L396.85 257.04 L398.43 255.41 L400.05 253.78 L401.71 252.16 L403.41 250.53 L405.14 248.91 L406.91 247.28 L408.73 245.65 L410.57 244.03 L412.46 242.40 L414.38 240.78 L416.34 239.15 L418.34 237.52 L420.38 235.90 L422.45 234.27 L424.55 232.65 L426.70 231.02 L428.88 229.39 L431.09 227.77 L433.35 226.14 L435.63 224.52 L437.96 222.89 L440.32 221.26 L442.71 219.64 L445.14 218.01 L447.60 216.39 L450.10 214.76 L452.64 213.13 L455.20 211.51 L457.81 209.88 L460.44 208.26 L463.11 206.63 L465.81 205.00 L468.55 203.38 L471.32 201.75 L474.12 200.13 L476.95 198.50 L479.82 196.87 L482.72 195.25 L485.65 193.62 L488.61 192.00 L491.61 190.37 L494.63 188.74 L497.69 187.12 L500.78 185.49 L503.89 183.87 L507.04 182.24 L510.22 180.61 L513.43 178.99 L516.67 177.36 L519.93 175.74 L523.23 174.11 L526.56 172.48 L529.91 170.86 L533.29 169.23 L536.70 167.61 L540.14 165.98 L543.61 164.35 L547.10 162.73 L550.62 161.10 L554.17 159.48 L557.74 157.85 L561.34 156.22 L564.97 154.60 L568.62 152.97 L572.30 151.35 L576.00 149.72 L579.73 148.09 L583.48 146.47 L587.26 144.84 L591.06 143.22 L594.88 141.59 L598.73 139.96 L602.60 138.34 L606.49 136.71 L610.41 135.09 L614.35 133.46 L618.31 131.83 L622.29 130.21 L626.29 128.58 L630.32 126.96 L634.36 125.33 L638.43 123.70 L642.51 122.08 L646.62 120.45 L650.74 118.83 L654.88 117.20 L659.05 115.57 L663.23 113.95 L667.43 112.32 L671.65 110.70 L675.88 109.07 L680.13 107.44 L684.40 105.82 L688.69 104.19 L692.99 102.57 L697.31 100.94 L701.64 99.31 L705.99 97.69 L710.36 96.06 L714.74 94.44 L719.13 92.81 L723.54 91.18 L727.96 89.56 L732.39 87.93 L736.84 86.31 L741.30 84.68 L745.77 83.05 L750.25 81.43 L754.75 79.80 L759.26 78.18 L763.77 76.55 L768.30 74.92 L772.84 73.30 L777.39 71.67 L781.95 70.05 L786.51 68.42 L791.09 66.79 L795.67 65.17 L800.27 63.54 L804.87 61.92 L809.47 60.29 L814.09 58.66 L818.71 57.04 L823.34 55.41 L827.97 53.79 L832.61 52.16 L837.26 50.53 L841.91 48.91 L846.56 47.28 L851.22 45.66 L855.88 44.03 L860.55 42.40 L865.22 40.78 L869.89 39.15 L874.57 37.53 L879.24 35.90 L883.92 34.27 L888.60 32.65 L893.29 31.02 L897.97 29.40 L902.65 27.77 M902.65 613.13 L897.54 611.50 L892.43 609.88 L887.33 608.25 L882.22 606.63 L877.12 605.00 L872.01 603.37 L866.91 601.75 L861.82 600.12 L856.72 598.50 L851.63 596.87 L846.55 595.24 L841.46 593.62 L836.39 591.99 L831.31 590.37 L826.25 588.74 L821.18 587.11 L816.13 585.49 L811.08 583.86 L806.04 582.24 L801.00 580.61 L795.98 578.98 L790.96 577.36 L785.95 575.73 L780.95 574.11 L775.95 572.48 L770.97 570.85 L766.00 569.23 L761.04 567.60 L756.09 565.98 L751.15 564.35 L746.22 562.72 L741.30 561.10 L736.40 559.47 L731.51 557.85 L726.63 556.22 L721.76 554.59 L716.91 552.97 L712.08 551.34 L707.25 549.72 L702.45 548.09 L697.65 546.46 L692.88 544.84 L688.11 543.21 L683.37 541.59 L678.64 539.96 L673.93 538.33 L669.24 536.71 L664.56 535.08 L659.91 533.46 L655.27 531.83 L650.65 530.20 L646.05 528.58 L641.46 526.95 L636.90 525.33 L632.36 523.70 L627.84 522.07 L623.34 520.45 L618.86 518.82 L614.40 517.20 L609.97 515.57 L605.56 513.94 L601.17 512.32 L596.80 510.69 L592.46 509.07 L588.14 507.44 L583.84 505.81 L579.57 504.19 L575.32 502.56 L571.10 500.94 L566.90 499.31 L562.73 497.68 L558.58 496.06 L554.46 494.43 L550.37 492.81 L546.31 491.18 L542.27 489.55 L538.25 487.93 L534.27 486.30 L530.32 484.68 L526.39 483.05 L522.49 481.42 L518.62 479.80 L514.78 478.17 L510.97 476.55 L507.19 474.92 L503.44 473.29 L499.71 471.67 L496.02 470.04 L492.37 468.42 L488.74 466.79 L485.14 465.16 L481.58 463.54 L478.04 461.91 L474.54 460.29 L471.08 458.66 L467.64 457.03 L464.24 455.41 L460.87 453.78 L457.54 452.16 L454.24 450.53 L450.97 448.90 L447.74 447.28 L444.54 445.65 L441.38 444.03 L438.25 442.40 L435.16 440.77 L432.10 439.15 L429.08 437.52 L426.10 435.90 L423.15 434.27 L420.24 432.64 L417.36 431.02 L414.53 429.39 L411.73 427.77 L408.96 426.14 L406.24 424.51 L403.55 422.89 L400.90 421.26 L398.29 419.64 L395.71 418.01 L393.18 416.38 L390.68 414.76 L388.23 413.13 L385.81 411.51 L383.43 409.88 L381.09 408.25 L378.79 406.63 L376.53 405.00 L374.31 403.38 L372.13 401.75 L370.00 400.12 L367.90 398.50 L365.84 396.87 L363.82 395.25 L361.85 393.62 L359.91 391.99 L358.02 390.37 L356.17 388.74 L354.36 387.12 L352.59 385.49 L350.87 383.86 L349.18 382.24 L347.54 380.61 L345.94 378.99 L344.38 377.36 L342.87 375.73 L341.40 374.11 L339.97 372.48 L338.58 370.86 L337.24 369.23 L335.94 367.60 L334.68 365.98 L333.46 364.35 L332.29 362.73 L331.17 361.10 L330.08 359.47 L329.04 357.85 L328.04 356.22 L327.09 354.60 L326.18 352.97 L325.32 351.34 L324.50 349.72 L323.72 348.09 L322.99 346.47 L322.30 344.84 L321.65 343.21 L321.05 341.59 L320.50 339.96 L319.98 338.34 L319.52 336.71 L319.09 335.08 L318.72 333.46 L318.38 331.83 L318.09 330.21 L317.85 328.58 L317.65 326.95 L317.49 325.33 L317.38 323.70 L317.31 322.08 L317.29 320.45 L317.31 318.82 L317.38 317.20 L317.49 315.57 L317.65 313.95 L317.85 312.32 L318.09 310.69 L318.38 309.07 L318.72 307.44 L319.09 305.82 L319.52 304.19 L319.98 302.56 L320.50 300.94 L321.05 299.31 L321.65 297.69 L322.30 296.06 L322.99 294.43 L323.72 292.81 L324.50 291.18 L325.32 289.56 L326.18 287.93 L327.09 286.30 L328.04 284.68 L329.04 283.05 L330.08 281.43 L331.17 279.80 L332.29 278.17 L333.46 276.55 L334.68 274.92 L335.94 273.30 L337.24 271.67 L338.58 270.04 L339.97 268.42 L341.40 266.79 L342.87 265.17 L344.38 263.54 L345.94 261.91 L347.54 260.29 L349.18 258.66 L350.87 257.04 L352.59 255.41 L354.36 253.78 L356.17 252.16 L358.02 250.53 L359.91 248.91 L361.85 247.28 L363.82 245.65 L365.84 244.03 L367.90 242.40 L370.00 240.78 L372.13 239.15 L374.31 237.52 L376.53 235.90 L378.79 234.27 L381.09 232.65 L383.43 231.02 L385.81 229.39 L388.23 227.77 L390.68 226.14 L393.18 224.52 L395.71 222.89 L398.29 221.26 L400.90 219.64 L403.55 218.01 L406.24 216.39 L408.96 214.76 L411.73 213.13 L414.53 211.51 L417.36 209.88 L420.24 208.26 L423.15 206.63 L426.10 205.00 L429.08 203.38 L432.10 201.75 L435.16 200.13 L438.25 198.50 L441.38 196.87 L444.54 195.25 L447.74 193.62 L450.97 192.00 L454.24 190.37 L457.54 188.74 L460.87 187.12 L464.24 185.49 L467.64 183.87 L471.08 182.24 L474.54 180.61 L478.04 178.99 L481.58 177.36 L485.14 175.74 L488.74 174.11 L492.37 172.48 L496.02 170.86 L499.71 169.23 L503.44 167.61 L507.19 165.98 L510.97 164.35 L514.78 162.73 L518.62 161.10 L522.49 159.48 L526.39 157.85 L530.32 156.22 L534.27 154.60 L538.25 152.97 L542.27 151.35 L546.31 149.72 L550.37 148.09 L554.46 146.47 L558.58 144.84 L562.73 143.22 L566.90 141.59 L571.10 139.96 L575.32 138.34 L579.57 136.71 L583.84 135.09 L588.14 133.46 L592.46 131.83 L596.80 130.21 L601.17 128.58 L605.56 126.96 L609.97 125.33 L614.40 123.70 L618.86 122.08 L623.34 120.45 L627.84 118.83 L632.36 117.20 L636.90 115.57 L641.46 113.95 L646.05 112.32 L650.65 110.70 L655.27 109.07 L659.91 107.44 L664.56 105.82 L669.24 104.19 L673.93 102.57 L678.64 100.94 L683.37 99.31 L688.11 97.69 L692.88 96.06 L697.65 94.44 L702.45 92.81 L707.25 91.18 L712.08 89.56 L716.91 87.93 L721.76 86.31 L726.63 84.68 L731.51 83.05 L736.40 81.43 L741.30 79.80 L746.22 78.18 L751.15 76.55 L756.09 74.92 L761.04 73.30 L766.00 71.67 L770.97 70.05 L775.95 68.42 L780.95 66.79 L785.95 65.17 L790.96 63.54 L795.98 61.92 L801.00 60.29 L806.04 58.66 L811.08 57.04 L816.13 55.41 L821.18 53.79 L826.25 52.16 L831.31 50.53 L836.39 48.91 L841.46 47.28 L846.55 45.66 L851.63 44.03 L856.72 42.40 L861.82 40.78 L866.91 39.15 L872.01 37.53 L877.12 35.90 L882.22 34.27 L887.33 32.65 L892.43 31.02 L897.54 29.40 L902.65 27.77"/>
<path stroke="#747474" stroke-width="2.083" stroke-dasharray="2.083 3.437" fill="none" d="M751.15 564.35L1054.15 564.35 M609.97 515.57L1195.33 515.57 M488.74 466.79L1316.56 466.79 M395.71 418.01L1409.59 418.01 M337.24 369.23L1468.06 369.23 M317.29 320.45L1488.01 320.45 M337.24 271.67L1468.06 271.67 M395.71 222.89L1409.59 222.89 M488.74 174.11L1316.56 174.11 M609.97 125.33L1195.33 125.33 M751.15 76.55L1054.15 76.55"/>
<text x="300.55" y="330.20" fill="#8a8a8a" font-size="11">+180</text>
<text x="329.22" y="326.60" fill="#8a8a8a" font-size="7">°</text>
<text x="398.40" y="330.20" fill="#8a8a8a" font-size="11">+150</text>
<text x="427.08" y="326.60" fill="#8a8a8a" font-size="7">°</text>
<text x="496.25" y="330.20" fill="#8a8a8a" font-size="11">+120</text>
<text x="524.93" y="326.60" fill="#8a8a8a" font-size="7">°</text>
<text x="597.16" y="330.20" fill="#8a8a8a" font-size="11">+90</text>
<text x="619.72" y="326.60" fill="#8a8a8a" font-size="7">°</text>
<text x="695.02" y="330.20" fill="#8a8a8a" font-size="11">+60</text>
<text x="717.57" y="326.60" fill="#8a8a8a" font-size="7">°</text>
<text x="792.87" y="330.20" fill="#8a8a8a" font-size="11">+30</text>
<text x="815.43" y="326.60" fill="#8a8a8a" font-size="7">°</text>
<text x="893.78" y="330.20" fill="#8a8a8a" font-size="11">+0</text>
<text x="910.22" y="326.60" fill="#8a8a8a" font-size="7">°</text>
<text x="985.51" y="330.20" fill="#8a8a8a" font-size="11">+330</text>
<text x="1014.19" y="326.60" fill="#8a8a8a" font-size="7">°</text>
<text x="1083.37" y="330.20" fill="#8a8a8a" font-size="11">+300</text>
<text x="1112.04" y="326.60" fill="#8a8a8a" font-size="7">°</text>
<text x="1181.22" y="330.20" fill="#8a8a8a" font-size="11">+270</text>
<text x="1209.90" y="326.60" fill="#8a8a8a" font-size="7">°</text>
<text x="1279.07" y="330.20" fill="#8a8a8a" font-size="11">+240</text>
<text x="1307.75" y="326.60" fill="#8a8a8a" font-size="7">°</text>
<text x="1376.92" y="330.20" fill="#8a8a8a" font-size="11">+210</text>
<text x="1405.60" y="326.60" fill="#8a8a8a" font-size="7">°</text>
<text x="1474.78" y="330.20" fill="#8a8a8a" font-size="11">+180</text>
<text x="1503.45" y="326.60" fill="#8a8a8a" font-size="7">°</text>
<text x="890.77" y="25.10" fill="#8a8a8a" font-size="11">+90</text>
<text x="913.33" y="21.50" fill="#8a8a8a" font-size="7">°</text>
<text x="890.77" y="122.90" fill="#8a8a8a" font-size="11">+60</text>
<text x="913.33" y="119.30" fill="#8a8a8a" font-size="7">°</text>
<text x="890.77" y="220.90" fill="#8a8a8a" font-size="11">+30</text>
<text x="913.33" y="217.30" fill="#8a8a8a" font-size="7">°</text>
<text x="890.77" y="427.90" fill="#8a8a8a" font-size="11">−30</text>
<text x="913.33" y="424.30" fill="#8a8a8a" font-size="7">°</text>
<text x="890.77" y="525.80" fill="#8a8a8a" font-size="11">−60</text>
<text x="913.33" y="522.20" fill="#8a8a8a" font-size="7">°</text>
<text x="890.77" y="624.00" fill="#8a8a8a" font-size="11">−90</text>
<text x="913.33" y="620.40" fill="#8a8a8a" font-size="7">°</text>
<path stroke="#505050" stroke-width="1" stroke-dasharray="1 1.8" fill="none" d="M677.4 205.6 C682.0 198.6 696.1 174.3 704.9 163.4 C713.7 152.5 721.6 148.4 730.0 140.0 C738.4 131.6 746.3 121.5 755.5 112.7 C764.7 103.9 775.1 95.9 785.0 87.4 C794.9 79.0 809.7 66.2 814.6 62.0"/>
<path stroke="#505050" stroke-width="1" stroke-dasharray="1 1.8" fill="none" d="M721.7 247.8 C728.0 241.1 747.0 220.0 759.7 207.7 C772.4 195.4 786.0 183.2 797.7 174.0 C809.4 164.8 817.5 160.6 830.0 152.8 C842.5 145.0 861.3 133.3 873.0 127.0 C884.7 120.7 890.3 117.7 900.0 115.0 C909.7 112.3 921.0 110.7 931.0 111.0 C941.0 111.3 949.2 113.8 960.0 116.7 C970.8 119.6 980.8 121.7 995.6 128.2 C1010.4 134.7 1034.2 148.0 1048.9 155.8 C1063.6 163.6 1072.8 168.6 1084.0 175.0 C1095.2 181.4 1110.7 190.8 1116.0 194.0"/>
<path stroke="#505050" stroke-width="1" stroke-dasharray="1 1.8" fill="none" d="M1003.0 115.0 C1002.0 116.4 1002.3 112.3 996.7 123.2 C991.1 134.1 977.7 160.9 969.2 180.2 C960.8 199.5 951.7 224.3 946.0 239.2 C940.3 254.1 940.5 256.9 935.1 269.8 C929.7 282.8 920.1 301.6 913.8 316.9 C907.5 332.2 904.4 344.3 897.5 361.6 C890.6 378.9 880.6 403.1 872.2 420.7 C863.8 438.3 851.1 459.3 846.9 467.0"/>
<path stroke="#505050" stroke-width="1" stroke-dasharray="1 1.8" fill="none" d="M1040.0 84.0 C1044.5 86.5 1058.2 93.5 1067.0 99.0 C1075.8 104.5 1081.2 108.4 1093.0 116.7 C1104.8 125.0 1124.5 138.3 1137.8 148.7 C1151.1 159.1 1162.0 168.5 1173.0 178.9 C1184.0 189.3 1198.5 205.6 1203.6 210.9"/>
<path stroke="#7e7e7e" stroke-width="1.4" fill="none" d="M1001.0 118.6 C1001.7 118.0 1003.5 115.9 1005.0 115.0 C1006.5 114.1 1009.2 113.3 1010.0 113.0"/>
<path stroke="#7e7e7e" stroke-width="1.4" fill="none" d="M1116.5 194.0 C1117.1 194.5 1119.4 196.3 1120.0 196.8"/>
<path stroke="#7e7e7e" stroke-width="1.4" fill="none" d="M1205.0 213.0 C1206.5 214.7 1211.2 219.2 1214.0 223.0 C1216.8 226.8 1220.7 233.6 1222.0 235.7"/>
<path stroke="#36a853" stroke-width="1.6" stroke-dasharray="1.6 2.1" fill="none" d="M803.5 292.6 C807.9 289.4 821.4 278.9 830.0 273.5 C838.6 268.1 843.2 265.9 855.0 260.0 C866.8 254.1 886.2 244.2 901.0 238.0 C915.8 231.8 930.2 227.3 944.0 223.0 C957.8 218.7 970.3 214.5 984.0 212.0 C997.7 209.5 1015.3 208.6 1026.0 208.0 C1036.7 207.4 1040.2 208.0 1048.0 208.6 C1055.8 209.2 1068.8 211.0 1073.0 211.5"/>
<path stroke="#4cc06a" stroke-width="1.8" fill="none" d="M1073 211 L1085.5 213.8"/>
<circle cx="1085.5" cy="213.8" r="1.1" fill="#ff7f50"/>
<circle cx="796.9" cy="286.4" r="24.6" stroke="#4cc06a" stroke-width="2" fill="none"/>
<text x="797" y="289.8" fill="#fff" font-size="10.5" text-anchor="middle">STA</text>
<path stroke="#ff0000" stroke-width="1.35" d="M798.3 294.5H804.7M801.5 291.3V297.7"/>
<text transform="translate(149.0 641.0) rotate(-90)" text-anchor="end" fill="#505050" font-size="30" textLength="55.90" lengthAdjust="spacingAndGlyphs">APR</text>
<text transform="translate(294.7 643.7) rotate(-90)" text-anchor="end" fill="#505050" font-size="30" textLength="58.00" lengthAdjust="spacingAndGlyphs">MAY</text>
<text transform="translate(435.0 641.0) rotate(-90)" text-anchor="end" fill="#505050" font-size="30" textLength="50.90" lengthAdjust="spacingAndGlyphs">JUN</text>
<text transform="translate(576.3 641.0) rotate(-90)" text-anchor="end" fill="#505050" font-size="30" textLength="45.90" lengthAdjust="spacingAndGlyphs">JUL</text>
<text transform="translate(724.0 641.0) rotate(-90)" text-anchor="end" fill="#505050" font-size="30" textLength="59.10" lengthAdjust="spacingAndGlyphs">AUG</text>
<text transform="translate(871.7 643.0) rotate(-90)" text-anchor="end" fill="#505050" font-size="30" textLength="51.00" lengthAdjust="spacingAndGlyphs">SEP</text>
<text transform="translate(1016.7 642.8) rotate(-90)" text-anchor="end" fill="#505050" font-size="30" textLength="57.50" lengthAdjust="spacingAndGlyphs">OCT</text>
<text transform="translate(1170.0 644.2) rotate(-90)" text-anchor="end" fill="#505050" font-size="30" textLength="60.90" lengthAdjust="spacingAndGlyphs">NOV</text>
<text transform="translate(1319.0 643.7) rotate(-90)" text-anchor="end" fill="#505050" font-size="30" textLength="58.00" lengthAdjust="spacingAndGlyphs">DEC</text>
<text transform="translate(1468.3 641.0) rotate(-90)" text-anchor="end" fill="#505050" font-size="30" textLength="47.00" lengthAdjust="spacingAndGlyphs">JAN</text>
<text transform="translate(1628.0 644.3) rotate(-90)" text-anchor="end" fill="#505050" font-size="30" textLength="52.20" lengthAdjust="spacingAndGlyphs">FEB</text>
<text transform="translate(1765.7 644.3) rotate(-90)" text-anchor="end" fill="#505050" font-size="30" textLength="61.10" lengthAdjust="spacingAndGlyphs">MAR</text>
<path stroke="#bddf26" stroke-width="4" fill="none" d="M106.00 833.80H130.00 M165.00 833.80H345.00 M365.00 833.80H625.00 M636.00 833.80H787.00 M807.00 833.80H900.00 M920.00 833.80H973.00 M984.00 833.80H1065.75 M1082.00 833.80H1204.00 M1244.00 833.80H1325.75 M1337.00 833.80H1356.00 M1381.00 833.80H1444.00 M1459.00 833.80H1512.00 M1523.00 833.80H1547.00 M1724.00 833.80H1748.00 M1758.00 833.80H1782.00"/>
<path stroke="#81d34d" stroke-width="4" fill="none" d="M165.00 817.47H189.00 M224.00 817.47H287.00 M312.00 817.47H341.00 M365.00 817.47H493.00 M508.00 817.47H654.00 M704.00 817.47H738.00 M773.00 817.47H846.00 M871.00 817.47H988.00 M1003.00 817.47H1017.00 M1062.00 817.47H1213.00 M1244.00 817.47H1267.00 M1293.00 817.47H1316.00 M1342.00 817.47H1365.00 M1386.00 817.47H1429.00 M1459.00 817.47H1483.00 M1548.00 817.47H1571.00"/>
<path stroke="#4ec36b" stroke-width="4" fill="none" d="M165.00 801.14H189.00 M258.00 801.14H488.00 M508.00 801.14H615.00 M626.00 801.14H718.00 M729.00 801.14H826.00 M949.00 801.14H1150.00 M1160.00 801.14H1248.00 M1258.00 801.14H1444.00 M1459.00 801.14H1483.00 M1553.00 801.14H1576.00"/>
<path stroke="#2ab07f" stroke-width="4" fill="none" d="M194.00 784.81H218.00 M322.00 784.81H507.00 M518.00 784.81H542.00 M557.00 784.81H684.00 M807.00 784.81H831.00 M954.00 784.81H973.00 M989.00 784.81H1125.00 M1155.00 784.81H1218.00 M1244.00 784.81H1267.00 M1317.00 784.81H1341.00 M1396.00 784.81H1419.00 M1464.00 784.81H1650.00"/>
<path stroke="#1e9b8a" stroke-width="4" fill="none" d="M341.00 768.48H370.00 M410.00 768.48H448.00 M469.00 768.48H493.00 M528.00 768.48H546.00 M562.00 768.48H591.00 M616.00 768.48H649.00 M959.00 768.48H988.00 M1062.00 768.48H1085.75 M1101.00 768.48H1125.00 M1160.00 768.48H1194.00 M1249.00 768.48H1272.00 M1425.00 768.48H1512.00"/>
<path stroke="#25858e" stroke-width="4" fill="none" d="M420.00 752.15H444.00 M533.00 752.15H556.00 M567.00 752.15H591.00 M621.00 752.15H743.00 M969.00 752.15H1135.00 M1185.00 752.15H1346.00 M1469.00 752.15H1493.00"/>
<path stroke="#2d708e" stroke-width="4" fill="none" d="M430.00 735.82H453.00 M577.00 735.82H733.00 M994.00 735.82H1105.00 M1116.00 735.82H1223.00 M1263.00 735.82H1292.00 M1489.00 735.82H1512.00"/>
<path stroke="#375a8c" stroke-width="4" fill="none" d="M592.00 719.49H615.00 M655.00 719.49H772.00 M1072.00 719.49H1243.00 M1263.00 719.49H1287.00"/>
<path stroke="#424086" stroke-width="4" fill="none" d="M596.00 703.16H733.00 M1092.00 703.16H1120.00 M1200.00 703.16H1223.00 M1273.00 703.16H1325.75"/>
<path stroke="#482475" stroke-width="4" fill="none" d="M1111.00 686.83H1135.00"/>
<path stroke="#ffffff" stroke-opacity="0.36" stroke-width="2" stroke-dasharray="2 3.5" fill="none" d="M75.00 643.00V842.45 M219.00 643.00V842.45 M365.00 643.00V842.45 M506.00 643.00V842.45 M651.00 643.00V842.45 M797.00 643.00V842.45 M940.00 643.00V842.45 M1090.70 643.00V842.45 M1239.00 643.00V842.45 M1394.00 643.00V842.45 M1547.70 643.00V842.45 M1687.30 643.00V842.45"/>
<path stroke="#fff" stroke-width="2" fill="none" d="M113.60 833.80h8M117.60 829.80v8 M241.00 833.80h8M245.00 829.80v8 M511.00 833.80h8M515.00 829.80v8 M707.00 833.80h8M711.00 829.80v8 M833.80 833.80h8M837.80 829.80v8 M961.75 833.80h8M965.75 829.80v8 M986.75 833.80h8M990.75 829.80v8 M1116.75 833.80h8M1120.75 829.80v8 M1296.00 833.80h8M1300.00 829.80v8 M1342.00 833.80h8M1346.00 829.80v8 M1413.00 833.80h8M1417.00 829.80v8 M1482.00 833.80h8M1486.00 829.80v8 M1530.50 833.80h8M1534.50 829.80v8 M1732.00 833.80h8M1736.00 829.80v8 M1765.50 833.80h8M1769.50 829.80v8"/>
<text x="117.20" y="831.50" fill="#fff" font-size="10" text-anchor="middle">KSE</text>
<text x="255.00" y="831.50" fill="#fff" font-size="10" text-anchor="middle">ETA</text>
<text x="495.50" y="831.50" fill="#fff" font-size="10" text-anchor="middle">NZC</text>
<text x="711.00" y="831.50" fill="#fff" font-size="10" text-anchor="middle">NDA</text>
<text x="854.00" y="831.50" fill="#fff" font-size="10" text-anchor="middle">SPE</text>
<text x="946.00" y="831.50" fill="#fff" font-size="10" text-anchor="middle">ARD</text>
<text x="1024.50" y="831.50" fill="#fff" font-size="10" text-anchor="middle">EGE</text>
<text x="1142.00" y="831.50" fill="#fff" font-size="10" text-anchor="middle">NTA</text>
<text x="1284.50" y="831.50" fill="#fff" font-size="10" text-anchor="middle">MON</text>
<text x="1343.50" y="831.50" fill="#fff" font-size="10" text-anchor="middle">URS</text>
<text x="1412.00" y="831.50" fill="#fff" font-size="10" text-anchor="middle">AHY</text>
<text x="1485.00" y="831.50" fill="#fff" font-size="10" text-anchor="middle">GUM</text>
<text x="1535.00" y="831.50" fill="#fff" font-size="10" text-anchor="middle">OHY</text>
<text x="1736.00" y="831.50" fill="#fff" font-size="10" text-anchor="middle">XHE</text>
<text x="1769.50" y="831.50" fill="#fff" font-size="10" text-anchor="middle">EVI</text>
<path stroke="#fff" stroke-width="2" fill="none" d="M173.00 817.47h8M177.00 813.47v8 M256.00 817.47h8M260.00 813.47v8 M324.00 817.47h8M328.00 813.47v8 M437.60 817.47h8M441.60 813.47v8 M599.00 817.47h8M603.00 813.47v8 M716.50 817.47h8M720.50 813.47v8 M794.00 817.47h8M798.00 813.47v8 M939.80 817.47h8M943.80 813.47v8 M1005.50 817.47h8M1009.50 813.47v8 M1152.75 817.47h8M1156.75 813.47v8 M1251.00 817.47h8M1255.00 813.47v8 M1299.75 817.47h8M1303.75 813.47v8 M1350.00 817.47h8M1354.00 813.47v8 M1402.70 817.47h8M1406.70 813.47v8 M1467.00 817.47h8M1471.00 813.47v8 M1554.70 817.47h8M1558.70 813.47v8"/>
<text x="176.30" y="815.17" fill="#fff" font-size="10" text-anchor="middle">AVB</text>
<text x="255.00" y="815.17" fill="#fff" font-size="10" text-anchor="middle">ELY</text>
<text x="324.00" y="815.17" fill="#fff" font-size="10" text-anchor="middle">CAM</text>
<text x="432.00" y="815.17" fill="#fff" font-size="10" text-anchor="middle">SSG</text>
<text x="578.50" y="815.17" fill="#fff" font-size="10" text-anchor="middle">PCA</text>
<text x="720.50" y="815.17" fill="#fff" font-size="10" text-anchor="middle">AUD</text>
<text x="809.20" y="815.17" fill="#fff" font-size="10" text-anchor="middle">AUR</text>
<text x="931.00" y="815.17" fill="#fff" font-size="10" text-anchor="middle">DSX</text>
<text x="1010.50" y="815.17" fill="#fff" font-size="10" text-anchor="middle">OCU</text>
<text x="1138.00" y="815.17" fill="#fff" font-size="10" text-anchor="middle">OER</text>
<text x="1255.00" y="815.17" fill="#fff" font-size="10" text-anchor="middle">DKD</text>
<text x="1304.00" y="815.17" fill="#fff" font-size="10" text-anchor="middle">DSV</text>
<text x="1353.00" y="815.17" fill="#fff" font-size="10" text-anchor="middle">ALY</text>
<text x="1407.00" y="815.17" fill="#fff" font-size="10" text-anchor="middle">ILE</text>
<text x="1472.00" y="815.17" fill="#fff" font-size="10" text-anchor="middle">SCC</text>
<text x="1558.70" y="815.17" fill="#fff" font-size="10" text-anchor="middle">FEV</text>
<path stroke="#fff" stroke-width="2" fill="none" d="M175.00 801.14h8M179.00 797.14v8 M379.00 801.14h8M383.00 797.14v8 M545.00 801.14h8M549.00 797.14v8 M683.00 801.14h8M687.00 797.14v8 M742.00 801.14h8M746.00 797.14v8 M1074.75 801.14h8M1078.75 797.14v8 M1216.75 801.14h8M1220.75 797.14v8 M1304.70 801.14h8M1308.70 797.14v8 M1467.00 801.14h8M1471.00 797.14v8 M1559.00 801.14h8M1563.00 797.14v8"/>
<text x="176.20" y="798.84" fill="#fff" font-size="10" text-anchor="middle">LYR</text>
<text x="372.70" y="798.84" fill="#fff" font-size="10" text-anchor="middle">JMC</text>
<text x="558.80" y="798.84" fill="#fff" font-size="10" text-anchor="middle">JPE</text>
<text x="671.00" y="798.84" fill="#fff" font-size="10" text-anchor="middle">PAU</text>
<text x="774.00" y="798.84" fill="#fff" font-size="10" text-anchor="middle">NIA</text>
<text x="1050.00" y="798.84" fill="#fff" font-size="10" text-anchor="middle">STA</text>
<text x="1206.00" y="798.84" fill="#fff" font-size="10" text-anchor="middle">NOO</text>
<text x="1353.00" y="798.84" fill="#fff" font-size="10" text-anchor="middle">COM</text>
<text x="1470.50" y="798.84" fill="#fff" font-size="10" text-anchor="middle">NCC</text>
<text x="1564.00" y="798.84" fill="#fff" font-size="10" text-anchor="middle">FED</text>
<path stroke="#fff" stroke-width="2" fill="none" d="M202.00 784.81h8M206.00 780.81v8 M401.00 784.81h8M405.00 780.81v8 M525.50 784.81h8M529.50 780.81v8 M639.00 784.81h8M643.00 780.81v8 M815.00 784.81h8M819.00 780.81v8 M959.75 784.81h8M963.75 780.81v8 M1040.50 784.81h8M1044.50 780.81v8 M1187.50 784.81h8M1191.50 780.81v8 M1250.50 784.81h8M1254.50 780.81v8 M1324.80 784.81h8M1328.80 780.81v8 M1402.70 784.81h8M1406.70 780.81v8 M1546.00 784.81h8M1550.00 780.81v8"/>
<text x="206.20" y="782.51" fill="#fff" font-size="10" text-anchor="middle">HVI</text>
<text x="412.00" y="782.51" fill="#fff" font-size="10" text-anchor="middle">ARI</text>
<text x="530.00" y="782.51" fill="#fff" font-size="10" text-anchor="middle">SZC</text>
<text x="618.80" y="782.51" fill="#fff" font-size="10" text-anchor="middle">CAP</text>
<text x="818.20" y="782.51" fill="#fff" font-size="10" text-anchor="middle">NUE</text>
<text x="961.00" y="782.51" fill="#fff" font-size="10" text-anchor="middle">OCT</text>
<text x="1059.50" y="782.51" fill="#fff" font-size="10" text-anchor="middle">ORI</text>
<text x="1186.00" y="782.51" fill="#fff" font-size="10" text-anchor="middle">AMO</text>
<text x="1255.00" y="782.51" fill="#fff" font-size="10" text-anchor="middle">DPC</text>
<text x="1328.80" y="782.51" fill="#fff" font-size="10" text-anchor="middle">XVI</text>
<text x="1407.00" y="782.51" fill="#fff" font-size="10" text-anchor="middle">QUA</text>
<text x="1559.50" y="782.51" fill="#fff" font-size="10" text-anchor="middle">AAN</text>
<path stroke="#fff" stroke-width="2" fill="none" d="M356.00 768.48h8M360.00 764.48v8 M427.00 768.48h8M431.00 764.48v8 M477.00 768.48h8M481.00 764.48v8 M536.00 768.48h8M540.00 764.48v8 M571.00 768.48h8M575.00 764.48v8 M630.50 768.48h8M634.50 764.48v8 M974.00 768.48h8M978.00 764.48v8 M1069.75 768.48h8M1073.75 764.48v8 M1108.50 768.48h8M1112.50 764.48v8 M1177.75 768.48h8M1181.75 764.48v8 M1256.00 768.48h8M1260.00 764.48v8 M1467.00 768.48h8M1471.00 764.48v8"/>
<text x="353.10" y="766.18" fill="#fff" font-size="10" text-anchor="middle">TAH</text>
<text x="431.50" y="766.18" fill="#fff" font-size="10" text-anchor="middle">JEA</text>
<text x="481.00" y="766.18" fill="#fff" font-size="10" text-anchor="middle">JIP</text>
<text x="538.90" y="766.18" fill="#fff" font-size="10" text-anchor="middle">PPS</text>
<text x="578.80" y="766.18" fill="#fff" font-size="10" text-anchor="middle">ZCS</text>
<text x="633.00" y="766.18" fill="#fff" font-size="10" text-anchor="middle">GDR</text>
<text x="971.00" y="766.18" fill="#fff" font-size="10" text-anchor="middle">DRA</text>
<text x="1073.00" y="766.18" fill="#fff" font-size="10" text-anchor="middle">LUM</text>
<text x="1113.00" y="766.18" fill="#fff" font-size="10" text-anchor="middle">RPU</text>
<text x="1177.50" y="766.18" fill="#fff" font-size="10" text-anchor="middle">THA</text>
<text x="1259.50" y="766.18" fill="#fff" font-size="10" text-anchor="middle">PSU</text>
<text x="1470.50" y="766.18" fill="#fff" font-size="10" text-anchor="middle">XCB</text>
<path stroke="#fff" stroke-width="2" fill="none" d="M428.00 752.15h8M432.00 748.15v8 M540.00 752.15h8M544.00 748.15v8 M575.00 752.15h8M579.00 748.15v8 M703.50 752.15h8M707.50 748.15v8 M1094.75 752.15h8M1098.75 748.15v8 M1271.00 752.15h8M1275.00 748.15v8 M1477.00 752.15h8M1481.00 748.15v8"/>
<text x="431.40" y="749.85" fill="#fff" font-size="10" text-anchor="middle">JRC</text>
<text x="544.00" y="749.85" fill="#fff" font-size="10" text-anchor="middle">CAN</text>
<text x="578.00" y="749.85" fill="#fff" font-size="10" text-anchor="middle">FAN</text>
<text x="681.00" y="749.85" fill="#fff" font-size="10" text-anchor="middle">PER</text>
<text x="1050.00" y="749.85" fill="#fff" font-size="10" text-anchor="middle">CTA</text>
<text x="1265.00" y="749.85" fill="#fff" font-size="10" text-anchor="middle">HYD</text>
<text x="1481.00" y="749.85" fill="#fff" font-size="10" text-anchor="middle">XUM</text>
<path stroke="#fff" stroke-width="2" fill="none" d="M437.60 735.82h8M441.60 731.82v8 M630.50 735.82h8M634.50 731.82v8 M1038.75 735.82h8M1042.75 731.82v8 M1167.75 735.82h8M1171.75 731.82v8 M1274.75 735.82h8M1278.75 731.82v8 M1497.00 735.82h8M1501.00 731.82v8"/>
<text x="441.80" y="733.52" fill="#fff" font-size="10" text-anchor="middle">COR</text>
<text x="658.00" y="733.52" fill="#fff" font-size="10" text-anchor="middle">SDA</text>
<text x="1049.00" y="733.52" fill="#fff" font-size="10" text-anchor="middle">LMI</text>
<text x="1166.00" y="733.52" fill="#fff" font-size="10" text-anchor="middle">LEO</text>
<text x="1274.00" y="733.52" fill="#fff" font-size="10" text-anchor="middle">EHY</text>
<text x="1501.00" y="733.52" fill="#fff" font-size="10" text-anchor="middle">ECV</text>
<path stroke="#fff" stroke-width="2" fill="none" d="M598.50 719.49h8M602.50 715.49v8 M727.00 719.49h8M731.00 715.49v8 M1187.75 719.49h8M1191.75 715.49v8 M1270.50 719.49h8M1274.50 715.49v8"/>
<text x="603.90" y="717.19" fill="#fff" font-size="10" text-anchor="middle">JXA</text>
<text x="715.80" y="717.19" fill="#fff" font-size="10" text-anchor="middle">KCG</text>
<text x="1156.75" y="717.19" fill="#fff" font-size="10" text-anchor="middle">AND</text>
<text x="1275.00" y="717.19" fill="#fff" font-size="10" text-anchor="middle">DAD</text>
<path stroke="#fff" stroke-width="2" fill="none" d="M688.00 703.16h8M692.00 699.16v8 M1101.75 703.16h8M1105.75 699.16v8 M1206.75 703.16h8M1210.75 699.16v8 M1299.75 703.16h8M1303.75 699.16v8"/>
<text x="666.20" y="700.86" fill="#fff" font-size="10" text-anchor="middle">ERI</text>
<text x="1108.00" y="700.86" fill="#fff" font-size="10" text-anchor="middle">SLD</text>
<text x="1211.00" y="700.86" fill="#fff" font-size="10" text-anchor="middle">ORS</text>
<text x="1300.00" y="700.86" fill="#fff" font-size="10" text-anchor="middle">GEM</text>
<path stroke="#fff" stroke-width="2" fill="none" d="M1118.50 686.83h8M1122.50 682.83v8"/>
<text x="1122.50" y="684.53" fill="#fff" font-size="10" text-anchor="middle">KUM</text>
<path stroke="#ff0000" stroke-width="1.7" stroke-dasharray="4.1 1.8" d="M1004.45 641.50V842.45"/>
<rect x="20.42" y="641.50" width="1764.98" height="200.95" stroke="#fff" stroke-width="1.1" fill="none"/>
<path stroke="#fff" stroke-width="1.1" d="M20.42 842.45V847.35"/>
<text x="20.42" y="861.7" fill="#fff" font-size="13.7" text-anchor="middle">0</text>
<path stroke="#fff" stroke-width="1.1" d="M265.57 842.45V847.35"/>
<text x="265.57" y="861.7" fill="#fff" font-size="13.7" text-anchor="middle">50</text>
<path stroke="#fff" stroke-width="1.1" d="M510.72 842.45V847.35"/>
<text x="510.72" y="861.7" fill="#fff" font-size="13.7" text-anchor="middle">100</text>
<path stroke="#fff" stroke-width="1.1" d="M755.87 842.45V847.35"/>
<text x="755.87" y="861.7" fill="#fff" font-size="13.7" text-anchor="middle">150</text>
<path stroke="#fff" stroke-width="1.1" d="M1001.02 842.45V847.35"/>
<text x="1001.02" y="861.7" fill="#fff" font-size="13.7" text-anchor="middle">200</text>
<path stroke="#fff" stroke-width="1.1" d="M1246.17 842.45V847.35"/>
<text x="1246.17" y="861.7" fill="#fff" font-size="13.7" text-anchor="middle">250</text>
<path stroke="#fff" stroke-width="1.1" d="M1491.32 842.45V847.35"/>
<text x="1491.32" y="861.7" fill="#fff" font-size="13.7" text-anchor="middle">300</text>
<path stroke="#fff" stroke-width="1.1" d="M1736.47 842.45V847.35"/>
<text x="1736.47" y="861.7" fill="#fff" font-size="13.7" text-anchor="middle">350</text>
<text x="902.3" y="882" fill="#fff" font-size="14" text-anchor="middle" textLength="145.5" lengthAdjust="spacingAndGlyphs">Solar longitude (deg)</text>
</svg></body></html>
